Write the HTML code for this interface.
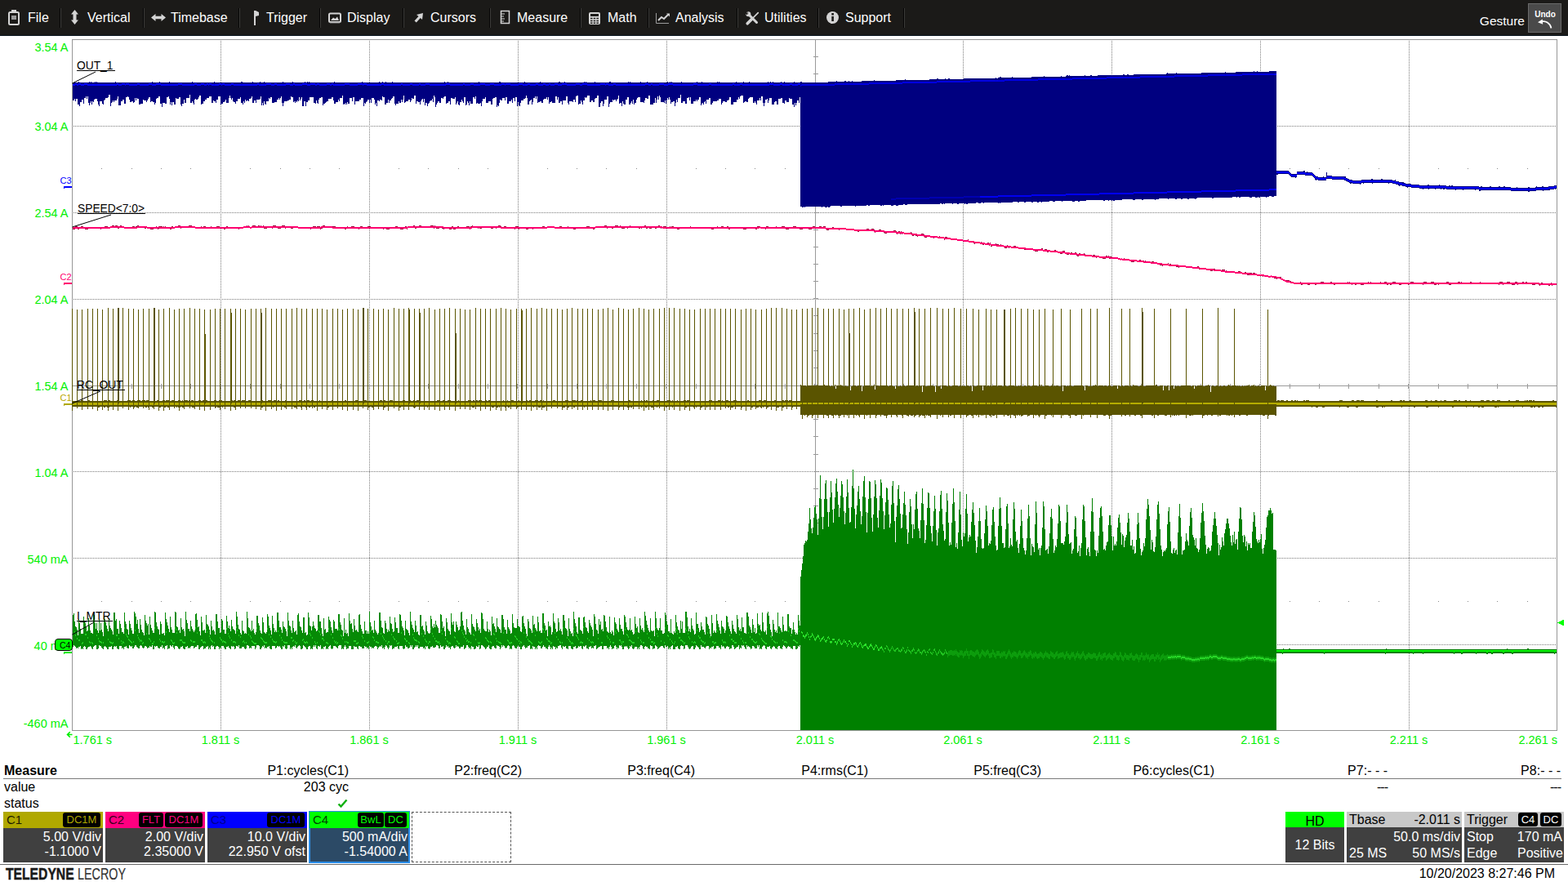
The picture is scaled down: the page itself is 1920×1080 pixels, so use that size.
<!DOCTYPE html>
<html lang="en"><head><meta charset="utf-8"><title>Oscilloscope</title>
<style>
html,body{margin:0;padding:0;background:#fff;}
body{width:1920px;height:1080px;position:relative;overflow:hidden;font-family:"Liberation Sans", Arial, sans-serif;}
.t{position:absolute;white-space:nowrap;}
.abs{position:absolute;}
#bar{position:absolute;left:0;top:0;width:1920px;height:43px;background:#1b1a18;border-bottom:1px solid #08141f;}
.sep{position:absolute;top:10px;width:1px;height:24px;background:#050505;border-right:1px solid #3c3b39;}
.ch{position:absolute;top:994px;width:122px;height:62px;background:#404040;}
.ch .hd{position:absolute;left:0;top:0;width:100%;height:20px;}
.bdg{position:absolute;top:1px;height:18px;background:#000;border-radius:3px;font-size:13px;line-height:18px;text-align:center;}
svg{position:absolute;left:0;top:0;}
</style></head><body>
<svg width="1920" height="1080" viewBox="0 0 1920 1080" shape-rendering="crispEdges"><path d="M90 154.5H1906" stroke="#7c7c7c" stroke-width="1" stroke-dasharray="1 1" fill="none"/><path d="M90 260.5H1906" stroke="#7c7c7c" stroke-width="1" stroke-dasharray="1 1" fill="none"/><path d="M90 366.5H1906" stroke="#7c7c7c" stroke-width="1" stroke-dasharray="1 1" fill="none"/><path d="M90 577.5H1906" stroke="#7c7c7c" stroke-width="1" stroke-dasharray="1 1" fill="none"/><path d="M90 683.5H1906" stroke="#7c7c7c" stroke-width="1" stroke-dasharray="1 1" fill="none"/><path d="M90 789.5H1906" stroke="#7c7c7c" stroke-width="1" stroke-dasharray="1 1" fill="none"/><path d="M270.5 50V894" stroke="#7c7c7c" stroke-width="1" stroke-dasharray="1 1" fill="none"/><path d="M452.5 50V894" stroke="#7c7c7c" stroke-width="1" stroke-dasharray="1 1" fill="none"/><path d="M634.5 50V894" stroke="#7c7c7c" stroke-width="1" stroke-dasharray="1 1" fill="none"/><path d="M816.5 50V894" stroke="#7c7c7c" stroke-width="1" stroke-dasharray="1 1" fill="none"/><path d="M1179.5 50V894" stroke="#7c7c7c" stroke-width="1" stroke-dasharray="1 1" fill="none"/><path d="M1361.5 50V894" stroke="#7c7c7c" stroke-width="1" stroke-dasharray="1 1" fill="none"/><path d="M1543.5 50V894" stroke="#7c7c7c" stroke-width="1" stroke-dasharray="1 1" fill="none"/><path d="M1725.5 50V894" stroke="#7c7c7c" stroke-width="1" stroke-dasharray="1 1" fill="none"/><path d="M124 206.5h1M161 206.5h1M197 206.5h1M233 206.5h1M306 206.5h1M343 206.5h1M379 206.5h1M415 206.5h1M488 206.5h1M524 206.5h1M561 206.5h1M597 206.5h1M670 206.5h1M706 206.5h1M742 206.5h1M779 206.5h1M852 206.5h1M888 206.5h1M924 206.5h1M961 206.5h1M1033 206.5h1M1070 206.5h1M1106 206.5h1M1142 206.5h1M1215 206.5h1M1252 206.5h1M1288 206.5h1M1324 206.5h1M1397 206.5h1M1433 206.5h1M1470 206.5h1M1506 206.5h1M1579 206.5h1M1615 206.5h1M1651 206.5h1M1688 206.5h1M1761 206.5h1M1797 206.5h1M1833 206.5h1M1870 206.5h1M124 736.5h1M161 736.5h1M197 736.5h1M233 736.5h1M306 736.5h1M343 736.5h1M379 736.5h1M415 736.5h1M488 736.5h1M524 736.5h1M561 736.5h1M597 736.5h1M670 736.5h1M706 736.5h1M742 736.5h1M779 736.5h1M852 736.5h1M888 736.5h1M924 736.5h1M961 736.5h1M1033 736.5h1M1070 736.5h1M1106 736.5h1M1142 736.5h1M1215 736.5h1M1252 736.5h1M1288 736.5h1M1324 736.5h1M1397 736.5h1M1433 736.5h1M1470 736.5h1M1506 736.5h1M1579 736.5h1M1615 736.5h1M1651 736.5h1M1688 736.5h1M1761 736.5h1M1797 736.5h1M1833 736.5h1M1870 736.5h1" stroke="#8a8a8a" stroke-width="1" fill="none"/><path d="M88 472.5H1906M124.5 470V476M161.5 470V476M197.5 470V476M233.5 470V476M270.5 470V476M306.5 470V476M343.5 470V476M379.5 470V476M415.5 470V476M452.5 470V476M488.5 470V476M524.5 470V476M561.5 470V476M597.5 470V476M633.5 470V476M670.5 470V476M706.5 470V476M742.5 470V476M779.5 470V476M815.5 470V476M852.5 470V476M888.5 470V476M924.5 470V476M961.5 470V476M997.5 470V476M1033.5 470V476M1070.5 470V476M1106.5 470V476M1142.5 470V476M1179.5 470V476M1215.5 470V476M1252.5 470V476M1288.5 470V476M1324.5 470V476M1361.5 470V476M1397.5 470V476M1433.5 470V476M1470.5 470V476M1506.5 470V476M1542.5 470V476M1579.5 470V476M1615.5 470V476M1651.5 470V476M1688.5 470V476M1724.5 470V476M1761.5 470V476M1797.5 470V476M1833.5 470V476M1870.5 470V476M998.5 48V894M996 69.5H1002M996 90.5H1002M996 111.5H1002M996 133.5H1002M996 154.5H1002M996 175.5H1002M996 196.5H1002M996 217.5H1002M996 238.5H1002M996 260.5H1002M996 281.5H1002M996 302.5H1002M996 323.5H1002M996 344.5H1002M996 365.5H1002M996 386.5H1002M996 408.5H1002M996 429.5H1002M996 450.5H1002M996 471.5H1002M996 492.5H1002M996 513.5H1002M996 534.5H1002M996 556.5H1002M996 577.5H1002M996 598.5H1002M996 619.5H1002M996 640.5H1002M996 661.5H1002M996 682.5H1002M996 704.5H1002M996 725.5H1002M996 746.5H1002M996 767.5H1002M996 788.5H1002M996 809.5H1002M996 831.5H1002M996 852.5H1002M996 873.5H1002" stroke="#9a9a9a" stroke-width="1" fill="none"/><path d="M89.5 101V123M90.5 101V123M91.5 101V121M92.5 101V124M93.5 101V121M94.5 101V121M95.5 101V128M96.5 100V128M97.5 101V130M98.5 101V125M99.5 101V125M100.5 101V122M101.5 101V122M102.5 101V127M103.5 101V120M104.5 101V120M105.5 101V118M106.5 101V121M107.5 101V118M108.5 101V126M109.5 100V129M110.5 101V126M111.5 100V124M112.5 101V128M113.5 101V124M114.5 101V125M115.5 101V122M116.5 100V121M117.5 101V121M118.5 100V121M119.5 101V124M120.5 101V128M121.5 101V130M122.5 101V124M123.5 101V124M124.5 101V124M125.5 101V127M126.5 101V128M127.5 101V123M128.5 101V122M129.5 101V120M130.5 101V120M131.5 101V120M132.5 101V119M133.5 101V116M134.5 101V116M135.5 101V130M136.5 101V126M137.5 101V125M138.5 101V123M139.5 101V125M140.5 101V123M141.5 100V123M142.5 101V123M143.5 101V121M144.5 101V118M145.5 101V129M146.5 101V129M147.5 101V129M148.5 101V124M149.5 101V124M150.5 101V122M151.5 101V122M152.5 101V127M153.5 101V127M154.5 101V119M155.5 101V119M156.5 101V118M157.5 101V119M158.5 101V122M159.5 101V125M160.5 101V125M161.5 101V124M162.5 101V124M163.5 101V126M164.5 101V125M165.5 101V120M166.5 101V123M167.5 101V120M168.5 101V121M169.5 101V121M170.5 101V128M171.5 101V128M172.5 101V127M173.5 101V127M174.5 101V127M175.5 101V122M176.5 101V123M177.5 101V123M178.5 101V123M179.5 101V125M180.5 101V123M181.5 101V121M182.5 101V119M183.5 101V119M184.5 101V125M185.5 101V124M186.5 100V124M187.5 101V125M188.5 101V125M189.5 101V128M190.5 101V126M191.5 101V121M192.5 101V120M193.5 101V120M194.5 101V118M195.5 100V118M196.5 101V127M197.5 101V127M198.5 101V131M199.5 101V126M200.5 101V126M201.5 101V126M202.5 101V127M203.5 101V127M204.5 101V119M205.5 101V119M206.5 101V118M207.5 100V121M208.5 101V128M209.5 101V125M210.5 101V129M211.5 101V125M212.5 101V125M213.5 101V128M214.5 101V128M215.5 101V120M216.5 101V121M217.5 101V121M218.5 101V121M219.5 101V119M220.5 101V119M221.5 101V128M222.5 101V130M223.5 101V127M224.5 101V127M225.5 101V122M226.5 101V126M227.5 101V126M228.5 101V120M229.5 101V120M230.5 101V120M231.5 101V120M232.5 101V116M233.5 101V126M234.5 101V126M235.5 100V124M236.5 101V126M237.5 101V128M238.5 101V122M239.5 101V121M240.5 101V122M241.5 101V122M242.5 101V121M243.5 101V119M244.5 101V117M245.5 101V117M246.5 101V128M247.5 101V127M248.5 101V127M249.5 101V124M250.5 101V124M251.5 101V122M252.5 101V122M253.5 101V120M254.5 101V120M255.5 101V120M256.5 101V118M257.5 101V118M258.5 101V118M259.5 101V126M260.5 101V126M261.5 101V123M262.5 100V124M263.5 101V124M264.5 101V126M265.5 101V122M266.5 101V122M267.5 101V118M268.5 101V118M269.5 101V118M270.5 101V128M271.5 101V127M272.5 101V127M273.5 101V125M274.5 101V125M275.5 101V124M276.5 101V122M277.5 101V126M278.5 101V126M279.5 101V126M280.5 101V120M281.5 101V117M282.5 101V120M283.5 101V122M284.5 101V120M285.5 101V124M286.5 101V125M287.5 101V125M288.5 101V127M289.5 101V124M290.5 101V124M291.5 101V121M292.5 101V121M293.5 101V121M294.5 101V119M295.5 100V126M296.5 100V126M297.5 101V128M298.5 101V124M299.5 101V126M300.5 101V122M301.5 101V124M302.5 101V123M303.5 101V123M304.5 101V124M305.5 101V121M306.5 101V121M307.5 101V120M308.5 101V118M309.5 100V126M310.5 101V126M311.5 101V123M312.5 101V123M313.5 101V126M314.5 101V122M315.5 101V122M316.5 101V122M317.5 101V122M318.5 100V121M319.5 101V118M320.5 101V129M321.5 101V126M322.5 101V129M323.5 100V124M324.5 101V127M325.5 101V128M326.5 101V124M327.5 101V124M328.5 101V124M329.5 101V120M330.5 101V121M331.5 101V119M332.5 101V119M333.5 101V126M334.5 101V126M335.5 101V126M336.5 101V125M337.5 101V125M338.5 101V125M339.5 101V122M340.5 101V122M341.5 101V120M342.5 101V122M343.5 101V120M344.5 101V118M345.5 101V126M346.5 100V130M347.5 101V126M348.5 101V124M349.5 101V124M350.5 101V124M351.5 101V124M352.5 101V123M353.5 101V123M354.5 101V122M355.5 101V122M356.5 101V118M357.5 101V119M358.5 100V119M359.5 101V125M360.5 101V124M361.5 101V126M362.5 101V124M363.5 101V125M364.5 101V123M365.5 101V124M366.5 101V119M367.5 101V123M368.5 101V121M369.5 101V119M370.5 101V130M371.5 101V130M372.5 101V124M373.5 100V124M374.5 101V130M375.5 101V125M376.5 100V125M377.5 101V123M378.5 100V123M379.5 101V119M380.5 101V119M381.5 101V119M382.5 101V119M383.5 101V119M384.5 101V126M385.5 101V126M386.5 101V127M387.5 101V123M388.5 101V126M389.5 101V127M390.5 101V122M391.5 101V120M392.5 101V120M393.5 101V119M394.5 101V119M395.5 101V129M396.5 101V127M397.5 101V127M398.5 101V126M399.5 101V125M400.5 101V124M401.5 101V124M402.5 101V121M403.5 101V121M404.5 101V121M405.5 101V121M406.5 101V119M407.5 101V119M408.5 101V123M409.5 100V127M410.5 101V127M411.5 101V125M412.5 101V125M413.5 101V125M414.5 101V122M415.5 101V124M416.5 101V120M417.5 101V120M418.5 101V120M419.5 101V117M420.5 101V128M421.5 101V127M422.5 101V128M423.5 101V126M424.5 101V128M425.5 101V125M426.5 101V127M427.5 101V127M428.5 101V120M429.5 101V120M430.5 101V120M431.5 101V124M432.5 101V119M433.5 101V119M434.5 101V128M435.5 101V124M436.5 101V124M437.5 101V124M438.5 101V124M439.5 101V124M440.5 101V122M441.5 101V122M442.5 101V120M443.5 100V120M444.5 101V120M445.5 101V130M446.5 101V126M447.5 101V127M448.5 101V125M449.5 101V124M450.5 101V122M451.5 101V122M452.5 101V126M453.5 101V122M454.5 101V126M455.5 101V120M456.5 101V120M457.5 101V120M458.5 101V122M459.5 101V128M460.5 101V126M461.5 101V130M462.5 101V123M463.5 101V123M464.5 100V124M465.5 101V122M466.5 101V122M467.5 101V123M468.5 100V118M469.5 101V119M470.5 101V119M471.5 101V128M472.5 100V128M473.5 101V126M474.5 101V126M475.5 101V122M476.5 101V126M477.5 101V123M478.5 101V123M479.5 101V121M480.5 100V120M481.5 101V118M482.5 101V118M483.5 101V127M484.5 101V129M485.5 101V127M486.5 101V127M487.5 101V127M488.5 101V124M489.5 101V126M490.5 101V126M491.5 101V122M492.5 101V125M493.5 101V122M494.5 101V117M495.5 101V126M496.5 101V125M497.5 101V124M498.5 101V124M499.5 101V124M500.5 101V122M501.5 101V122M502.5 101V125M503.5 101V123M504.5 101V120M505.5 101V121M506.5 101V121M507.5 101V117M508.5 101V117M509.5 101V127M510.5 101V124M511.5 101V124M512.5 101V125M513.5 101V125M514.5 101V128M515.5 101V124M516.5 101V122M517.5 101V121M518.5 101V125M519.5 101V121M520.5 101V129M521.5 101V126M522.5 101V126M523.5 101V130M524.5 101V127M525.5 101V126M526.5 101V124M527.5 101V123M528.5 101V123M529.5 101V121M530.5 101V125M531.5 101V117M532.5 101V119M533.5 101V131M534.5 101V128M535.5 101V126M536.5 101V124M537.5 101V124M538.5 101V126M539.5 101V126M540.5 101V120M541.5 101V120M542.5 101V121M543.5 101V119M544.5 100V118M545.5 101V118M546.5 101V127M547.5 101V126M548.5 100V126M549.5 101V124M550.5 101V124M551.5 101V128M552.5 101V120M553.5 101V120M554.5 101V121M555.5 101V121M556.5 101V121M557.5 101V119M558.5 101V128M559.5 101V126M560.5 101V124M561.5 101V128M562.5 101V129M563.5 101V125M564.5 101V125M565.5 101V122M566.5 101V124M567.5 101V126M568.5 101V119M569.5 101V119M570.5 101V129M571.5 101V128M572.5 101V124M573.5 101V126M574.5 101V129M575.5 101V124M576.5 101V127M577.5 101V127M578.5 101V127M579.5 101V119M580.5 101V119M581.5 101V121M582.5 101V118M583.5 101V127M584.5 101V126M585.5 101V127M586.5 100V127M587.5 101V127M588.5 101V126M589.5 101V130M590.5 101V124M591.5 101V121M592.5 101V121M593.5 101V121M594.5 101V119M595.5 101V126M596.5 101V126M597.5 101V126M598.5 101V124M599.5 101V124M600.5 101V124M601.5 101V128M602.5 101V128M603.5 101V121M604.5 101V120M605.5 101V120M606.5 101V119M607.5 101V119M608.5 101V131M609.5 101V129M610.5 101V130M611.5 100V126M612.5 100V122M613.5 101V123M614.5 101V123M615.5 101V120M616.5 101V120M617.5 101V120M618.5 101V123M619.5 101V119M620.5 101V119M621.5 101V127M622.5 101V127M623.5 101V124M624.5 101V124M625.5 101V124M626.5 101V122M627.5 101V126M628.5 101V120M629.5 101V120M630.5 101V124M631.5 101V119M632.5 101V119M633.5 101V130M634.5 101V125M635.5 101V129M636.5 101V130M637.5 101V126M638.5 101V123M639.5 101V123M640.5 101V123M641.5 101V121M642.5 100V121M643.5 101V120M644.5 101V117M645.5 101V120M646.5 101V128M647.5 101V128M648.5 101V124M649.5 101V123M650.5 101V122M651.5 101V128M652.5 101V125M653.5 101V120M654.5 101V120M655.5 101V118M656.5 101V121M657.5 101V118M658.5 101V126M659.5 101V125M660.5 101V125M661.5 100V124M662.5 101V124M663.5 101V126M664.5 101V126M665.5 101V122M666.5 101V121M667.5 101V121M668.5 101V121M669.5 101V119M670.5 101V122M671.5 101V119M672.5 101V127M673.5 101V125M674.5 101V125M675.5 101V124M676.5 101V126M677.5 101V126M678.5 101V126M679.5 101V126M680.5 101V118M681.5 101V118M682.5 101V122M683.5 101V119M684.5 100V126M685.5 100V126M686.5 101V124M687.5 101V124M688.5 101V128M689.5 101V123M690.5 101V123M691.5 100V123M692.5 101V123M693.5 101V118M694.5 101V118M695.5 101V126M696.5 101V128M697.5 101V124M698.5 101V124M699.5 101V124M700.5 101V124M701.5 101V125M702.5 101V122M703.5 101V122M704.5 101V125M705.5 101V118M706.5 101V117M707.5 101V117M708.5 101V128M709.5 101V127M710.5 101V127M711.5 101V123M712.5 101V125M713.5 101V128M714.5 101V123M715.5 100V123M716.5 101V119M717.5 100V120M718.5 101V119M719.5 101V117M720.5 101V117M721.5 101V117M722.5 101V125M723.5 101V125M724.5 101V123M725.5 101V123M726.5 101V125M727.5 101V125M728.5 100V121M729.5 101V120M730.5 101V120M731.5 101V117M732.5 101V117M733.5 101V131M734.5 101V131M735.5 101V126M736.5 101V124M737.5 101V124M738.5 101V130M739.5 101V127M740.5 101V122M741.5 101V122M742.5 101V122M743.5 101V118M744.5 101V118M745.5 101V131M746.5 100V127M747.5 100V125M748.5 101V125M749.5 101V125M750.5 101V122M751.5 101V123M752.5 101V122M753.5 101V122M754.5 101V124M755.5 101V122M756.5 101V121M757.5 101V117M758.5 101V127M759.5 101V126M760.5 101V126M761.5 101V130M762.5 101V124M763.5 101V127M764.5 101V128M765.5 101V128M766.5 101V122M767.5 101V122M768.5 101V119M769.5 100V119M770.5 101V128M771.5 100V128M772.5 101V126M773.5 101V124M774.5 101V127M775.5 101V122M776.5 101V128M777.5 101V126M778.5 101V126M779.5 101V122M780.5 101V120M781.5 101V119M782.5 101V119M783.5 101V119M784.5 100V125M785.5 101V125M786.5 101V125M787.5 101V125M788.5 101V126M789.5 101V123M790.5 101V120M791.5 101V120M792.5 100V121M793.5 101V121M794.5 101V117M795.5 101V117M796.5 101V128M797.5 101V128M798.5 101V128M799.5 101V128M800.5 101V126M801.5 101V126M802.5 101V120M803.5 101V126M804.5 101V122M805.5 101V118M806.5 101V122M807.5 101V117M808.5 101V119M809.5 101V125M810.5 101V125M811.5 101V125M812.5 101V125M813.5 101V126M814.5 101V123M815.5 101V127M816.5 101V123M817.5 100V120M818.5 101V122M819.5 101V119M820.5 100V122M821.5 101V127M822.5 100V125M823.5 101V125M824.5 101V124M825.5 101V124M826.5 101V130M827.5 101V126M828.5 101V122M829.5 101V125M830.5 101V120M831.5 101V120M832.5 101V120M833.5 101V116M834.5 100V126M835.5 101V126M836.5 101V124M837.5 101V124M838.5 101V124M839.5 101V127M840.5 101V127M841.5 101V120M842.5 101V120M843.5 101V119M844.5 101V123M845.5 101V119M846.5 101V127M847.5 101V127M848.5 101V127M849.5 101V124M850.5 101V124M851.5 101V124M852.5 101V122M853.5 100V124M854.5 101V122M855.5 101V122M856.5 101V119M857.5 101V119M858.5 101V129M859.5 100V127M860.5 101V126M861.5 101V128M862.5 101V125M863.5 101V124M864.5 101V127M865.5 101V122M866.5 101V122M867.5 101V122M868.5 101V120M869.5 101V120M870.5 101V128M871.5 101V128M872.5 101V126M873.5 101V124M874.5 101V124M875.5 101V124M876.5 101V124M877.5 101V124M878.5 100V123M879.5 101V123M880.5 100V121M881.5 101V121M882.5 101V121M883.5 101V128M884.5 101V126M885.5 101V124M886.5 101V124M887.5 101V124M888.5 101V125M889.5 101V125M890.5 101V123M891.5 101V123M892.5 101V122M893.5 101V119M894.5 101V119M895.5 101V128M896.5 101V128M897.5 101V128M898.5 101V125M899.5 101V125M900.5 101V125M901.5 100V125M902.5 101V122M903.5 101V122M904.5 101V119M905.5 101V121M906.5 101V118M907.5 101V117M908.5 101V117M909.5 101V117M910.5 100V126M911.5 101V125M912.5 101V124M913.5 101V124M914.5 101V125M915.5 101V125M916.5 101V121M917.5 100V120M918.5 101V119M919.5 101V119M920.5 101V119M921.5 101V119M922.5 101V126M923.5 101V126M924.5 101V124M925.5 101V126M926.5 101V128M927.5 101V123M928.5 101V123M929.5 101V123M930.5 101V120M931.5 101V123M932.5 101V118M933.5 101V118M934.5 101V126M935.5 101V130M936.5 101V126M937.5 101V122M938.5 101V122M939.5 101V121M940.5 100V126M941.5 101V123M942.5 101V120M943.5 100V120M944.5 101V120M945.5 101V128M946.5 100V128M947.5 101V128M948.5 101V125M949.5 101V124M950.5 101V124M951.5 101V128M952.5 101V128M953.5 101V121M954.5 101V121M955.5 101V121M956.5 100V120M957.5 101V120M958.5 101V126M959.5 101V126M960.5 100V127M961.5 101V123M962.5 101V123M963.5 101V125M964.5 101V125M965.5 101V125M966.5 101V120M967.5 101V121M968.5 101V121M969.5 101V121M970.5 101V128M971.5 101V128M972.5 100V131M973.5 101V126M974.5 101V129M975.5 101V126M976.5 101V123M977.5 101V123M978.5 101V126M979.5 101V119" stroke="#000080" stroke-width="1" fill="none" /><path d="M89.5 103V105M90.5 103V105M91.5 103V105M92.5 102V104M93.5 102V104M94.5 103V105M95.5 103V105M96.5 102V104M97.5 102V104M98.5 102V104M99.5 103V105M100.5 103V105M101.5 103V105M102.5 103V105M103.5 102V104M104.5 102V104M105.5 102V104M106.5 102V104M107.5 103V105M108.5 103V105M109.5 103V105M110.5 103V105M111.5 103V105M112.5 103V105M113.5 103V105M114.5 103V105M115.5 103V105M116.5 103V105M117.5 103V105M118.5 103V105M119.5 103V105M120.5 103V105M121.5 103V105M122.5 103V105M123.5 103V105M124.5 103V105M125.5 103V105M126.5 103V105M127.5 103V105M128.5 103V105M129.5 103V105M130.5 103V105M131.5 103V105M132.5 103V105M133.5 103V105M134.5 103V105M135.5 103V105M136.5 103V105M137.5 103V105M138.5 103V105M139.5 103V105M140.5 103V105M141.5 103V105M142.5 103V105M143.5 102V104M144.5 102V104M145.5 103V105M146.5 103V105M147.5 103V105M148.5 103V105M149.5 102V104M150.5 102V104M151.5 102V104M152.5 102V104M153.5 103V105M154.5 102V104M155.5 102V104M156.5 102V104M157.5 102V104M158.5 103V105M159.5 103V105M160.5 103V105M161.5 103V105M162.5 103V105M163.5 103V105M164.5 103V105M165.5 103V105M166.5 103V105M167.5 103V105M168.5 102V104M169.5 102V104M170.5 102V104M171.5 103V105M172.5 103V105M173.5 103V105M174.5 103V105M175.5 103V105M176.5 103V105M177.5 103V105M178.5 103V105M179.5 103V105M180.5 103V105M181.5 103V105M182.5 102V104M183.5 102V104M184.5 102V104M185.5 102V104M186.5 103V105M187.5 103V105M188.5 103V105M189.5 103V105M190.5 103V105M191.5 102V104M192.5 102V104M193.5 102V104M194.5 102V104M195.5 102V104M196.5 102V104M197.5 103V105M198.5 103V105M199.5 103V105M200.5 103V105M201.5 103V105M202.5 103V105M203.5 103V105M204.5 103V105M205.5 103V105M206.5 103V105M207.5 103V105M208.5 103V105M209.5 103V105M210.5 103V105M211.5 103V105M212.5 103V105M213.5 103V105M214.5 103V105M215.5 103V105M216.5 103V105M217.5 103V105M218.5 102V104M219.5 102V104M220.5 102V104M221.5 102V104M222.5 102V104M223.5 103V105M224.5 103V105M225.5 103V105M226.5 103V105M227.5 103V105M228.5 103V105M229.5 103V105M230.5 103V105M231.5 103V105M232.5 103V105M233.5 103V105M234.5 103V105M235.5 103V105M236.5 103V105M237.5 103V105M238.5 102V104M239.5 102V104M240.5 102V104M241.5 103V105M242.5 103V105M243.5 103V105M244.5 103V105M245.5 103V105M246.5 102V104M247.5 102V104M248.5 102V104M249.5 102V104M250.5 103V105M251.5 103V105M252.5 103V105M253.5 102V104M254.5 102V104M255.5 103V105M256.5 102V104M257.5 102V104M258.5 102V104M259.5 103V105M260.5 103V105M261.5 103V105M262.5 103V105M263.5 103V105M264.5 103V105M265.5 103V105M266.5 103V105M267.5 103V105M268.5 102V104M269.5 102V104M270.5 102V104M271.5 103V105M272.5 102V104M273.5 102V104M274.5 102V104M275.5 103V105M276.5 103V105M277.5 103V105M278.5 103V105M279.5 103V105M280.5 103V105M281.5 103V105M282.5 103V105M283.5 102V104M284.5 102V104M285.5 102V104M286.5 103V105M287.5 103V105M288.5 103V105M289.5 103V105M290.5 103V105M291.5 103V105M292.5 103V105M293.5 103V105M294.5 103V105M295.5 103V105M296.5 103V105M297.5 103V105M298.5 103V105M299.5 103V105M300.5 103V105M301.5 103V105M302.5 103V105M303.5 103V105M304.5 103V105M305.5 103V105M306.5 103V105M307.5 103V105M308.5 103V105M309.5 103V105M310.5 103V105M311.5 103V105M312.5 103V105M313.5 103V105M314.5 103V105M315.5 102V104M316.5 102V104M317.5 103V105M318.5 103V105M319.5 103V105M320.5 103V105M321.5 103V105M322.5 103V105M323.5 103V105M324.5 103V105M325.5 103V105M326.5 102V104M327.5 102V104M328.5 102V104M329.5 102V104M330.5 102V104M331.5 102V104M332.5 103V105M333.5 103V105M334.5 103V105M335.5 103V105M336.5 102V104M337.5 102V104M338.5 102V104M339.5 103V105M340.5 103V105M341.5 103V105M342.5 103V105M343.5 103V105M344.5 103V105M345.5 103V105M346.5 103V105M347.5 103V105M348.5 103V105M349.5 103V105M350.5 102V104M351.5 102V104M352.5 102V104M353.5 102V104M354.5 102V104M355.5 103V105M356.5 103V105M357.5 103V105M358.5 103V105M359.5 102V104M360.5 102V104M361.5 103V105M362.5 103V105M363.5 103V105M364.5 103V105M365.5 103V105M366.5 103V105M367.5 103V105M368.5 103V105M369.5 103V105M370.5 102V104M371.5 102V104M372.5 102V104M373.5 102V104M374.5 102V104M375.5 102V104M376.5 103V105M377.5 103V105M378.5 103V105M379.5 103V105M380.5 102V104M381.5 102V104M382.5 102V104M383.5 102V104M384.5 102V104M385.5 102V104M386.5 103V105M387.5 103V105M388.5 102V104M389.5 102V104M390.5 102V104M391.5 103V105M392.5 103V105M393.5 103V105M394.5 103V105M395.5 103V105M396.5 103V105M397.5 103V105M398.5 103V105M399.5 103V105M400.5 102V104M401.5 102V104M402.5 102V104M403.5 102V104M404.5 103V105M405.5 103V105M406.5 102V104M407.5 102V104M408.5 103V105M409.5 103V105M410.5 103V105M411.5 103V105M412.5 103V105M413.5 103V105M414.5 103V105M415.5 103V105M416.5 103V105M417.5 103V105M418.5 103V105M419.5 103V105M420.5 103V105M421.5 103V105M422.5 102V104M423.5 102V104M424.5 102V104M425.5 102V104M426.5 102V104M427.5 102V104M428.5 103V105M429.5 103V105M430.5 103V105M431.5 103V105M432.5 103V105M433.5 103V105M434.5 103V105M435.5 103V105M436.5 103V105M437.5 103V105M438.5 102V104M439.5 102V104M440.5 102V104M441.5 102V104M442.5 102V104M443.5 102V104M444.5 103V105M445.5 102V104M446.5 102V104M447.5 102V104M448.5 102V104M449.5 103V105M450.5 103V105M451.5 103V105M452.5 103V105M453.5 103V105M454.5 103V105M455.5 103V105M456.5 103V105M457.5 103V105M458.5 103V105M459.5 103V105M460.5 103V105M461.5 103V105M462.5 103V105M463.5 103V105M464.5 103V105M465.5 103V105M466.5 103V105M467.5 102V104M468.5 102V104M469.5 102V104M470.5 103V105M471.5 103V105M472.5 103V105M473.5 103V105M474.5 103V105M475.5 103V105M476.5 103V105M477.5 103V105M478.5 103V105M479.5 103V105M480.5 103V105M481.5 103V105M482.5 103V105M483.5 103V105M484.5 103V105M485.5 103V105M486.5 103V105M487.5 103V105M488.5 103V105M489.5 103V105M490.5 103V105M491.5 102V104M492.5 102V104M493.5 103V105M494.5 103V105M495.5 103V105M496.5 103V105M497.5 103V105M498.5 103V105M499.5 103V105M500.5 103V105M501.5 103V105M502.5 102V104M503.5 102V104M504.5 102V104M505.5 103V105M506.5 103V105M507.5 103V105M508.5 103V105M509.5 103V105M510.5 103V105M511.5 103V105M512.5 103V105M513.5 102V104M514.5 102V104M515.5 103V105M516.5 103V105M517.5 103V105M518.5 103V105M519.5 103V105M520.5 103V105M521.5 102V104M522.5 102V104M523.5 102V104M524.5 102V104M525.5 102V104M526.5 103V105M527.5 103V105M528.5 103V105M529.5 103V105M530.5 103V105M531.5 103V105M532.5 103V105M533.5 103V105M534.5 103V105M535.5 103V105M536.5 103V105M537.5 103V105M538.5 103V105M539.5 103V105M540.5 103V105M541.5 103V105M542.5 103V105M543.5 103V105M544.5 103V105M545.5 103V105M546.5 102V104M547.5 102V104M548.5 102V104M549.5 102V104M550.5 102V104M551.5 103V105M552.5 103V105M553.5 103V105M554.5 103V105M555.5 103V105M556.5 103V105M557.5 103V105M558.5 103V105M559.5 103V105M560.5 103V105M561.5 103V105M562.5 103V105M563.5 103V105M564.5 103V105M565.5 103V105M566.5 103V105M567.5 102V104M568.5 102V104M569.5 103V105M570.5 103V105M571.5 103V105M572.5 103V105M573.5 103V105M574.5 103V105M575.5 103V105M576.5 102V104M577.5 102V104M578.5 102V104M579.5 102V104M580.5 103V105M581.5 103V105M582.5 103V105M583.5 103V105M584.5 103V105M585.5 103V105M586.5 103V105M587.5 103V105M588.5 102V104M589.5 102V104M590.5 102V104M591.5 102V104M592.5 102V104M593.5 102V104M594.5 103V105M595.5 103V105M596.5 103V105M597.5 103V105M598.5 103V105M599.5 103V105M600.5 102V104M601.5 102V104M602.5 102V104M603.5 102V104M604.5 102V104M605.5 103V105M606.5 103V105M607.5 103V105M608.5 103V105M609.5 103V105M610.5 103V105M611.5 103V105M612.5 103V105M613.5 103V105M614.5 102V104M615.5 102V104M616.5 102V104M617.5 102V104M618.5 103V105M619.5 102V104M620.5 102V104M621.5 102V104M622.5 102V104M623.5 102V104M624.5 102V104M625.5 103V105M626.5 103V105M627.5 103V105M628.5 103V105M629.5 103V105M630.5 103V105M631.5 103V105M632.5 103V105M633.5 103V105M634.5 103V105M635.5 102V104M636.5 102V104M637.5 102V104M638.5 102V104M639.5 102V104M640.5 103V105M641.5 103V105M642.5 103V105M643.5 103V105M644.5 103V105M645.5 103V105M646.5 102V104M647.5 102V104M648.5 102V104M649.5 103V105M650.5 103V105M651.5 103V105M652.5 103V105M653.5 103V105M654.5 103V105M655.5 103V105M656.5 102V104M657.5 102V104M658.5 102V104M659.5 103V105M660.5 103V105M661.5 103V105M662.5 103V105M663.5 103V105M664.5 103V105M665.5 102V104M666.5 102V104M667.5 102V104M668.5 103V105M669.5 103V105M670.5 103V105M671.5 103V105M672.5 102V104M673.5 102V104M674.5 103V105M675.5 103V105M676.5 103V105M677.5 103V105M678.5 103V105M679.5 102V104M680.5 102V104M681.5 102V104M682.5 102V104M683.5 103V105M684.5 103V105M685.5 103V105M686.5 103V105M687.5 103V105M688.5 102V104M689.5 102V104M690.5 102V104M691.5 102V104M692.5 102V104M693.5 102V104M694.5 103V105M695.5 103V105M696.5 103V105M697.5 103V105M698.5 103V105M699.5 103V105M700.5 103V105M701.5 103V105M702.5 103V105M703.5 103V105M704.5 103V105M705.5 102V104M706.5 102V104M707.5 102V104M708.5 102V104M709.5 102V104M710.5 103V105M711.5 103V105M712.5 103V105M713.5 102V104M714.5 102V104M715.5 102V104M716.5 102V104M717.5 102V104M718.5 102V104M719.5 103V105M720.5 103V105M721.5 103V105M722.5 103V105M723.5 103V105M724.5 103V105M725.5 103V105M726.5 103V105M727.5 103V105M728.5 103V105M729.5 103V105M730.5 103V105M731.5 103V105M732.5 103V105M733.5 103V105M734.5 103V105M735.5 102V104M736.5 102V104M737.5 102V104M738.5 102V104M739.5 102V104M740.5 102V104M741.5 103V105M742.5 102V104M743.5 102V104M744.5 102V104M745.5 103V105M746.5 103V105M747.5 103V105M748.5 103V105M749.5 103V105M750.5 103V105M751.5 102V104M752.5 102V104M753.5 102V104M754.5 103V105M755.5 103V105M756.5 103V105M757.5 103V105M758.5 103V105M759.5 103V105M760.5 103V105M761.5 103V105M762.5 103V105M763.5 103V105M764.5 103V105M765.5 103V105M766.5 103V105M767.5 103V105M768.5 103V105M769.5 103V105M770.5 103V105M771.5 103V105M772.5 103V105M773.5 103V105M774.5 103V105M775.5 103V105M776.5 103V105M777.5 103V105M778.5 103V105M779.5 103V105M780.5 103V105M781.5 103V105M782.5 103V105M783.5 103V105M784.5 103V105M785.5 103V105M786.5 103V105M787.5 103V105M788.5 103V105M789.5 103V105M790.5 102V104M791.5 102V104M792.5 102V104M793.5 102V104M794.5 103V105M795.5 103V105M796.5 103V105M797.5 102V104M798.5 102V104M799.5 103V105M800.5 103V105M801.5 103V105M802.5 103V105M803.5 103V105M804.5 103V105M805.5 103V105M806.5 103V105M807.5 102V104M808.5 102V104M809.5 102V104M810.5 102V104M811.5 102V104M812.5 102V104M813.5 103V105M814.5 103V105M815.5 103V105M816.5 103V105M817.5 103V105M818.5 102V104M819.5 102V104M820.5 102V104M821.5 102V104M822.5 102V104M823.5 102V104M824.5 103V105M825.5 103V105M826.5 103V105M827.5 103V105M828.5 103V105M829.5 103V105M830.5 103V105M831.5 103V105M832.5 103V105M833.5 103V105M834.5 103V105M835.5 103V105M836.5 103V105M837.5 103V105M838.5 103V105M839.5 103V105M840.5 103V105M841.5 103V105M842.5 103V105M843.5 103V105M844.5 103V105M845.5 103V105M846.5 103V105M847.5 103V105M848.5 103V105M849.5 102V104M850.5 102V104M851.5 102V104M852.5 102V104M853.5 102V104M854.5 103V105M855.5 103V105M856.5 103V105M857.5 103V105M858.5 103V105M859.5 103V105M860.5 103V105M861.5 103V105M862.5 103V105M863.5 103V105M864.5 103V105M865.5 103V105M866.5 103V105M867.5 103V105M868.5 102V104M869.5 102V104M870.5 102V104M871.5 103V105M872.5 103V105M873.5 103V105M874.5 103V105M875.5 103V105M876.5 103V105M877.5 103V105M878.5 103V105M879.5 103V105M880.5 103V105M881.5 103V105M882.5 103V105M883.5 103V105M884.5 103V105M885.5 103V105M886.5 103V105M887.5 103V105M888.5 103V105M889.5 103V105M890.5 103V105M891.5 103V105M892.5 103V105M893.5 103V105M894.5 103V105M895.5 103V105M896.5 103V105M897.5 102V104M898.5 102V104M899.5 103V105M900.5 103V105M901.5 103V105M902.5 103V105M903.5 103V105M904.5 103V105M905.5 103V105M906.5 102V104M907.5 102V104M908.5 102V104M909.5 103V105M910.5 103V105M911.5 103V105M912.5 103V105M913.5 103V105M914.5 103V105M915.5 103V105M916.5 103V105M917.5 103V105M918.5 103V105M919.5 103V105M920.5 103V105M921.5 103V105M922.5 103V105M923.5 103V105M924.5 103V105M925.5 103V105M926.5 103V105M927.5 103V105M928.5 103V105M929.5 103V105M930.5 103V105M931.5 103V105M932.5 103V105M933.5 103V105M934.5 103V105M935.5 103V105M936.5 103V105M937.5 103V105M938.5 103V105M939.5 103V105M940.5 103V105M941.5 103V105M942.5 102V104M943.5 102V104M944.5 102V104M945.5 102V104M946.5 102V104M947.5 103V105M948.5 103V105M949.5 103V105M950.5 103V105M951.5 103V105M952.5 103V105M953.5 103V105M954.5 103V105M955.5 102V104M956.5 102V104M957.5 102V104M958.5 103V105M959.5 103V105M960.5 103V105M961.5 103V105M962.5 103V105M963.5 103V105M964.5 103V105M965.5 103V105M966.5 103V105M967.5 102V104M968.5 102V104M969.5 102V104M970.5 103V105M971.5 103V105M972.5 103V105M973.5 103V105M974.5 103V105M975.5 103V105M976.5 103V105M977.5 102V104M978.5 102V104M979.5 102V104" stroke="#0000f8" stroke-width="1" fill="none" /><path d="M980.5 100V253M981.5 100V253M982.5 101V254M983.5 101V254M984.5 101V253M985.5 101V254M986.5 101V253M987.5 101V253M988.5 101V253M989.5 101V253M990.5 101V253M991.5 101V253M992.5 101V253M993.5 101V253M994.5 101V253M995.5 101V253M996.5 101V253M997.5 101V253M998.5 101V253M999.5 101V253M1000.5 101V253M1001.5 101V253M1002.5 101V253M1003.5 101V253M1004.5 101V253M1005.5 101V253M1006.5 101V254M1007.5 101V253M1008.5 101V253M1009.5 101V253M1010.5 101V254M1011.5 101V254M1012.5 101V254M1013.5 101V253M1014.5 100V254M1015.5 100V254M1016.5 100V253M1017.5 100V252M1018.5 100V252M1019.5 100V252M1020.5 100V252M1021.5 100V252M1022.5 100V252M1023.5 100V252M1024.5 99V252M1025.5 100V252M1026.5 100V252M1027.5 100V252M1028.5 100V252M1029.5 100V253M1030.5 100V253M1031.5 100V252M1032.5 100V252M1033.5 100V252M1034.5 99V252M1035.5 99V252M1036.5 100V252M1037.5 100V252M1038.5 100V252M1039.5 99V252M1040.5 100V252M1041.5 100V252M1042.5 100V252M1043.5 99V252M1044.5 100V252M1045.5 100V252M1046.5 100V252M1047.5 100V253M1048.5 100V252M1049.5 100V252M1050.5 100V252M1051.5 100V252M1052.5 100V252M1053.5 100V252M1054.5 100V252M1055.5 99V252M1056.5 99V252M1057.5 99V252M1058.5 99V252M1059.5 99V252M1060.5 99V252M1061.5 99V251M1062.5 99V251M1063.5 99V252M1064.5 99V252M1065.5 99V251M1066.5 99V251M1067.5 99V251M1068.5 99V251M1069.5 99V251M1070.5 98V251M1071.5 99V251M1072.5 99V251M1073.5 99V251M1074.5 99V251M1075.5 99V251M1076.5 99V251M1077.5 99V251M1078.5 99V252M1079.5 99V252M1080.5 99V251M1081.5 99V252M1082.5 99V251M1083.5 99V251M1084.5 99V251M1085.5 99V251M1086.5 99V251M1087.5 99V251M1088.5 99V251M1089.5 99V251M1090.5 99V251M1091.5 99V252M1092.5 99V252M1093.5 99V252M1094.5 99V251M1095.5 99V251M1096.5 99V251M1097.5 98V252M1098.5 98V252M1099.5 98V252M1100.5 98V251M1101.5 98V251M1102.5 98V251M1103.5 98V251M1104.5 98V251M1105.5 98V251M1106.5 98V250M1107.5 98V250M1108.5 97V251M1109.5 98V251M1110.5 98V251M1111.5 98V250M1112.5 98V250M1113.5 98V250M1114.5 98V250M1115.5 98V250M1116.5 98V250M1117.5 98V250M1118.5 98V250M1119.5 98V250M1120.5 98V250M1121.5 98V250M1122.5 98V250M1123.5 98V250M1124.5 98V250M1125.5 98V250M1126.5 98V250M1127.5 98V250M1128.5 98V250M1129.5 98V250M1130.5 98V250M1131.5 98V250M1132.5 98V250M1133.5 98V250M1134.5 98V250M1135.5 98V250M1136.5 98V250M1137.5 98V250M1138.5 97V250M1139.5 97V250M1140.5 97V250M1141.5 97V250M1142.5 97V250M1143.5 97V250M1144.5 97V250M1145.5 97V250M1146.5 97V250M1147.5 96V250M1148.5 96V250M1149.5 97V250M1150.5 97V250M1151.5 97V249M1152.5 97V249M1153.5 97V250M1154.5 97V250M1155.5 97V249M1156.5 97V250M1157.5 96V249M1158.5 97V249M1159.5 97V249M1160.5 97V249M1161.5 96V249M1162.5 96V249M1163.5 97V249M1164.5 97V249M1165.5 97V249M1166.5 97V250M1167.5 97V249M1168.5 97V249M1169.5 97V249M1170.5 97V249M1171.5 97V249M1172.5 97V250M1173.5 97V250M1174.5 97V249M1175.5 97V249M1176.5 97V249M1177.5 97V249M1178.5 97V249M1179.5 97V249M1180.5 96V249M1181.5 96V250M1182.5 96V249M1183.5 96V250M1184.5 96V250M1185.5 96V249M1186.5 96V249M1187.5 96V249M1188.5 96V249M1189.5 96V249M1190.5 96V249M1191.5 96V249M1192.5 96V249M1193.5 96V249M1194.5 96V249M1195.5 96V248M1196.5 96V248M1197.5 96V248M1198.5 96V249M1199.5 96V249M1200.5 96V249M1201.5 96V248M1202.5 96V248M1203.5 96V248M1204.5 96V249M1205.5 96V248M1206.5 96V248M1207.5 96V248M1208.5 96V248M1209.5 96V248M1210.5 96V248M1211.5 96V248M1212.5 96V248M1213.5 96V248M1214.5 96V248M1215.5 96V248M1216.5 96V248M1217.5 96V248M1218.5 96V248M1219.5 95V248M1220.5 96V248M1221.5 96V248M1222.5 95V249M1223.5 95V248M1224.5 94V249M1225.5 94V248M1226.5 95V248M1227.5 95V248M1228.5 95V248M1229.5 95V248M1230.5 95V248M1231.5 95V248M1232.5 95V248M1233.5 95V248M1234.5 95V248M1235.5 95V248M1236.5 95V248M1237.5 95V248M1238.5 95V248M1239.5 94V248M1240.5 95V247M1241.5 95V247M1242.5 95V247M1243.5 95V247M1244.5 95V247M1245.5 95V247M1246.5 95V248M1247.5 95V248M1248.5 95V247M1249.5 95V247M1250.5 95V247M1251.5 95V247M1252.5 95V247M1253.5 95V247M1254.5 95V248M1255.5 95V248M1256.5 95V247M1257.5 95V247M1258.5 95V247M1259.5 95V247M1260.5 95V247M1261.5 95V247M1262.5 95V247M1263.5 94V248M1264.5 94V248M1265.5 94V247M1266.5 94V247M1267.5 94V247M1268.5 94V247M1269.5 94V247M1270.5 94V248M1271.5 94V248M1272.5 94V247M1273.5 94V247M1274.5 94V247M1275.5 94V248M1276.5 94V247M1277.5 94V247M1278.5 93V247M1279.5 94V247M1280.5 94V247M1281.5 94V247M1282.5 94V247M1283.5 94V247M1284.5 94V247M1285.5 94V246M1286.5 94V246M1287.5 94V246M1288.5 94V246M1289.5 94V247M1290.5 94V247M1291.5 94V247M1292.5 94V246M1293.5 94V246M1294.5 94V246M1295.5 94V246M1296.5 94V246M1297.5 94V246M1298.5 94V246M1299.5 93V246M1300.5 94V247M1301.5 94V246M1302.5 94V246M1303.5 94V246M1304.5 94V246M1305.5 93V246M1306.5 92V246M1307.5 92V246M1308.5 93V246M1309.5 92V246M1310.5 93V246M1311.5 93V246M1312.5 93V246M1313.5 93V247M1314.5 93V247M1315.5 93V247M1316.5 93V246M1317.5 93V246M1318.5 93V246M1319.5 93V246M1320.5 93V247M1321.5 93V247M1322.5 93V246M1323.5 93V246M1324.5 93V246M1325.5 93V246M1326.5 93V246M1327.5 93V246M1328.5 92V246M1329.5 93V246M1330.5 93V245M1331.5 93V245M1332.5 93V245M1333.5 93V245M1334.5 93V245M1335.5 92V245M1336.5 92V245M1337.5 93V245M1338.5 93V245M1339.5 93V245M1340.5 93V245M1341.5 93V245M1342.5 93V245M1343.5 93V245M1344.5 92V245M1345.5 92V245M1346.5 92V245M1347.5 92V245M1348.5 92V245M1349.5 92V245M1350.5 92V245M1351.5 92V246M1352.5 92V246M1353.5 92V245M1354.5 92V245M1355.5 92V245M1356.5 92V245M1357.5 92V246M1358.5 92V245M1359.5 92V245M1360.5 92V245M1361.5 92V246M1362.5 92V245M1363.5 92V246M1364.5 92V246M1365.5 92V245M1366.5 92V245M1367.5 92V245M1368.5 92V245M1369.5 92V245M1370.5 92V245M1371.5 92V245M1372.5 92V245M1373.5 92V245M1374.5 92V244M1375.5 91V244M1376.5 91V244M1377.5 92V244M1378.5 92V244M1379.5 92V244M1380.5 91V244M1381.5 91V244M1382.5 92V244M1383.5 92V244M1384.5 92V244M1385.5 92V244M1386.5 92V244M1387.5 92V245M1388.5 91V245M1389.5 91V245M1390.5 91V244M1391.5 91V244M1392.5 91V244M1393.5 91V244M1394.5 91V244M1395.5 91V244M1396.5 91V244M1397.5 91V244M1398.5 91V245M1399.5 91V245M1400.5 91V244M1401.5 91V244M1402.5 91V244M1403.5 91V244M1404.5 91V244M1405.5 91V244M1406.5 91V244M1407.5 91V244M1408.5 91V244M1409.5 91V244M1410.5 91V244M1411.5 91V244M1412.5 91V244M1413.5 91V244M1414.5 91V245M1415.5 91V244M1416.5 91V244M1417.5 91V244M1418.5 91V244M1419.5 91V243M1420.5 91V243M1421.5 91V243M1422.5 91V243M1423.5 91V243M1424.5 91V243M1425.5 91V243M1426.5 91V243M1427.5 91V243M1428.5 90V243M1429.5 89V243M1430.5 90V244M1431.5 90V243M1432.5 90V243M1433.5 90V243M1434.5 90V243M1435.5 90V243M1436.5 90V243M1437.5 90V243M1438.5 90V243M1439.5 90V244M1440.5 89V244M1441.5 90V243M1442.5 90V243M1443.5 90V243M1444.5 90V243M1445.5 90V243M1446.5 90V244M1447.5 90V244M1448.5 90V243M1449.5 90V243M1450.5 90V243M1451.5 90V243M1452.5 90V243M1453.5 90V243M1454.5 90V244M1455.5 90V244M1456.5 90V243M1457.5 90V243M1458.5 90V243M1459.5 90V243M1460.5 90V243M1461.5 90V243M1462.5 90V243M1463.5 90V244M1464.5 90V243M1465.5 90V243M1466.5 90V242M1467.5 90V242M1468.5 90V242M1469.5 90V242M1470.5 90V242M1471.5 89V242M1472.5 89V242M1473.5 89V242M1474.5 89V242M1475.5 89V242M1476.5 89V242M1477.5 89V242M1478.5 89V242M1479.5 89V242M1480.5 89V242M1481.5 89V242M1482.5 89V242M1483.5 89V242M1484.5 89V243M1485.5 89V243M1486.5 89V242M1487.5 89V242M1488.5 89V242M1489.5 89V242M1490.5 89V242M1491.5 89V242M1492.5 89V242M1493.5 89V242M1494.5 89V242M1495.5 89V242M1496.5 89V242M1497.5 89V242M1498.5 89V242M1499.5 89V242M1500.5 88V242M1501.5 89V242M1502.5 89V242M1503.5 89V242M1504.5 89V242M1505.5 89V242M1506.5 89V242M1507.5 89V242M1508.5 89V242M1509.5 89V241M1510.5 89V241M1511.5 89V241M1512.5 89V241M1513.5 88V241M1514.5 88V242M1515.5 88V241M1516.5 88V241M1517.5 88V242M1518.5 88V242M1519.5 88V241M1520.5 88V241M1521.5 88V241M1522.5 88V241M1523.5 88V241M1524.5 88V241M1525.5 88V241M1526.5 88V241M1527.5 88V241M1528.5 88V241M1529.5 88V241M1530.5 88V242M1531.5 88V242M1532.5 88V242M1533.5 88V241M1534.5 88V241M1535.5 87V241M1536.5 88V241M1537.5 88V242M1538.5 88V242M1539.5 87V242M1540.5 88V241M1541.5 88V242M1542.5 88V242M1543.5 88V241M1544.5 88V241M1545.5 88V241M1546.5 88V241M1547.5 88V241M1548.5 88V241M1549.5 88V241M1550.5 88V242M1551.5 88V241M1552.5 88V241M1553.5 88V241M1554.5 87V240M1555.5 87V240M1556.5 87V240M1557.5 87V241M1558.5 87V241M1559.5 87V241M1560.5 87V240M1561.5 87V240M1562.5 87V240" stroke="#000080" stroke-width="1" fill="none" /><path d="M980.5 104V106M981.5 103V105M982.5 103V105M983.5 103V105M984.5 103V105M985.5 103V105M986.5 103V105M987.5 103V105M988.5 103V105M989.5 103V105M990.5 103V105M991.5 103V105M992.5 103V105M993.5 103V105M994.5 103V105M995.5 103V105M996.5 103V105M997.5 103V105M998.5 103V105M999.5 103V105M1000.5 103V105M1001.5 103V105M1002.5 103V105M1003.5 103V105M1004.5 103V105M1005.5 103V105M1006.5 103V105M1007.5 103V105M1008.5 103V105M1009.5 103V105M1010.5 103V105M1011.5 103V105M1012.5 103V105M1013.5 103V105M1014.5 103V105M1015.5 103V105M1016.5 103V105M1017.5 103V105M1018.5 103V105M1019.5 103V105M1020.5 103V105M1021.5 103V105M1022.5 102V104M1023.5 102V104M1024.5 102V104M1025.5 102V104M1026.5 102V104M1027.5 102V104M1028.5 102V104M1029.5 102V104M1030.5 102V104M1031.5 102V104M1032.5 102V104M1033.5 102V104M1034.5 102V104M1035.5 102V104M1036.5 102V104M1037.5 102V104M1038.5 102V104M1039.5 102V104M1040.5 102V104M1041.5 102V104M1042.5 102V104M1043.5 102V104M1044.5 102V104M1045.5 102V104M1046.5 102V104M1047.5 102V104M1048.5 102V104M1049.5 102V104M1050.5 102V104M1051.5 102V104M1052.5 102V104M1053.5 102V104M1054.5 102V104M1055.5 102V104M1056.5 102V104M1057.5 102V104M1058.5 102V104M1059.5 102V104M1060.5 102V104M1061.5 102V104M1062.5 102V104M1063.5 102V104M1064.5 101V103M1065.5 101V103M1066.5 101V103M1067.5 101V103M1068.5 101V103M1069.5 101V103M1070.5 101V103M1071.5 101V103M1072.5 101V103M1073.5 101V103M1074.5 101V103M1075.5 101V103M1076.5 101V103M1077.5 101V103M1078.5 101V103M1079.5 101V103M1080.5 101V103M1081.5 101V103M1082.5 101V103M1083.5 101V103M1084.5 101V103M1085.5 101V103M1086.5 101V103M1087.5 101V103M1088.5 101V103M1089.5 101V103M1090.5 101V103M1091.5 101V103M1092.5 101V103M1093.5 101V103M1094.5 101V103M1095.5 101V103M1096.5 101V103M1097.5 101V103M1098.5 101V103M1099.5 101V103M1100.5 101V103M1101.5 101V103M1102.5 101V103M1103.5 101V103M1104.5 101V103M1105.5 100V102M1106.5 100V102M1107.5 100V102M1108.5 100V102M1109.5 100V102M1110.5 100V102M1111.5 100V102M1112.5 100V102M1113.5 100V102M1114.5 100V102M1115.5 100V102M1116.5 100V102M1117.5 100V102M1118.5 100V102M1119.5 100V102M1120.5 100V102M1121.5 100V102M1122.5 100V102M1123.5 100V102M1124.5 100V102M1125.5 100V102M1126.5 100V102M1127.5 100V102M1128.5 100V102M1129.5 100V102M1130.5 100V102M1131.5 100V102M1132.5 100V102M1133.5 100V102M1134.5 100V102M1135.5 100V102M1136.5 100V102M1137.5 100V102M1138.5 100V102M1139.5 100V102M1140.5 100V102M1141.5 100V102M1142.5 100V102M1143.5 100V102M1144.5 100V102M1145.5 100V102M1146.5 100V102M1147.5 99V101M1148.5 99V101M1149.5 99V101M1150.5 99V101M1151.5 99V101M1152.5 99V101M1153.5 99V101M1154.5 99V101M1155.5 99V101M1156.5 99V101M1157.5 99V101M1158.5 99V101M1159.5 99V101M1160.5 99V101M1161.5 99V101M1162.5 99V101M1163.5 99V101M1164.5 99V101M1165.5 99V101M1166.5 99V101M1167.5 99V101M1168.5 99V101M1169.5 99V101M1170.5 99V101M1171.5 99V101M1172.5 99V101M1173.5 99V101M1174.5 99V101M1175.5 99V101M1176.5 99V101M1177.5 99V101M1178.5 99V101M1179.5 99V101M1180.5 99V101M1181.5 99V101M1182.5 99V101M1183.5 99V101M1184.5 99V101M1185.5 99V101M1186.5 99V101M1187.5 99V101M1188.5 98V100M1189.5 98V100M1190.5 98V100M1191.5 98V100M1192.5 98V100M1193.5 98V100M1194.5 98V100M1195.5 98V100M1196.5 98V100M1197.5 98V100M1198.5 98V100M1199.5 98V100M1200.5 98V100M1201.5 98V100M1202.5 98V100M1203.5 98V100M1204.5 98V100M1205.5 98V100M1206.5 98V100M1207.5 98V100M1208.5 98V100M1209.5 98V100M1210.5 98V100M1211.5 98V100M1212.5 98V100M1213.5 98V100M1214.5 98V100M1215.5 98V100M1216.5 98V100M1217.5 98V100M1218.5 98V100M1219.5 98V100M1220.5 98V100M1221.5 98V100M1222.5 98V100M1223.5 98V100M1224.5 98V100M1225.5 98V100M1226.5 98V100M1227.5 98V100M1228.5 98V100M1229.5 98V100M1230.5 97V99M1231.5 97V99M1232.5 97V99M1233.5 97V99M1234.5 97V99M1235.5 97V99M1236.5 97V99M1237.5 97V99M1238.5 97V99M1239.5 97V99M1240.5 97V99M1241.5 97V99M1242.5 97V99M1243.5 97V99M1244.5 97V99M1245.5 97V99M1246.5 97V99M1247.5 97V99M1248.5 97V99M1249.5 97V99M1250.5 97V99M1251.5 97V99M1252.5 97V99M1253.5 97V99M1254.5 97V99M1255.5 97V99M1256.5 97V99M1257.5 97V99M1258.5 97V99M1259.5 97V99M1260.5 97V99M1261.5 97V99M1262.5 97V99M1263.5 97V99M1264.5 97V99M1265.5 97V99M1266.5 97V99M1267.5 97V99M1268.5 97V99M1269.5 97V99M1270.5 97V99M1271.5 96V98M1272.5 96V98M1273.5 96V98M1274.5 96V98M1275.5 96V98M1276.5 96V98M1277.5 96V98M1278.5 96V98M1279.5 96V98M1280.5 96V98M1281.5 96V98M1282.5 96V98M1283.5 96V98M1284.5 96V98M1285.5 96V98M1286.5 96V98M1287.5 96V98M1288.5 96V98M1289.5 96V98M1290.5 96V98M1291.5 96V98M1292.5 96V98M1293.5 96V98M1294.5 96V98M1295.5 96V98M1296.5 96V98M1297.5 96V98M1298.5 96V98M1299.5 96V98M1300.5 96V98M1301.5 96V98M1302.5 96V98M1303.5 96V98M1304.5 96V98M1305.5 96V98M1306.5 96V98M1307.5 96V98M1308.5 96V98M1309.5 96V98M1310.5 96V98M1311.5 96V98M1312.5 96V98M1313.5 95V97M1314.5 95V97M1315.5 95V97M1316.5 95V97M1317.5 95V97M1318.5 95V97M1319.5 95V97M1320.5 95V97M1321.5 95V97M1322.5 95V97M1323.5 95V97M1324.5 95V97M1325.5 95V97M1326.5 95V97M1327.5 95V97M1328.5 95V97M1329.5 95V97M1330.5 95V97M1331.5 95V97M1332.5 95V97M1333.5 95V97M1334.5 95V97M1335.5 95V97M1336.5 95V97M1337.5 95V97M1338.5 95V97M1339.5 95V97M1340.5 95V97M1341.5 95V97M1342.5 95V97M1343.5 95V97M1344.5 95V97M1345.5 95V97M1346.5 95V97M1347.5 95V97M1348.5 95V97M1349.5 95V97M1350.5 95V97M1351.5 95V97M1352.5 95V97M1353.5 95V97M1354.5 95V97M1355.5 94V96M1356.5 94V96M1357.5 94V96M1358.5 94V96M1359.5 94V96M1360.5 94V96M1361.5 94V96M1362.5 94V96M1363.5 94V96M1364.5 94V96M1365.5 94V96M1366.5 94V96M1367.5 94V96M1368.5 94V96M1369.5 94V96M1370.5 94V96M1371.5 94V96M1372.5 94V96M1373.5 94V96M1374.5 94V96M1375.5 94V96M1376.5 94V96M1377.5 94V96M1378.5 94V96M1379.5 94V96M1380.5 94V96M1381.5 94V96M1382.5 94V96M1383.5 94V96M1384.5 94V96M1385.5 94V96M1386.5 94V96M1387.5 94V96M1388.5 94V96M1389.5 94V96M1390.5 94V96M1391.5 94V96M1392.5 94V96M1393.5 94V96M1394.5 94V96M1395.5 94V96M1396.5 93V95M1397.5 93V95M1398.5 93V95M1399.5 93V95M1400.5 93V95M1401.5 93V95M1402.5 93V95M1403.5 93V95M1404.5 93V95M1405.5 93V95M1406.5 93V95M1407.5 93V95M1408.5 93V95M1409.5 93V95M1410.5 93V95M1411.5 93V95M1412.5 93V95M1413.5 93V95M1414.5 93V95M1415.5 93V95M1416.5 93V95M1417.5 93V95M1418.5 93V95M1419.5 93V95M1420.5 93V95M1421.5 93V95M1422.5 93V95M1423.5 93V95M1424.5 93V95M1425.5 93V95M1426.5 93V95M1427.5 93V95M1428.5 93V95M1429.5 93V95M1430.5 93V95M1431.5 93V95M1432.5 93V95M1433.5 93V95M1434.5 93V95M1435.5 93V95M1436.5 93V95M1437.5 93V95M1438.5 92V94M1439.5 92V94M1440.5 92V94M1441.5 92V94M1442.5 92V94M1443.5 92V94M1444.5 92V94M1445.5 92V94M1446.5 92V94M1447.5 92V94M1448.5 92V94M1449.5 92V94M1450.5 92V94M1451.5 92V94M1452.5 92V94M1453.5 92V94M1454.5 92V94M1455.5 92V94M1456.5 92V94M1457.5 92V94M1458.5 92V94M1459.5 92V94M1460.5 92V94M1461.5 92V94M1462.5 92V94M1463.5 92V94M1464.5 92V94M1465.5 92V94M1466.5 92V94M1467.5 92V94M1468.5 92V94M1469.5 92V94M1470.5 92V94M1471.5 92V94M1472.5 92V94M1473.5 92V94M1474.5 92V94M1475.5 92V94M1476.5 92V94M1477.5 92V94M1478.5 92V94M1479.5 91V93M1480.5 91V93M1481.5 91V93M1482.5 91V93M1483.5 91V93M1484.5 91V93M1485.5 91V93M1486.5 91V93M1487.5 91V93M1488.5 91V93M1489.5 91V93M1490.5 91V93M1491.5 91V93M1492.5 91V93M1493.5 91V93M1494.5 91V93M1495.5 91V93M1496.5 91V93M1497.5 91V93M1498.5 91V93M1499.5 91V93M1500.5 91V93M1501.5 91V93M1502.5 91V93M1503.5 91V93M1504.5 91V93M1505.5 91V93M1506.5 91V93M1507.5 91V93M1508.5 91V93M1509.5 91V93M1510.5 91V93M1511.5 91V93M1512.5 91V93M1513.5 91V93M1514.5 91V93M1515.5 91V93M1516.5 91V93M1517.5 91V93M1518.5 91V93M1519.5 91V93M1520.5 91V93M1521.5 90V92M1522.5 90V92M1523.5 90V92M1524.5 90V92M1525.5 90V92M1526.5 90V92M1527.5 90V92M1528.5 90V92M1529.5 90V92M1530.5 90V92M1531.5 90V92M1532.5 90V92M1533.5 90V92M1534.5 90V92M1535.5 90V92M1536.5 90V92M1537.5 90V92M1538.5 90V92M1539.5 90V92M1540.5 90V92M1541.5 90V92M1542.5 90V92M1543.5 90V92M1544.5 90V92M1545.5 90V92M1546.5 90V92M1547.5 90V92M1548.5 90V92M1549.5 90V92M1550.5 90V92M1551.5 90V92M1552.5 90V92M1553.5 90V92M1554.5 90V92M1555.5 90V92M1556.5 90V92M1557.5 90V92M1558.5 90V92M1559.5 90V92M1560.5 90V92M1561.5 90V92M1562.5 90V92" stroke="#0000e0" stroke-width="1" fill="none" /><path d="M1091.5 243V245M1092.5 243V245M1093.5 243V245M1094.5 243V245M1095.5 243V245M1096.5 243V245M1097.5 242V244M1098.5 242V244M1099.5 242V244M1100.5 242V244M1101.5 242V244M1102.5 242V244M1103.5 242V244M1104.5 242V244M1105.5 242V244M1106.5 242V244M1107.5 242V244M1108.5 242V244M1109.5 242V244M1110.5 242V244M1111.5 242V244M1112.5 242V244M1113.5 242V244M1114.5 242V244M1115.5 242V244M1116.5 242V244M1117.5 242V244M1118.5 242V244M1119.5 242V244M1120.5 242V244M1121.5 242V244M1122.5 242V244M1123.5 242V244M1124.5 242V244M1125.5 242V244M1126.5 242V244M1127.5 242V244M1128.5 242V244M1129.5 242V244M1130.5 242V244M1131.5 242V244M1132.5 242V244M1133.5 242V244M1134.5 242V244M1135.5 242V244M1136.5 242V244M1137.5 242V244M1138.5 241V243M1139.5 241V243M1140.5 241V243M1141.5 241V243M1142.5 241V243M1143.5 241V243M1144.5 241V243M1145.5 241V243M1146.5 241V243M1147.5 241V243M1148.5 241V243M1149.5 241V243M1150.5 241V243M1151.5 241V243M1152.5 241V243M1153.5 241V243M1154.5 241V243M1155.5 241V243M1156.5 241V243M1157.5 241V243M1158.5 241V243M1159.5 241V243M1160.5 241V243M1161.5 241V243M1162.5 241V243M1163.5 241V243M1164.5 241V243M1165.5 241V243M1166.5 241V243M1167.5 241V243M1168.5 241V243M1169.5 241V243M1170.5 241V243M1171.5 241V243M1172.5 241V243M1173.5 241V243M1174.5 241V243M1175.5 241V243M1176.5 241V243M1177.5 241V243M1178.5 241V243M1179.5 241V243M1180.5 240V242M1181.5 240V242M1182.5 240V242M1183.5 240V242M1184.5 240V242M1185.5 240V242M1186.5 240V242M1187.5 240V242M1188.5 240V242M1189.5 240V242M1190.5 240V242M1191.5 240V242M1192.5 240V242M1193.5 240V242M1194.5 240V242M1195.5 240V242M1196.5 240V242M1197.5 240V242M1198.5 240V242M1199.5 240V242" stroke="#0000b0" stroke-width="1" fill="none" /><path d="M1200.5 240V242M1201.5 240V242M1202.5 240V242M1203.5 240V242M1204.5 240V242M1205.5 240V242M1206.5 240V242M1207.5 240V242M1208.5 240V242M1209.5 240V242M1210.5 240V242M1211.5 240V242M1212.5 240V242M1213.5 240V242M1214.5 240V242M1215.5 240V242M1216.5 240V242M1217.5 240V242M1218.5 240V242M1219.5 240V242M1220.5 240V242M1221.5 240V242M1222.5 239V241M1223.5 239V241M1224.5 239V241M1225.5 239V241M1226.5 239V241M1227.5 239V241M1228.5 239V241M1229.5 239V241M1230.5 239V241M1231.5 239V241M1232.5 239V241M1233.5 239V241M1234.5 239V241M1235.5 239V241M1236.5 239V241M1237.5 239V241M1238.5 239V241M1239.5 239V241M1240.5 239V241M1241.5 239V241M1242.5 239V241M1243.5 239V241M1244.5 239V241M1245.5 239V241M1246.5 239V241M1247.5 239V241M1248.5 239V241M1249.5 239V241M1250.5 239V241M1251.5 239V241M1252.5 239V241M1253.5 239V241M1254.5 239V241M1255.5 239V241M1256.5 239V241M1257.5 239V241M1258.5 239V241M1259.5 239V241M1260.5 239V241M1261.5 239V241M1262.5 239V241M1263.5 238V240M1264.5 238V240M1265.5 238V240M1266.5 238V240M1267.5 238V240M1268.5 238V240M1269.5 238V240M1270.5 238V240M1271.5 238V240M1272.5 238V240M1273.5 238V240M1274.5 238V240M1275.5 238V240M1276.5 238V240M1277.5 238V240M1278.5 238V240M1279.5 238V240M1280.5 238V240M1281.5 238V240M1282.5 238V240M1283.5 238V240M1284.5 238V240M1285.5 238V240M1286.5 238V240M1287.5 238V240M1288.5 238V240M1289.5 238V240M1290.5 238V240M1291.5 238V240M1292.5 238V240M1293.5 238V240M1294.5 238V240M1295.5 238V240M1296.5 238V240M1297.5 238V240M1298.5 238V240M1299.5 238V240M1300.5 238V240M1301.5 238V240M1302.5 238V240M1303.5 238V240M1304.5 238V240M1305.5 237V239M1306.5 237V239M1307.5 237V239M1308.5 237V239M1309.5 237V239M1310.5 237V239M1311.5 237V239M1312.5 237V239M1313.5 237V239M1314.5 237V239M1315.5 237V239M1316.5 237V239M1317.5 237V239M1318.5 237V239M1319.5 237V239M1320.5 237V239M1321.5 237V239M1322.5 237V239M1323.5 237V239M1324.5 237V239M1325.5 237V239M1326.5 237V239M1327.5 237V239M1328.5 237V239M1329.5 237V239M1330.5 237V239M1331.5 237V239M1332.5 237V239M1333.5 237V239M1334.5 237V239M1335.5 237V239M1336.5 237V239M1337.5 237V239M1338.5 237V239M1339.5 237V239M1340.5 237V239M1341.5 237V239M1342.5 237V239M1343.5 237V239M1344.5 237V239M1345.5 237V239M1346.5 236V238M1347.5 236V238M1348.5 236V238M1349.5 236V238M1350.5 236V238M1351.5 236V238M1352.5 236V238M1353.5 236V238M1354.5 236V238M1355.5 236V238M1356.5 236V238M1357.5 236V238M1358.5 236V238M1359.5 236V238M1360.5 236V238M1361.5 236V238M1362.5 236V238M1363.5 236V238M1364.5 236V238M1365.5 236V238M1366.5 236V238M1367.5 236V238M1368.5 236V238M1369.5 236V238M1370.5 236V238M1371.5 236V238M1372.5 236V238M1373.5 236V238M1374.5 236V238M1375.5 236V238M1376.5 236V238M1377.5 236V238M1378.5 236V238M1379.5 236V238M1380.5 236V238M1381.5 236V238M1382.5 236V238M1383.5 236V238M1384.5 236V238M1385.5 236V238M1386.5 236V238M1387.5 236V238M1388.5 235V237M1389.5 235V237M1390.5 235V237M1391.5 235V237M1392.5 235V237M1393.5 235V237M1394.5 235V237M1395.5 235V237M1396.5 235V237M1397.5 235V237M1398.5 235V237M1399.5 235V237M1400.5 235V237M1401.5 235V237M1402.5 235V237M1403.5 235V237M1404.5 235V237M1405.5 235V237M1406.5 235V237M1407.5 235V237M1408.5 235V237M1409.5 235V237M1410.5 235V237M1411.5 235V237M1412.5 235V237M1413.5 235V237M1414.5 235V237M1415.5 235V237M1416.5 235V237M1417.5 235V237M1418.5 235V237M1419.5 235V237M1420.5 235V237M1421.5 235V237M1422.5 235V237M1423.5 235V237M1424.5 235V237M1425.5 235V237M1426.5 235V237M1427.5 235V237M1428.5 235V237M1429.5 234V236M1430.5 234V236M1431.5 234V236M1432.5 234V236M1433.5 234V236M1434.5 234V236M1435.5 234V236M1436.5 234V236M1437.5 234V236M1438.5 234V236M1439.5 234V236M1440.5 234V236M1441.5 234V236M1442.5 234V236M1443.5 234V236M1444.5 234V236M1445.5 234V236M1446.5 234V236M1447.5 234V236M1448.5 234V236M1449.5 234V236M1450.5 234V236M1451.5 234V236M1452.5 234V236M1453.5 234V236M1454.5 234V236M1455.5 234V236M1456.5 234V236M1457.5 234V236M1458.5 234V236M1459.5 234V236M1460.5 234V236M1461.5 234V236M1462.5 234V236M1463.5 234V236M1464.5 234V236M1465.5 234V236M1466.5 234V236M1467.5 234V236M1468.5 234V236M1469.5 234V236M1470.5 234V236M1471.5 233V235M1472.5 233V235M1473.5 233V235M1474.5 233V235M1475.5 233V235M1476.5 233V235M1477.5 233V235M1478.5 233V235M1479.5 233V235M1480.5 233V235M1481.5 233V235M1482.5 233V235M1483.5 233V235M1484.5 233V235M1485.5 233V235M1486.5 233V235M1487.5 233V235M1488.5 233V235M1489.5 233V235M1490.5 233V235M1491.5 233V235M1492.5 233V235M1493.5 233V235M1494.5 233V235M1495.5 233V235M1496.5 233V235M1497.5 233V235M1498.5 233V235M1499.5 233V235M1500.5 233V235M1501.5 233V235M1502.5 233V235M1503.5 233V235M1504.5 233V235M1505.5 233V235M1506.5 233V235M1507.5 233V235M1508.5 233V235M1509.5 233V235M1510.5 233V235M1511.5 233V235M1512.5 233V235M1513.5 232V234M1514.5 232V234M1515.5 232V234M1516.5 232V234M1517.5 232V234M1518.5 232V234M1519.5 232V234M1520.5 232V234M1521.5 232V234M1522.5 232V234M1523.5 232V234M1524.5 232V234M1525.5 232V234M1526.5 232V234M1527.5 232V234M1528.5 232V234M1529.5 232V234M1530.5 232V234M1531.5 232V234M1532.5 232V234M1533.5 232V234M1534.5 232V234M1535.5 232V234M1536.5 232V234M1537.5 232V234M1538.5 232V234M1539.5 232V234M1540.5 232V234M1541.5 232V234M1542.5 232V234M1543.5 232V234M1544.5 232V234M1545.5 232V234M1546.5 232V234M1547.5 232V234M1548.5 232V234M1549.5 232V234M1550.5 232V234M1551.5 232V234M1552.5 232V234M1553.5 232V234M1554.5 231V233M1555.5 231V233M1556.5 231V233M1557.5 231V233M1558.5 231V233M1559.5 231V233M1560.5 231V233M1561.5 231V233M1562.5 231V233" stroke="#0000f0" stroke-width="1" fill="none" /><path d="M1563.5 209V214M1564.5 209V214M1565.5 209V213M1566.5 209V213M1567.5 209V213M1568.5 209V213M1569.5 209V213M1570.5 209V213M1571.5 209V213M1572.5 209V213M1573.5 209V213M1574.5 209V213M1575.5 209V213M1576.5 209V213M1577.5 209V213M1578.5 210V214M1579.5 211V215M1580.5 212V216M1581.5 213V217M1582.5 213V217M1583.5 213V217M1584.5 213V217M1585.5 213V217M1586.5 213V218M1587.5 213V217M1588.5 210V214M1589.5 210V214M1590.5 210V214M1591.5 210V214M1592.5 210V214M1593.5 210V214M1594.5 210V214M1595.5 210V214M1596.5 209V214M1597.5 209V214M1598.5 211V215M1599.5 211V215M1600.5 210V215M1601.5 211V215M1602.5 211V215M1603.5 211V215M1604.5 211V215M1605.5 211V215M1606.5 211V215M1607.5 212V216M1608.5 213V217M1609.5 214V218M1610.5 215V220M1611.5 216V221M1612.5 216V220M1613.5 216V220M1614.5 217V221M1615.5 217V221M1616.5 217V221M1617.5 217V221M1618.5 217V221M1619.5 217V221M1620.5 216V221M1621.5 217V221M1622.5 217V221M1623.5 217V221M1624.5 215V219M1625.5 215V219M1626.5 215V219M1627.5 215V219M1628.5 215V219M1629.5 215V219M1630.5 215V219M1631.5 216V220M1632.5 216V220M1633.5 216V220M1634.5 216V220M1635.5 216V220M1636.5 216V220M1637.5 216V220M1638.5 216V220M1639.5 216V220M1640.5 216V220M1641.5 216V220M1642.5 216V220M1643.5 216V220M1644.5 216V220M1645.5 216V220M1646.5 216V221M1647.5 216V221M1648.5 218V222M1649.5 218V222M1650.5 219V223M1651.5 219V223M1652.5 220V224M1653.5 220V225M1654.5 220V225M1655.5 220V224M1656.5 221V225M1657.5 221V225M1658.5 221V225M1659.5 221V225M1660.5 221V225M1661.5 221V225M1662.5 221V225M1663.5 221V225M1664.5 221V225M1665.5 221V226M1666.5 221V225M1667.5 220V224M1668.5 220V224M1669.5 220V225M1670.5 220V224M1671.5 220V224M1672.5 220V224M1673.5 220V224M1674.5 220V224M1675.5 220V224M1676.5 220V224M1677.5 220V224M1678.5 220V224M1679.5 219V224M1680.5 219V225M1681.5 220V224M1682.5 220V224M1683.5 220V224M1684.5 220V224M1685.5 220V224M1686.5 220V224M1687.5 220V224M1688.5 220V224M1689.5 220V224M1690.5 220V224M1691.5 219V224M1692.5 219V224M1693.5 220V224M1694.5 220V224M1695.5 220V224M1696.5 220V224M1697.5 220V224M1698.5 220V224M1699.5 220V224M1700.5 220V225M1701.5 220V224M1702.5 220V224M1703.5 220V224M1704.5 220V224M1705.5 221V225M1706.5 221V225M1707.5 221V225M1708.5 220V225M1709.5 222V226M1710.5 222V226M1711.5 222V226M1712.5 222V227M1713.5 223V228M1714.5 223V227M1715.5 223V227M1716.5 223V227M1717.5 223V228M1718.5 223V228M1719.5 224V228M1720.5 224V228M1721.5 225V229M1722.5 225V229M1723.5 225V230M1724.5 225V229M1725.5 225V229M1726.5 225V229M1727.5 225V229M1728.5 226V230M1729.5 226V230M1730.5 226V230M1731.5 226V230M1732.5 226V230M1733.5 226V230M1734.5 226V230M1735.5 226V230M1736.5 226V230M1737.5 226V230M1738.5 227V231M1739.5 227V231M1740.5 227V231M1741.5 227V231M1742.5 227V232M1743.5 227V231M1744.5 227V231M1745.5 227V231M1746.5 227V231M1747.5 227V231M1748.5 226V231M1749.5 226V232M1750.5 227V231M1751.5 227V231M1752.5 227V231M1753.5 227V231M1754.5 227V231M1755.5 227V231M1756.5 227V231M1757.5 227V232M1758.5 227V231M1759.5 227V231M1760.5 227V231M1761.5 227V231M1762.5 226V231M1763.5 227V231M1764.5 227V232M1765.5 227V231M1766.5 227V231M1767.5 227V232M1768.5 227V232M1769.5 227V231M1770.5 227V231M1771.5 228V232M1772.5 228V232M1773.5 228V232M1774.5 227V232M1775.5 227V232M1776.5 228V232M1777.5 227V232M1778.5 227V232M1779.5 228V232M1780.5 228V232M1781.5 228V232M1782.5 228V233M1783.5 228V232M1784.5 228V232M1785.5 228V232M1786.5 228V232M1787.5 228V232M1788.5 228V232M1789.5 228V232M1790.5 228V232M1791.5 228V233M1792.5 228V232M1793.5 228V232M1794.5 228V232M1795.5 228V232M1796.5 228V232M1797.5 228V232M1798.5 228V232M1799.5 228V232M1800.5 228V232M1801.5 228V232M1802.5 228V232M1803.5 228V232M1804.5 228V232M1805.5 228V232M1806.5 228V233M1807.5 228V232M1808.5 228V232M1809.5 228V232M1810.5 228V232M1811.5 229V234M1812.5 229V234M1813.5 228V233M1814.5 228V233M1815.5 229V233M1816.5 229V233M1817.5 229V233M1818.5 229V233M1819.5 229V233M1820.5 229V233M1821.5 229V233M1822.5 229V233M1823.5 229V233M1824.5 228V233M1825.5 228V233M1826.5 229V233M1827.5 229V233M1828.5 229V233M1829.5 229V233M1830.5 229V233M1831.5 229V233M1832.5 229V233M1833.5 229V233M1834.5 229V233M1835.5 228V233M1836.5 228V233M1837.5 229V233M1838.5 229V233M1839.5 229V233M1840.5 229V233M1841.5 228V233M1842.5 228V233M1843.5 229V233M1844.5 229V233M1845.5 229V233M1846.5 229V233M1847.5 229V233M1848.5 229V233M1849.5 229V233M1850.5 230V234M1851.5 230V234M1852.5 230V234M1853.5 230V234M1854.5 230V234M1855.5 230V234M1856.5 230V234M1857.5 229V234M1858.5 230V234M1859.5 230V234M1860.5 230V234M1861.5 230V234M1862.5 230V234M1863.5 230V234M1864.5 230V234M1865.5 230V234M1866.5 230V234M1867.5 230V234M1868.5 230V234M1869.5 230V234M1870.5 230V234M1871.5 229V235M1872.5 229V235M1873.5 230V234M1874.5 230V234M1875.5 230V234M1876.5 230V234M1877.5 230V234M1878.5 230V234M1879.5 230V234M1880.5 229V234M1881.5 228V233M1882.5 229V233M1883.5 229V233M1884.5 229V233M1885.5 229V233M1886.5 229V233M1887.5 229V233M1888.5 228V233M1889.5 228V234M1890.5 229V233M1891.5 229V233M1892.5 229V233M1893.5 229V233M1894.5 229V233M1895.5 229V233M1896.5 228V233M1897.5 228V233M1898.5 228V232M1899.5 228V232M1900.5 228V232M1901.5 228V232M1902.5 228V232M1903.5 227V231M1904.5 227V232M1905.5 227V231" stroke="#000080" stroke-width="1" fill="none" /><path d="M1563.5 210V212M1564.5 210V212M1565.5 210V212M1566.5 210V212M1567.5 210V212M1568.5 210V212M1569.5 210V212M1570.5 210V212M1571.5 210V212M1572.5 210V212M1573.5 210V212M1574.5 210V212M1575.5 210V212M1576.5 210V212M1577.5 210V212M1578.5 211V213M1579.5 212V214M1580.5 213V215M1581.5 214V216M1582.5 214V216M1583.5 214V216M1584.5 214V216M1585.5 214V216M1586.5 214V216M1587.5 214V216M1588.5 211V213M1589.5 211V213M1590.5 211V213M1591.5 211V213M1592.5 211V213M1593.5 211V213M1594.5 211V213M1595.5 211V213M1596.5 211V213M1597.5 211V213M1598.5 212V214M1599.5 212V214M1600.5 212V214M1601.5 212V214M1602.5 212V214M1603.5 212V214M1604.5 212V214M1605.5 212V214M1606.5 212V214M1607.5 213V215M1608.5 214V216M1609.5 215V217M1610.5 216V218M1611.5 217V219M1612.5 217V219M1613.5 217V219M1614.5 218V220M1615.5 218V220M1616.5 218V220M1617.5 218V220M1618.5 218V220M1619.5 218V220M1620.5 218V220M1621.5 218V220M1622.5 218V220M1623.5 218V220M1624.5 216V218M1625.5 216V218M1626.5 216V218M1627.5 216V218M1628.5 216V218M1629.5 216V218M1630.5 216V218M1631.5 217V219M1632.5 217V219M1633.5 217V219M1634.5 217V219M1635.5 217V219M1636.5 217V219M1637.5 217V219M1638.5 217V219M1639.5 217V219M1640.5 217V219M1641.5 217V219M1642.5 217V219M1643.5 217V219M1644.5 217V219M1645.5 217V219M1646.5 218V220M1647.5 218V220M1648.5 219V221M1649.5 219V221M1650.5 220V222M1651.5 220V222M1652.5 221V223M1653.5 221V223M1654.5 221V223M1655.5 221V223M1656.5 222V224M1657.5 222V224M1658.5 222V224M1659.5 222V224M1660.5 222V224M1661.5 222V224M1662.5 222V224M1663.5 222V224M1664.5 222V224M1665.5 222V224M1666.5 222V224M1667.5 221V223M1668.5 221V223M1669.5 221V223M1670.5 221V223M1671.5 221V223M1672.5 221V223M1673.5 221V223M1674.5 221V223M1675.5 221V223M1676.5 221V223M1677.5 221V223M1678.5 221V223M1679.5 221V223M1680.5 221V223M1681.5 221V223M1682.5 221V223M1683.5 221V223M1684.5 221V223M1685.5 221V223M1686.5 221V223M1687.5 221V223M1688.5 221V223M1689.5 221V223M1690.5 221V223M1691.5 221V223M1692.5 221V223M1693.5 221V223M1694.5 221V223M1695.5 221V223M1696.5 221V223M1697.5 221V223M1698.5 221V223M1699.5 221V223M1700.5 221V223M1701.5 221V223M1702.5 221V223M1703.5 221V223M1704.5 221V223M1705.5 222V224M1706.5 222V224M1707.5 222V224M1708.5 222V224M1709.5 223V225M1710.5 223V225M1711.5 223V225M1712.5 223V225M1713.5 224V226M1714.5 224V226M1715.5 224V226M1716.5 224V226M1717.5 225V227M1718.5 225V227M1719.5 225V227M1720.5 225V227M1721.5 226V228M1722.5 226V228M1723.5 226V228M1724.5 226V228M1725.5 226V228M1726.5 226V228M1727.5 226V228M1728.5 227V229M1729.5 227V229M1730.5 227V229M1731.5 227V229M1732.5 227V229M1733.5 227V229M1734.5 227V229M1735.5 227V229M1736.5 227V229M1737.5 227V229M1738.5 228V230M1739.5 228V230M1740.5 228V230M1741.5 228V230M1742.5 228V230M1743.5 228V230M1744.5 228V230M1745.5 228V230M1746.5 228V230M1747.5 228V230M1748.5 228V230M1749.5 228V230M1750.5 228V230M1751.5 228V230M1752.5 228V230M1753.5 228V230M1754.5 228V230M1755.5 228V230M1756.5 228V230M1757.5 228V230M1758.5 228V230M1759.5 228V230M1760.5 228V230M1761.5 228V230M1762.5 228V230M1763.5 228V230M1764.5 228V230M1765.5 228V230M1766.5 228V230M1767.5 228V230M1768.5 228V230M1769.5 228V230M1770.5 228V230M1771.5 229V231M1772.5 229V231M1773.5 229V231M1774.5 229V231M1775.5 229V231M1776.5 229V231M1777.5 229V231M1778.5 229V231M1779.5 229V231M1780.5 229V231M1781.5 229V231M1782.5 229V231M1783.5 229V231M1784.5 229V231M1785.5 229V231M1786.5 229V231M1787.5 229V231M1788.5 229V231M1789.5 229V231M1790.5 229V231M1791.5 229V231M1792.5 229V231M1793.5 229V231M1794.5 229V231M1795.5 229V231M1796.5 229V231M1797.5 229V231M1798.5 229V231M1799.5 229V231M1800.5 229V231M1801.5 229V231M1802.5 229V231M1803.5 229V231M1804.5 229V231M1805.5 229V231M1806.5 229V231M1807.5 229V231M1808.5 229V231M1809.5 229V231M1810.5 229V231M1811.5 230V232M1812.5 230V232M1813.5 230V232M1814.5 230V232M1815.5 230V232M1816.5 230V232M1817.5 230V232M1818.5 230V232M1819.5 230V232M1820.5 230V232M1821.5 230V232M1822.5 230V232M1823.5 230V232M1824.5 230V232M1825.5 230V232M1826.5 230V232M1827.5 230V232M1828.5 230V232M1829.5 230V232M1830.5 230V232M1831.5 230V232M1832.5 230V232M1833.5 230V232M1834.5 230V232M1835.5 230V232M1836.5 230V232M1837.5 230V232M1838.5 230V232M1839.5 230V232M1840.5 230V232M1841.5 230V232M1842.5 230V232M1843.5 230V232M1844.5 230V232M1845.5 230V232M1846.5 230V232M1847.5 230V232M1848.5 230V232M1849.5 230V232M1850.5 231V233M1851.5 231V233M1852.5 231V233M1853.5 231V233M1854.5 231V233M1855.5 231V233M1856.5 231V233M1857.5 231V233M1858.5 231V233M1859.5 231V233M1860.5 231V233M1861.5 231V233M1862.5 231V233M1863.5 231V233M1864.5 231V233M1865.5 231V233M1866.5 231V233M1867.5 231V233M1868.5 231V233M1869.5 231V233M1870.5 231V233M1871.5 231V233M1872.5 231V233M1873.5 231V233M1874.5 231V233M1875.5 231V233M1876.5 231V233M1877.5 231V233M1878.5 231V233M1879.5 231V233M1880.5 231V233M1881.5 230V232M1882.5 230V232M1883.5 230V232M1884.5 230V232M1885.5 230V232M1886.5 230V232M1887.5 230V232M1888.5 230V232M1889.5 230V232M1890.5 230V232M1891.5 230V232M1892.5 230V232M1893.5 230V232M1894.5 230V232M1895.5 230V232M1896.5 229V231M1897.5 229V231M1898.5 229V231M1899.5 229V231M1900.5 229V231M1901.5 229V231M1902.5 229V231M1903.5 228V230M1904.5 228V230M1905.5 228V230" stroke="#0000f8" stroke-width="1" fill="none" /><path d="M1624.5 211V217" stroke="#000080" stroke-width="1" fill="none" /><path d="M89.5 278V280M90.5 278V280M91.5 278V280M92.5 278V280M93.5 278V280M94.5 278V280M95.5 278V280M96.5 278V280M97.5 278V280M98.5 278V280M99.5 278V280M100.5 278V280M101.5 278V280M102.5 278V280M103.5 278V280M104.5 278V280M105.5 278V280M106.5 278V280M107.5 278V280M108.5 278V280M109.5 278V280M110.5 278V280M111.5 278V280M112.5 278V280M113.5 278V280M114.5 278V280M115.5 278V280M116.5 278V280M117.5 278V280M118.5 278V280M119.5 278V280M120.5 278V280M121.5 278V280M122.5 278V280M123.5 278V280M124.5 278V280M125.5 278V280M126.5 278V280M127.5 278V280M128.5 278V280M129.5 278V280M130.5 278V280M131.5 278V280M132.5 278V280M133.5 278V280M134.5 278V280M135.5 277V279M136.5 277V279M137.5 277V279M138.5 277V279M139.5 277V279M140.5 277V279M141.5 277V279M142.5 277V279M143.5 277V279M144.5 277V279M145.5 277V279M146.5 277V279M147.5 277V279M148.5 277V279M149.5 277V279M150.5 277V279M151.5 277V279M152.5 278V280M153.5 278V280M154.5 278V280M155.5 278V280M156.5 278V280M157.5 278V280M158.5 278V280M159.5 278V280M160.5 278V280M161.5 278V280M162.5 278V280M163.5 278V280M164.5 278V280M165.5 278V280M166.5 278V280M167.5 278V280M168.5 277V279M169.5 277V279M170.5 277V279M171.5 277V279M172.5 277V279M173.5 277V279M174.5 277V279M175.5 277V279M176.5 277V279M177.5 277V279M178.5 277V279M179.5 277V279M180.5 278V280M181.5 278V280M182.5 278V280M183.5 278V280M184.5 278V280M185.5 278V280M186.5 278V280M187.5 278V280M188.5 278V280M189.5 278V280M190.5 278V280M191.5 278V280M192.5 278V280M193.5 278V280M194.5 277V279M195.5 278V280M196.5 278V280M197.5 278V280M198.5 278V280M199.5 278V280M200.5 278V280M201.5 278V280M202.5 278V280M203.5 278V280M204.5 278V280M205.5 278V280M206.5 278V280M207.5 278V280M208.5 278V280M209.5 278V280M210.5 278V280M211.5 278V280M212.5 278V280M213.5 278V280M214.5 277V279M215.5 277V279M216.5 277V279M217.5 277V279M218.5 277V279M219.5 277V279M220.5 277V279M221.5 277V279M222.5 277V279M223.5 277V279M224.5 277V279M225.5 277V279M226.5 277V279M227.5 277V279M228.5 277V279M229.5 277V279M230.5 277V279M231.5 277V279M232.5 277V279M233.5 277V279M234.5 277V279M235.5 277V279M236.5 277V279M237.5 277V279M238.5 277V279M239.5 278V280M240.5 278V280M241.5 278V280M242.5 278V280M243.5 278V280M244.5 278V280M245.5 278V280M246.5 278V280M247.5 278V280M248.5 278V280M249.5 278V280M250.5 278V280M251.5 278V280M252.5 278V280M253.5 278V280M254.5 278V280M255.5 278V280M256.5 278V280M257.5 278V280M258.5 278V280M259.5 278V280M260.5 278V280M261.5 278V280M262.5 278V280M263.5 278V280M264.5 278V280M265.5 278V280M266.5 278V280M267.5 278V280M268.5 278V280M269.5 278V280M270.5 278V280M271.5 278V280M272.5 278V280M273.5 278V280M274.5 278V280M275.5 278V280M276.5 278V280M277.5 278V280M278.5 278V280M279.5 278V280M280.5 278V280M281.5 278V280M282.5 278V280M283.5 278V280M284.5 278V280M285.5 278V280M286.5 278V280M287.5 278V280M288.5 278V280M289.5 278V280M290.5 278V280M291.5 278V280M292.5 278V280M293.5 278V280M294.5 278V280M295.5 278V280M296.5 278V280M297.5 278V280M298.5 277V279M299.5 277V279M300.5 277V279M301.5 277V279M302.5 277V279M303.5 277V279M304.5 277V279M305.5 277V279M306.5 278V280M307.5 278V280M308.5 277V279M309.5 277V279M310.5 277V279M311.5 277V279M312.5 277V279M313.5 277V279M314.5 277V279M315.5 277V279M316.5 277V279M317.5 277V279M318.5 277V279M319.5 277V279M320.5 277V279M321.5 277V279M322.5 277V279M323.5 277V279M324.5 277V279M325.5 277V279M326.5 277V279M327.5 277V279M328.5 277V279M329.5 277V279M330.5 277V279M331.5 277V279M332.5 277V279M333.5 277V279M334.5 277V279M335.5 277V279M336.5 277V279M337.5 277V279M338.5 277V279M339.5 277V279M340.5 277V279M341.5 277V279M342.5 277V279M343.5 277V279M344.5 277V279M345.5 277V279M346.5 277V279M347.5 277V279M348.5 277V279M349.5 277V279M350.5 277V279M351.5 277V279M352.5 277V279M353.5 277V279M354.5 277V279M355.5 277V279M356.5 277V279M357.5 277V279M358.5 277V279M359.5 277V279M360.5 277V279M361.5 277V279M362.5 277V279M363.5 277V279M364.5 277V279M365.5 278V280M366.5 278V280M367.5 278V280M368.5 278V280M369.5 278V280M370.5 278V280M371.5 278V280M372.5 278V280M373.5 278V280M374.5 278V280M375.5 278V280M376.5 278V280M377.5 278V280M378.5 278V280M379.5 278V280M380.5 278V280M381.5 278V280M382.5 278V280M383.5 278V280M384.5 278V280M385.5 278V280M386.5 278V280M387.5 278V280M388.5 278V280M389.5 278V280M390.5 278V280M391.5 278V280M392.5 278V280M393.5 277V279M394.5 277V279M395.5 277V279M396.5 277V279M397.5 277V279M398.5 277V279M399.5 277V279M400.5 277V279M401.5 277V279M402.5 277V279M403.5 277V279M404.5 277V279M405.5 277V279M406.5 277V279M407.5 278V280M408.5 278V280M409.5 278V280M410.5 278V280M411.5 278V280M412.5 278V280M413.5 278V280M414.5 278V280M415.5 278V280M416.5 278V280M417.5 278V280M418.5 278V280M419.5 278V280M420.5 278V280M421.5 278V280M422.5 278V280M423.5 278V280M424.5 278V280M425.5 278V280M426.5 278V280M427.5 278V280M428.5 278V280M429.5 278V280M430.5 278V280M431.5 278V280M432.5 278V280M433.5 278V280M434.5 278V280M435.5 278V280M436.5 278V280M437.5 278V280M438.5 278V280M439.5 278V280M440.5 278V280M441.5 278V280M442.5 278V280M443.5 278V280M444.5 278V280M445.5 278V280M446.5 278V280M447.5 278V280M448.5 278V280M449.5 278V280M450.5 278V280M451.5 278V280M452.5 278V280M453.5 278V280M454.5 278V280M455.5 278V280M456.5 278V280M457.5 278V280M458.5 278V280M459.5 278V280M460.5 278V280M461.5 278V280M462.5 278V280M463.5 278V280M464.5 278V280M465.5 278V280M466.5 278V280M467.5 278V280M468.5 278V280M469.5 278V280M470.5 278V280M471.5 278V280M472.5 278V280M473.5 278V280M474.5 278V280M475.5 278V280M476.5 278V280M477.5 278V280M478.5 278V280M479.5 278V280M480.5 278V280M481.5 278V280M482.5 278V280M483.5 278V280M484.5 278V280M485.5 278V280M486.5 278V280M487.5 278V280M488.5 278V280M489.5 278V280M490.5 278V280M491.5 278V280M492.5 278V280M493.5 278V280M494.5 278V280M495.5 278V280M496.5 278V280M497.5 278V280M498.5 278V280M499.5 277V279M500.5 277V279M501.5 277V279M502.5 277V279M503.5 277V279M504.5 277V279M505.5 277V279M506.5 277V279M507.5 277V279M508.5 277V279M509.5 277V279M510.5 277V279M511.5 277V279M512.5 277V279M513.5 277V279M514.5 277V279M515.5 277V279M516.5 277V279M517.5 277V279M518.5 277V279M519.5 277V279M520.5 277V279M521.5 277V279M522.5 277V279M523.5 277V279M524.5 277V279M525.5 277V279M526.5 277V279M527.5 277V279M528.5 277V279M529.5 277V279M530.5 277V279M531.5 277V279M532.5 277V279M533.5 277V279M534.5 277V279M535.5 277V279M536.5 277V279M537.5 277V279M538.5 277V279M539.5 277V279M540.5 277V279M541.5 277V279M542.5 277V279M543.5 278V280M544.5 278V280M545.5 278V280M546.5 278V280M547.5 278V280M548.5 278V280M549.5 278V280M550.5 278V280M551.5 278V280M552.5 278V280M553.5 278V280M554.5 278V280M555.5 278V280M556.5 278V280M557.5 278V280M558.5 278V280M559.5 278V280M560.5 278V280M561.5 278V280M562.5 278V280M563.5 278V280M564.5 278V280M565.5 278V280M566.5 278V280M567.5 278V280M568.5 278V280M569.5 278V280M570.5 278V280M571.5 278V280M572.5 278V280M573.5 278V280M574.5 278V280M575.5 278V280M576.5 278V280M577.5 278V280M578.5 277V279M579.5 277V279M580.5 277V279M581.5 277V279M582.5 277V279M583.5 277V279M584.5 277V279M585.5 277V279M586.5 277V279M587.5 277V279M588.5 277V279M589.5 277V279M590.5 277V279M591.5 277V279M592.5 277V279M593.5 277V279M594.5 277V279M595.5 277V279M596.5 277V279M597.5 277V279M598.5 277V279M599.5 277V279M600.5 277V279M601.5 277V279M602.5 277V279M603.5 277V279M604.5 277V279M605.5 277V279M606.5 277V279M607.5 277V279M608.5 277V279M609.5 277V279M610.5 277V279M611.5 277V279M612.5 277V279M613.5 278V280M614.5 278V280M615.5 278V280M616.5 278V280M617.5 278V280M618.5 278V280M619.5 278V280M620.5 278V280M621.5 278V280M622.5 278V280M623.5 278V280M624.5 278V280M625.5 278V280M626.5 278V280M627.5 278V280M628.5 278V280M629.5 278V280M630.5 278V280M631.5 278V280M632.5 278V280M633.5 278V280M634.5 278V280M635.5 278V280M636.5 278V280M637.5 278V280M638.5 278V280M639.5 278V280M640.5 278V280M641.5 278V280M642.5 278V280M643.5 278V280M644.5 278V280M645.5 278V280M646.5 278V280M647.5 278V280M648.5 278V280M649.5 278V280M650.5 278V280M651.5 278V280M652.5 278V280M653.5 278V280M654.5 278V280M655.5 278V280M656.5 278V280M657.5 278V280M658.5 278V280M659.5 278V280M660.5 278V280M661.5 278V280M662.5 278V280M663.5 278V280M664.5 278V280M665.5 278V280M666.5 278V280M667.5 278V280M668.5 278V280M669.5 278V280M670.5 277V279M671.5 277V279M672.5 277V279M673.5 277V279M674.5 277V279M675.5 277V279M676.5 277V279M677.5 277V279M678.5 277V279M679.5 278V280M680.5 278V280M681.5 278V280M682.5 278V280M683.5 278V280M684.5 278V280M685.5 278V280M686.5 278V280M687.5 278V280M688.5 278V280M689.5 278V280M690.5 278V280M691.5 278V280M692.5 278V280M693.5 278V280M694.5 278V280M695.5 278V280M696.5 278V280M697.5 278V280M698.5 278V280M699.5 278V280M700.5 278V280M701.5 278V280M702.5 278V280M703.5 278V280M704.5 278V280M705.5 278V280M706.5 278V280M707.5 278V280M708.5 278V280M709.5 278V280M710.5 278V280M711.5 278V280M712.5 278V280M713.5 278V280M714.5 278V280M715.5 278V280M716.5 278V280M717.5 278V280M718.5 278V280M719.5 278V280M720.5 278V280M721.5 278V280M722.5 278V280M723.5 278V280M724.5 278V280M725.5 278V280M726.5 278V280M727.5 278V280M728.5 278V280M729.5 277V279M730.5 277V279M731.5 277V279M732.5 277V279M733.5 277V279M734.5 277V279M735.5 277V279M736.5 277V279M737.5 277V279M738.5 277V279M739.5 277V279M740.5 277V279M741.5 277V279M742.5 277V279M743.5 277V279M744.5 277V279M745.5 277V279M746.5 277V279M747.5 277V279M748.5 277V279M749.5 277V279M750.5 277V279M751.5 277V279M752.5 277V279M753.5 277V279M754.5 277V279M755.5 277V279M756.5 277V279M757.5 277V279M758.5 277V279M759.5 277V279M760.5 277V279M761.5 277V279M762.5 277V279M763.5 277V279M764.5 277V279M765.5 277V279M766.5 277V279M767.5 277V279M768.5 277V279M769.5 277V279M770.5 277V279M771.5 277V279M772.5 277V279M773.5 277V279M774.5 277V279M775.5 277V279M776.5 277V279M777.5 277V279M778.5 277V279M779.5 277V279M780.5 277V279M781.5 277V279M782.5 277V279M783.5 277V279M784.5 277V279M785.5 277V279M786.5 277V279M787.5 277V279M788.5 277V279M789.5 277V279M790.5 277V279M791.5 277V279M792.5 277V279M793.5 277V279M794.5 277V279M795.5 277V279M796.5 277V279M797.5 277V279M798.5 277V279M799.5 277V279M800.5 277V279M801.5 277V279M802.5 277V279M803.5 277V279M804.5 277V279M805.5 277V279M806.5 277V279M807.5 277V279M808.5 277V279M809.5 277V279M810.5 277V279M811.5 278V280M812.5 278V280M813.5 278V280M814.5 278V280M815.5 278V280M816.5 278V280M817.5 278V280M818.5 278V280M819.5 278V280M820.5 278V280M821.5 278V280M822.5 278V280M823.5 278V280M824.5 278V280M825.5 278V280M826.5 278V280M827.5 278V280M828.5 278V280M829.5 278V280M830.5 278V280M831.5 278V280M832.5 278V280M833.5 278V280M834.5 278V280M835.5 278V280M836.5 278V280M837.5 278V280M838.5 278V280M839.5 278V280M840.5 278V280M841.5 278V280M842.5 278V280M843.5 278V280M844.5 278V280M845.5 278V280M846.5 278V280M847.5 278V280M848.5 278V280M849.5 278V280M850.5 278V280M851.5 278V280M852.5 278V280M853.5 278V280M854.5 278V280M855.5 278V280M856.5 278V280M857.5 278V280M858.5 278V280M859.5 278V280M860.5 278V280M861.5 278V280M862.5 278V280M863.5 278V280M864.5 278V280M865.5 278V280M866.5 278V280M867.5 278V280M868.5 278V280M869.5 278V280M870.5 278V280M871.5 278V280M872.5 278V280M873.5 278V280M874.5 278V280M875.5 278V280M876.5 278V280M877.5 278V280M878.5 278V280M879.5 278V280M880.5 278V280M881.5 278V280M882.5 278V280M883.5 278V280M884.5 278V280M885.5 278V280M886.5 278V280M887.5 278V280M888.5 278V280M889.5 278V280M890.5 278V280M891.5 278V280M892.5 278V280M893.5 278V280M894.5 278V280M895.5 278V280M896.5 278V280M897.5 278V280M898.5 278V280M899.5 278V280M900.5 278V280M901.5 278V280M902.5 278V280M903.5 278V280M904.5 278V280M905.5 278V280M906.5 278V280M907.5 278V280M908.5 278V280M909.5 278V280M910.5 278V280M911.5 278V280M912.5 278V280M913.5 278V280M914.5 278V280M915.5 278V280M916.5 278V280M917.5 278V280M918.5 278V280M919.5 278V280M920.5 278V280M921.5 278V280M922.5 278V280M923.5 278V280M924.5 278V280M925.5 278V280M926.5 278V280M927.5 278V280M928.5 278V280M929.5 278V280M930.5 277V279M931.5 278V280M932.5 278V280M933.5 278V280M934.5 278V280M935.5 278V280M936.5 278V280M937.5 278V280M938.5 278V280M939.5 278V280M940.5 278V280M941.5 278V280M942.5 278V280M943.5 278V280M944.5 278V280M945.5 278V280M946.5 278V280M947.5 278V280M948.5 278V280M949.5 278V280M950.5 278V280M951.5 278V280M952.5 278V280M953.5 278V280M954.5 278V280M955.5 278V280M956.5 278V280M957.5 278V280M958.5 278V280M959.5 278V280M960.5 278V280M961.5 278V280M962.5 278V280M963.5 278V280M964.5 278V280M965.5 278V280M966.5 278V280M967.5 278V280M968.5 278V280M969.5 278V280M970.5 278V280M971.5 278V280M972.5 278V280M973.5 278V280M974.5 278V280M975.5 278V280M976.5 278V280M977.5 278V280M978.5 278V280M979.5 278V280M980.5 278V280M981.5 278V280M982.5 278V280M983.5 278V280M984.5 278V280M985.5 278V280M986.5 278V280M987.5 278V280M988.5 278V280M989.5 278V280M990.5 278V280M991.5 278V280M992.5 278V280M993.5 278V280M994.5 278V280M995.5 278V280M996.5 278V280M997.5 278V280M998.5 278V280M999.5 278V280M1000.5 278V280M1001.5 278V280M1002.5 278V280M1003.5 278V280M1004.5 278V280M1005.5 278V280M1006.5 278V280M1007.5 278V280M1008.5 278V280M1009.5 278V280M1010.5 278V280M1011.5 279V281M1012.5 279V281M1013.5 279V281M1014.5 279V281M1015.5 279V281M1016.5 279V281M1017.5 279V281M1018.5 279V281M1019.5 279V281M1020.5 279V281M1021.5 279V281M1022.5 279V281M1023.5 279V281M1024.5 279V281M1025.5 279V281M1026.5 279V281M1027.5 279V281M1028.5 279V281M1029.5 279V281M1030.5 279V281M1031.5 279V281M1032.5 279V281M1033.5 279V281M1034.5 279V281M1035.5 279V281M1036.5 280V282M1037.5 280V282M1038.5 280V282M1039.5 280V282M1040.5 280V282M1041.5 280V282M1042.5 280V282M1043.5 280V282M1044.5 280V282M1045.5 280V282M1046.5 281V283M1047.5 281V283M1048.5 281V283M1049.5 281V283M1050.5 281V283M1051.5 281V283M1052.5 281V283M1053.5 281V283M1054.5 281V283M1055.5 281V283M1056.5 281V283M1057.5 281V283M1058.5 281V283M1059.5 281V283M1060.5 281V283M1061.5 281V283M1062.5 281V283M1063.5 281V283M1064.5 281V283M1065.5 281V283M1066.5 281V283M1067.5 281V283M1068.5 281V283M1069.5 281V283M1070.5 282V284M1071.5 282V284M1072.5 282V284M1073.5 282V284M1074.5 282V284M1075.5 282V284M1076.5 282V284M1077.5 282V284M1078.5 282V284M1079.5 282V284M1080.5 282V284M1081.5 282V284M1082.5 282V284M1083.5 283V285M1084.5 283V285M1085.5 283V285M1086.5 283V285M1087.5 283V285M1088.5 283V285M1089.5 283V285M1090.5 283V285M1091.5 283V285M1092.5 283V285M1093.5 283V285M1094.5 283V285M1095.5 283V285M1096.5 283V285M1097.5 284V286M1098.5 284V286M1099.5 284V286M1100.5 284V286M1101.5 284V286M1102.5 284V286M1103.5 284V286M1104.5 284V286M1105.5 284V286M1106.5 284V286M1107.5 285V287M1108.5 285V287M1109.5 285V287M1110.5 285V287M1111.5 285V287M1112.5 285V287M1113.5 285V287M1114.5 285V287M1115.5 285V287M1116.5 286V288M1117.5 286V288M1118.5 286V288M1119.5 286V288M1120.5 286V288M1121.5 286V288M1122.5 286V288M1123.5 287V289M1124.5 287V289M1125.5 287V289M1126.5 287V289M1127.5 287V289M1128.5 287V289M1129.5 287V289M1130.5 287V289M1131.5 288V290M1132.5 288V290M1133.5 288V290M1134.5 288V290M1135.5 288V290M1136.5 288V290M1137.5 288V290M1138.5 288V290M1139.5 289V291M1140.5 289V291M1141.5 289V291M1142.5 289V291M1143.5 289V291M1144.5 289V291M1145.5 289V291M1146.5 289V291M1147.5 289V291M1148.5 290V292M1149.5 290V292M1150.5 290V292M1151.5 290V292M1152.5 290V292M1153.5 290V292M1154.5 290V292M1155.5 290V292M1156.5 291V293M1157.5 291V293M1158.5 291V293M1159.5 291V293M1160.5 291V293M1161.5 291V293M1162.5 291V293M1163.5 291V293M1164.5 292V294M1165.5 292V294M1166.5 292V294M1167.5 292V294M1168.5 292V294M1169.5 292V294M1170.5 292V294M1171.5 292V294M1172.5 293V295M1173.5 293V295M1174.5 293V295M1175.5 293V295M1176.5 293V295M1177.5 293V295M1178.5 293V295M1179.5 294V296M1180.5 294V296M1181.5 294V296M1182.5 294V296M1183.5 294V296M1184.5 294V296M1185.5 294V296M1186.5 295V297M1187.5 295V297M1188.5 295V297M1189.5 295V297M1190.5 295V297M1191.5 295V297M1192.5 295V297M1193.5 296V298M1194.5 296V298M1195.5 296V298M1196.5 296V298M1197.5 296V298M1198.5 296V298M1199.5 296V298M1200.5 297V299M1201.5 297V299M1202.5 297V299M1203.5 297V299M1204.5 297V299M1205.5 297V299M1206.5 298V300M1207.5 298V300M1208.5 298V300M1209.5 298V300M1210.5 298V300M1211.5 298V300M1212.5 298V300M1213.5 299V301M1214.5 299V301M1215.5 299V301M1216.5 299V301M1217.5 299V301M1218.5 299V301M1219.5 299V301M1220.5 300V302M1221.5 300V302M1222.5 300V302M1223.5 300V302M1224.5 300V302M1225.5 300V302M1226.5 300V302M1227.5 300V302M1228.5 300V302M1229.5 301V303M1230.5 301V303M1231.5 301V303M1232.5 301V303M1233.5 301V303M1234.5 301V303M1235.5 301V303M1236.5 301V303M1237.5 301V303M1238.5 302V304M1239.5 302V304M1240.5 302V304M1241.5 302V304M1242.5 302V304M1243.5 302V304M1244.5 302V304M1245.5 302V304M1246.5 302V304M1247.5 303V305M1248.5 303V305M1249.5 303V305M1250.5 303V305M1251.5 303V305M1252.5 303V305M1253.5 303V305M1254.5 303V305M1255.5 303V305M1256.5 304V306M1257.5 304V306M1258.5 304V306M1259.5 304V306M1260.5 304V306M1261.5 304V306M1262.5 304V306M1263.5 304V306M1264.5 304V306M1265.5 305V307M1266.5 305V307M1267.5 305V307M1268.5 305V307M1269.5 305V307M1270.5 305V307M1271.5 305V307M1272.5 305V307M1273.5 305V307M1274.5 305V307M1275.5 305V307M1276.5 305V307M1277.5 306V308M1278.5 306V308M1279.5 306V308M1280.5 306V308M1281.5 306V308M1282.5 306V308M1283.5 306V308M1284.5 306V308M1285.5 306V308M1286.5 307V309M1287.5 307V309M1288.5 307V309M1289.5 307V309M1290.5 307V309M1291.5 307V309M1292.5 307V309M1293.5 307V309M1294.5 307V309M1295.5 308V310M1296.5 308V310M1297.5 308V310M1298.5 308V310M1299.5 308V310M1300.5 308V310M1301.5 308V310M1302.5 308V310M1303.5 308V310M1304.5 309V311M1305.5 309V311M1306.5 309V311M1307.5 309V311M1308.5 309V311M1309.5 309V311M1310.5 310V312M1311.5 310V312M1312.5 310V312M1313.5 310V312M1314.5 310V312M1315.5 310V312M1316.5 310V312M1317.5 310V312M1318.5 310V312M1319.5 311V313M1320.5 311V313M1321.5 311V313M1322.5 311V313M1323.5 311V313M1324.5 311V313M1325.5 311V313M1326.5 311V313M1327.5 311V313M1328.5 312V314M1329.5 312V314M1330.5 312V314M1331.5 312V314M1332.5 312V314M1333.5 312V314M1334.5 312V314M1335.5 312V314M1336.5 312V314M1337.5 313V315M1338.5 313V315M1339.5 313V315M1340.5 313V315M1341.5 313V315M1342.5 313V315M1343.5 313V315M1344.5 313V315M1345.5 313V315M1346.5 314V316M1347.5 314V316M1348.5 314V316M1349.5 314V316M1350.5 314V316M1351.5 314V316M1352.5 314V316M1353.5 314V316M1354.5 314V316M1355.5 314V316M1356.5 314V316M1357.5 314V316M1358.5 314V316M1359.5 315V317M1360.5 315V317M1361.5 315V317M1362.5 315V317M1363.5 315V317M1364.5 315V317M1365.5 315V317M1366.5 315V317M1367.5 315V317M1368.5 315V317M1369.5 316V318M1370.5 316V318M1371.5 316V318M1372.5 317V319M1373.5 316V318M1374.5 317V319M1375.5 317V319M1376.5 317V319M1377.5 317V319M1378.5 317V319M1379.5 317V319M1380.5 317V319M1381.5 317V319M1382.5 317V319M1383.5 318V320M1384.5 318V320M1385.5 318V320M1386.5 318V320M1387.5 318V320M1388.5 318V320M1389.5 318V320M1390.5 318V320M1391.5 318V320M1392.5 319V321M1393.5 319V321M1394.5 319V321M1395.5 319V321M1396.5 319V321M1397.5 319V321M1398.5 319V321M1399.5 319V321M1400.5 320V322M1401.5 320V322M1402.5 320V322M1403.5 320V322M1404.5 320V322M1405.5 320V322M1406.5 320V322M1407.5 320V322M1408.5 320V322M1409.5 321V323M1410.5 321V323M1411.5 321V323M1412.5 321V323M1413.5 321V323M1414.5 321V323M1415.5 321V323M1416.5 321V323M1417.5 322V324M1418.5 322V324M1419.5 322V324M1420.5 322V324M1421.5 322V324M1422.5 322V324M1423.5 323V325M1424.5 323V325M1425.5 323V325M1426.5 323V325M1427.5 323V325M1428.5 323V325M1429.5 323V325M1430.5 323V325M1431.5 324V326M1432.5 324V326M1433.5 324V326M1434.5 324V326M1435.5 324V326M1436.5 324V326M1437.5 324V326M1438.5 324V326M1439.5 324V326M1440.5 324V326M1441.5 324V326M1442.5 324V326M1443.5 325V327M1444.5 325V327M1445.5 325V327M1446.5 325V327M1447.5 325V327M1448.5 325V327M1449.5 325V327M1450.5 325V327M1451.5 325V327M1452.5 326V328M1453.5 326V328M1454.5 326V328M1455.5 326V328M1456.5 326V328M1457.5 326V328M1458.5 326V328M1459.5 326V328M1460.5 327V329M1461.5 327V329M1462.5 327V329M1463.5 327V329M1464.5 327V329M1465.5 327V329M1466.5 327V329M1467.5 327V329M1468.5 327V329M1469.5 328V330M1470.5 328V330M1471.5 328V330M1472.5 328V330M1473.5 328V330M1474.5 328V330M1475.5 328V330M1476.5 328V330M1477.5 329V331M1478.5 329V331M1479.5 329V331M1480.5 329V331M1481.5 329V331M1482.5 329V331M1483.5 329V331M1484.5 329V331M1485.5 329V331M1486.5 330V332M1487.5 330V332M1488.5 330V332M1489.5 330V332M1490.5 330V332M1491.5 330V332M1492.5 330V332M1493.5 330V332M1494.5 330V332M1495.5 331V333M1496.5 331V333M1497.5 331V333M1498.5 331V333M1499.5 331V333M1500.5 332V334M1501.5 332V334M1502.5 332V334M1503.5 332V334M1504.5 332V334M1505.5 332V334M1506.5 332V334M1507.5 332V334M1508.5 332V334M1509.5 332V334M1510.5 332V334M1511.5 332V334M1512.5 333V335M1513.5 333V335M1514.5 333V335M1515.5 333V335M1516.5 333V335M1517.5 333V335M1518.5 333V335M1519.5 333V335M1520.5 333V335M1521.5 334V336M1522.5 334V336M1523.5 334V336M1524.5 334V336M1525.5 334V336M1526.5 334V336M1527.5 334V336M1528.5 334V336M1529.5 334V336M1530.5 335V337M1531.5 335V337M1532.5 335V337M1533.5 335V337M1534.5 335V337M1535.5 335V337M1536.5 335V337M1537.5 335V337M1538.5 335V337M1539.5 336V338M1540.5 336V338M1541.5 336V338M1542.5 336V338M1543.5 336V338M1544.5 336V338M1545.5 336V338M1546.5 336V338M1547.5 336V338M1548.5 337V339M1549.5 337V339M1550.5 337V339M1551.5 337V339M1552.5 337V339M1553.5 338V340M1554.5 338V340M1555.5 338V340M1556.5 337V339M1557.5 338V340M1558.5 338V340M1559.5 338V340M1560.5 338V340M1561.5 338V340M1562.5 338V340M1563.5 339V341M1564.5 339V341M1565.5 339V341M1566.5 339V341M1567.5 340V342M1568.5 340V342M1569.5 341V343M1570.5 341V343M1571.5 342V344M1572.5 342V344M1573.5 343V345M1574.5 343V345M1575.5 344V346M1576.5 344V346M1577.5 344V346M1578.5 344V346M1579.5 344V346M1580.5 345V347M1581.5 345V347M1582.5 345V347M1583.5 345V347M1584.5 346V348M1585.5 346V348M1586.5 346V348M1587.5 346V348M1588.5 346V348M1589.5 346V348M1590.5 346V348M1591.5 346V348M1592.5 346V348M1593.5 346V348M1594.5 346V348M1595.5 346V348M1596.5 346V348M1597.5 346V348M1598.5 346V348M1599.5 346V348M1600.5 346V348M1601.5 346V348M1602.5 346V348M1603.5 346V348M1604.5 346V348M1605.5 346V348M1606.5 346V348M1607.5 346V348M1608.5 346V348M1609.5 346V348M1610.5 346V348M1611.5 346V348M1612.5 346V348M1613.5 346V348M1614.5 346V348M1615.5 346V348M1616.5 346V348M1617.5 346V348M1618.5 346V348M1619.5 346V348M1620.5 346V348M1621.5 346V348M1622.5 346V348M1623.5 346V348M1624.5 346V348M1625.5 346V348M1626.5 346V348M1627.5 346V348M1628.5 346V348M1629.5 346V348M1630.5 346V348M1631.5 346V348M1632.5 346V348M1633.5 346V348M1634.5 346V348M1635.5 346V348M1636.5 346V348M1637.5 346V348M1638.5 346V348M1639.5 346V348M1640.5 346V348M1641.5 346V348M1642.5 346V348M1643.5 346V348M1644.5 346V348M1645.5 346V348M1646.5 346V348M1647.5 346V348M1648.5 346V348M1649.5 346V348M1650.5 346V348M1651.5 346V348M1652.5 346V348M1653.5 346V348M1654.5 346V348M1655.5 346V348M1656.5 346V348M1657.5 346V348M1658.5 346V348M1659.5 346V348M1660.5 346V348M1661.5 346V348M1662.5 346V348M1663.5 346V348M1664.5 346V348M1665.5 346V348M1666.5 346V348M1667.5 346V348M1668.5 346V348M1669.5 346V348M1670.5 346V348M1671.5 346V348M1672.5 346V348M1673.5 346V348M1674.5 346V348M1675.5 346V348M1676.5 346V348M1677.5 346V348M1678.5 346V348M1679.5 346V348M1680.5 346V348M1681.5 346V348M1682.5 346V348M1683.5 346V348M1684.5 346V348M1685.5 346V348M1686.5 346V348M1687.5 346V348M1688.5 346V348M1689.5 346V348M1690.5 346V348M1691.5 346V348M1692.5 346V348M1693.5 346V348M1694.5 346V348M1695.5 346V348M1696.5 346V348M1697.5 346V348M1698.5 346V348M1699.5 346V348M1700.5 346V348M1701.5 346V348M1702.5 346V348M1703.5 346V348M1704.5 346V348M1705.5 346V348M1706.5 346V348M1707.5 346V348M1708.5 346V348M1709.5 346V348M1710.5 346V348M1711.5 346V348M1712.5 346V348M1713.5 346V348M1714.5 346V348M1715.5 346V348M1716.5 346V348M1717.5 346V348M1718.5 346V348M1719.5 346V348M1720.5 346V348M1721.5 346V348M1722.5 346V348M1723.5 346V348M1724.5 346V348M1725.5 346V348M1726.5 346V348M1727.5 346V348M1728.5 346V348M1729.5 346V348M1730.5 346V348M1731.5 346V348M1732.5 346V348M1733.5 346V348M1734.5 346V348M1735.5 346V348M1736.5 346V348M1737.5 346V348M1738.5 346V348M1739.5 346V348M1740.5 346V348M1741.5 346V348M1742.5 346V348M1743.5 346V348M1744.5 346V348M1745.5 346V348M1746.5 346V348M1747.5 346V348M1748.5 346V348M1749.5 346V348M1750.5 346V348M1751.5 346V348M1752.5 346V348M1753.5 346V348M1754.5 346V348M1755.5 346V348M1756.5 346V348M1757.5 346V348M1758.5 346V348M1759.5 346V348M1760.5 346V348M1761.5 346V348M1762.5 346V348M1763.5 346V348M1764.5 346V348M1765.5 346V348M1766.5 346V348M1767.5 346V348M1768.5 346V348M1769.5 346V348M1770.5 346V348M1771.5 346V348M1772.5 346V348M1773.5 346V348M1774.5 346V348M1775.5 346V348M1776.5 346V348M1777.5 346V348M1778.5 346V348M1779.5 346V348M1780.5 346V348M1781.5 346V348M1782.5 346V348M1783.5 346V348M1784.5 346V348M1785.5 346V348M1786.5 346V348M1787.5 346V348M1788.5 346V348M1789.5 346V348M1790.5 346V348M1791.5 346V348M1792.5 346V348M1793.5 346V348M1794.5 346V348M1795.5 346V348M1796.5 346V348M1797.5 346V348M1798.5 346V348M1799.5 346V348M1800.5 346V348M1801.5 346V348M1802.5 346V348M1803.5 346V348M1804.5 346V348M1805.5 346V348M1806.5 346V348M1807.5 346V348M1808.5 346V348M1809.5 346V348M1810.5 346V348M1811.5 346V348M1812.5 346V348M1813.5 346V348M1814.5 346V348M1815.5 346V348M1816.5 346V348M1817.5 346V348M1818.5 346V348M1819.5 346V348M1820.5 346V348M1821.5 346V348M1822.5 346V348M1823.5 346V348M1824.5 346V348M1825.5 346V348M1826.5 346V348M1827.5 346V348M1828.5 346V348M1829.5 346V348M1830.5 346V348M1831.5 346V348M1832.5 346V348M1833.5 346V348M1834.5 346V348M1835.5 346V348M1836.5 346V348M1837.5 346V348M1838.5 346V348M1839.5 346V348M1840.5 346V348M1841.5 346V348M1842.5 346V348M1843.5 346V348M1844.5 346V348M1845.5 346V348M1846.5 346V348M1847.5 346V348M1848.5 346V348M1849.5 346V348M1850.5 346V348M1851.5 346V348M1852.5 346V348M1853.5 346V348M1854.5 346V348M1855.5 346V348M1856.5 346V348M1857.5 346V348M1858.5 346V348M1859.5 346V348M1860.5 346V348M1861.5 346V348M1862.5 346V348M1863.5 346V348M1864.5 346V348M1865.5 346V348M1866.5 346V348M1867.5 346V348M1868.5 346V348M1869.5 346V348M1870.5 346V348M1871.5 346V348M1872.5 346V348M1873.5 346V348M1874.5 346V348M1875.5 346V348M1876.5 346V348M1877.5 346V348M1878.5 346V348M1879.5 346V348M1880.5 346V348M1881.5 346V348M1882.5 346V348M1883.5 346V348M1884.5 346V348M1885.5 347V349M1886.5 347V349M1887.5 347V349M1888.5 347V349M1889.5 347V349M1890.5 347V349M1891.5 347V349M1892.5 347V349M1893.5 347V349M1894.5 347V349M1895.5 347V349M1896.5 347V349M1897.5 347V349M1898.5 347V349M1899.5 347V349M1900.5 347V349M1901.5 347V349M1902.5 347V349M1903.5 347V349M1904.5 347V349M1905.5 347V349" stroke="#ff0070" stroke-width="1" fill="none" /><path d="M89.5 280V281M90.5 280V281M91.5 280V281M92.5 277V278M93.5 277V278M94.5 277V278M95.5 280V281M96.5 280V281M99.5 277V278M100.5 277V278M101.5 277V278M104.5 280V281M105.5 280V281M106.5 280V281M107.5 280V281M123.5 280V281M128.5 277V278M129.5 277V278M130.5 277V278M131.5 277V278M137.5 276V277M138.5 276V277M139.5 276V277M141.5 276V277M142.5 276V277M143.5 276V277M144.5 279V280M145.5 279V280M147.5 276V277M148.5 276V277M162.5 277V278M163.5 277V278M164.5 277V278M166.5 277V278M167.5 277V278M168.5 276V277M169.5 276V277M177.5 279V280M178.5 279V280M184.5 280V281M185.5 280V281M186.5 280V281M187.5 280V281M191.5 277V278M193.5 280V281M194.5 279V280M195.5 277V278M196.5 277V278M197.5 277V278M198.5 277V278M200.5 277V278M202.5 277V278M208.5 280V281M209.5 280V281M210.5 277V278M211.5 277V278M218.5 276V277M219.5 276V277M220.5 276V277M221.5 279V280M231.5 276V277M232.5 276V277M233.5 276V277M234.5 276V277M246.5 277V278M249.5 277V278M250.5 277V278M251.5 277V278M258.5 277V278M265.5 277V278M266.5 277V278M267.5 277V278M268.5 277V278M274.5 280V281M275.5 280V281M277.5 277V278M278.5 277V278M292.5 280V281M302.5 276V277M304.5 276V277M309.5 276V277M310.5 276V277M311.5 276V277M312.5 276V277M316.5 276V277M317.5 276V277M319.5 276V277M322.5 276V277M323.5 279V280M324.5 279V280M325.5 279V280M326.5 279V280M333.5 279V280M334.5 276V277M335.5 276V277M336.5 276V277M337.5 276V277M340.5 279V280M341.5 279V280M342.5 279V280M343.5 279V280M345.5 276V277M346.5 276V277M347.5 276V277M348.5 276V277M349.5 279V280M356.5 279V280M357.5 279V280M358.5 279V280M380.5 280V281M383.5 277V278M384.5 277V278M385.5 277V278M386.5 277V278M388.5 277V278M389.5 277V278M390.5 277V278M391.5 277V278M392.5 280V281M393.5 279V280M394.5 279V280M395.5 276V277M396.5 276V277M397.5 276V277M407.5 277V278M408.5 277V278M409.5 277V278M410.5 277V278M422.5 280V281M423.5 280V281M425.5 277V278M430.5 277V278M431.5 277V278M432.5 277V278M433.5 277V278M439.5 280V281M441.5 277V278M442.5 277V278M443.5 277V278M450.5 277V278M451.5 277V278M452.5 277V278M453.5 277V278M469.5 280V281M473.5 280V281M474.5 280V281M475.5 280V281M476.5 280V281M484.5 277V278M485.5 277V278M486.5 277V278M490.5 280V281M491.5 280V281M492.5 280V281M493.5 280V281M496.5 277V278M497.5 277V278M498.5 280V281M506.5 276V277M507.5 276V277M508.5 279V280M509.5 279V280M513.5 276V277M514.5 276V277M515.5 276V277M527.5 276V277M528.5 276V277M529.5 276V277M530.5 276V277M531.5 279V280M532.5 276V277M534.5 279V280M535.5 279V280M536.5 279V280M537.5 279V280M541.5 279V280M542.5 279V280M543.5 280V281M550.5 280V281M551.5 280V281M552.5 280V281M553.5 277V278M554.5 277V278M555.5 280V281M556.5 280V281M557.5 280V281M560.5 277V278M561.5 277V278M571.5 277V278M572.5 277V278M573.5 277V278M574.5 277V278M575.5 280V281M576.5 277V278M577.5 277V278M578.5 276V277M585.5 279V280M587.5 279V280M588.5 279V280M589.5 279V280M601.5 279V280M602.5 279V280M603.5 279V280M607.5 279V280M610.5 276V277M611.5 276V277M612.5 276V277M613.5 277V278M617.5 277V278M618.5 277V278M619.5 277V278M630.5 280V281M631.5 277V278M632.5 277V278M633.5 277V278M634.5 277V278M635.5 280V281M644.5 280V281M645.5 280V281M646.5 280V281M652.5 280V281M664.5 277V278M665.5 277V278M666.5 277V278M685.5 277V278M686.5 277V278M687.5 277V278M695.5 277V278M702.5 280V281M703.5 280V281M704.5 280V281M718.5 277V278M719.5 277V278M720.5 277V278M721.5 277V278M726.5 280V281M727.5 280V281M740.5 276V277M741.5 276V277M742.5 276V277M743.5 279V280M749.5 279V280M750.5 279V280M753.5 276V277M754.5 276V277M755.5 276V277M756.5 276V277M759.5 276V277M761.5 279V280M762.5 279V280M763.5 279V280M764.5 279V280M768.5 279V280M771.5 276V277M782.5 279V280M783.5 279V280M785.5 279V280M789.5 276V277M790.5 276V277M791.5 279V280M792.5 279V280M795.5 279V280M796.5 279V280M797.5 279V280M802.5 279V280M803.5 279V280M806.5 276V277M807.5 276V277M809.5 279V280M812.5 277V278M813.5 277V278M814.5 277V278M815.5 277V278M820.5 277V278M822.5 277V278M823.5 277V278M824.5 277V278M829.5 280V281M830.5 280V281M831.5 280V281M845.5 277V278M871.5 280V281M872.5 280V281M873.5 280V281M878.5 277V278M883.5 277V278M884.5 277V278M885.5 277V278M890.5 277V278M891.5 277V278M892.5 280V281M893.5 280V281M910.5 280V281M911.5 280V281M912.5 280V281M913.5 280V281M925.5 280V281M926.5 280V281M927.5 277V278M928.5 277V278M929.5 277V278M937.5 280V281M938.5 277V278M939.5 277V278M940.5 277V278M950.5 277V278M957.5 277V278M958.5 277V278M959.5 277V278M960.5 277V278M962.5 280V281M963.5 280V281M964.5 280V281M965.5 280V281M971.5 277V278M972.5 277V278M973.5 277V278M974.5 277V278M979.5 280V281M980.5 280V281M981.5 280V281M982.5 280V281M990.5 280V281M991.5 280V281M992.5 280V281M993.5 280V281M995.5 277V278M996.5 277V278M997.5 277V278M1003.5 277V278M1004.5 277V278M1005.5 277V278M1008.5 277V278M1009.5 277V278M1010.5 277V278M1012.5 281V282M1013.5 281V282M1014.5 281V282M1019.5 278V279M1020.5 278V279M1027.5 281V282M1050.5 283V284M1051.5 283V284M1061.5 280V281M1062.5 280V281M1063.5 280V281M1067.5 280V281M1068.5 280V281M1069.5 280V281M1070.5 281V282M1071.5 284V285M1076.5 281V282M1077.5 281V282M1078.5 281V282M1082.5 284V285M1083.5 285V286M1084.5 285V286M1085.5 285V286M1094.5 282V283M1095.5 282V283M1096.5 282V283M1097.5 283V284M1098.5 286V287M1100.5 283V284M1101.5 283V284M1102.5 286V287M1103.5 283V284M1104.5 286V287M1115.5 284V285M1116.5 285V286M1117.5 288V289M1118.5 288V289M1121.5 288V289M1122.5 288V289M1123.5 289V290M1128.5 286V287M1129.5 286V287M1130.5 286V287M1131.5 287V288M1132.5 290V291M1133.5 290V291M1134.5 290V291M1143.5 291V292M1150.5 289V290M1156.5 293V294M1157.5 290V291M1158.5 290V291M1159.5 290V291M1185.5 293V294M1192.5 297V298M1193.5 298V299M1201.5 296V297M1203.5 299V300M1204.5 299V300M1209.5 297V298M1210.5 297V298M1211.5 300V301M1212.5 297V298M1213.5 301V302M1214.5 301V302M1219.5 298V299M1220.5 299V300M1221.5 299V300M1222.5 299V300M1225.5 299V300M1230.5 303V304M1231.5 303V304M1232.5 303V304M1233.5 300V301M1235.5 303V304M1241.5 301V302M1242.5 301V302M1243.5 301V302M1254.5 305V306M1255.5 305V306M1267.5 307V308M1268.5 307V308M1269.5 307V308M1270.5 307V308M1275.5 304V305M1276.5 304V305M1279.5 305V306M1280.5 305V306M1281.5 305V306M1282.5 308V309M1283.5 308V309M1291.5 306V307M1292.5 306V307M1298.5 310V311M1299.5 310V311M1300.5 310V311M1301.5 307V308M1302.5 307V308M1303.5 307V308M1306.5 311V312M1307.5 311V312M1308.5 311V312M1311.5 309V310M1312.5 309V310M1316.5 309V310M1317.5 309V310M1318.5 312V313M1319.5 313V314M1320.5 313V314M1321.5 310V311M1322.5 310V311M1327.5 310V311M1328.5 311V312M1338.5 312V313M1339.5 312V313M1340.5 312V313M1342.5 315V316M1350.5 316V317M1351.5 316V317M1352.5 316V317M1353.5 316V317M1354.5 313V314M1355.5 313V314M1357.5 313V314M1358.5 316V317M1359.5 314V315M1360.5 314V315M1361.5 314V315M1376.5 316V317M1385.5 320V321M1386.5 320V321M1387.5 320V321M1388.5 320V321M1395.5 318V319M1396.5 318V319M1400.5 319V320M1402.5 319V320M1410.5 320V321M1411.5 320V321M1412.5 320V321M1420.5 324V325M1421.5 324V325M1422.5 324V325M1423.5 325V326M1430.5 322V323M1432.5 323V324M1433.5 323V324M1440.5 326V327M1441.5 326V327M1442.5 326V327M1443.5 327V328M1466.5 326V327M1467.5 326V327M1468.5 329V330M1482.5 331V332M1483.5 331V332M1484.5 331V332M1486.5 329V330M1487.5 329V330M1496.5 330V331M1497.5 330V331M1498.5 330V331M1499.5 330V331M1501.5 331V332M1516.5 332V333M1517.5 332V333M1518.5 332V333M1524.5 333V334M1525.5 333V334M1527.5 336V337M1528.5 336V337M1529.5 336V337M1530.5 334V335M1531.5 334V335M1532.5 334V335M1534.5 334V335M1535.5 334V335M1536.5 334V335M1546.5 338V339M1560.5 340V341M1561.5 340V341M1562.5 340V341M1563.5 341V342M1567.5 339V340M1568.5 339V340M1575.5 343V344M1576.5 343V344M1577.5 343V344M1578.5 343V344M1580.5 344V345M1592.5 345V346M1593.5 348V349M1594.5 348V349M1601.5 348V349M1602.5 348V349M1603.5 348V349M1610.5 348V349M1611.5 348V349M1617.5 345V346M1618.5 345V346M1619.5 345V346M1620.5 345V346M1629.5 345V346M1630.5 345V346M1633.5 348V349M1634.5 348V349M1650.5 345V346M1652.5 345V346M1655.5 348V349M1659.5 348V349M1660.5 348V349M1666.5 348V349M1667.5 348V349M1668.5 348V349M1669.5 348V349M1675.5 345V346M1678.5 345V346M1690.5 345V346M1695.5 345V346M1696.5 345V346M1697.5 345V346M1698.5 348V349M1699.5 348V349M1702.5 348V349M1703.5 348V349M1705.5 345V346M1706.5 345V346M1707.5 345V346M1708.5 345V346M1713.5 348V349M1714.5 348V349M1715.5 348V349M1724.5 348V349M1727.5 345V346M1728.5 345V346M1729.5 345V346M1730.5 345V346M1742.5 348V349M1743.5 345V346M1744.5 345V346M1745.5 345V346M1746.5 345V346M1752.5 345V346M1753.5 345V346M1754.5 345V346M1755.5 345V346M1756.5 348V349M1757.5 348V349M1758.5 348V349M1761.5 348V349M1771.5 345V346M1772.5 345V346M1773.5 345V346M1774.5 348V349M1775.5 348V349M1776.5 348V349M1785.5 345V346M1786.5 345V346M1787.5 345V346M1789.5 345V346M1800.5 345V346M1801.5 345V346M1812.5 345V346M1835.5 348V349M1836.5 345V346M1837.5 345V346M1838.5 345V346M1839.5 345V346M1840.5 348V349M1845.5 345V346M1846.5 345V346M1847.5 345V346M1848.5 345V346M1851.5 348V349M1852.5 348V349M1853.5 348V349M1854.5 348V349M1855.5 345V346M1856.5 345V346M1857.5 345V346M1858.5 348V349M1864.5 345V346M1865.5 345V346M1868.5 345V346M1869.5 345V346M1876.5 348V349M1877.5 348V349M1878.5 348V349M1879.5 348V349M1884.5 348V349M1885.5 349V350M1887.5 346V347M1888.5 346V347M1896.5 349V350M1897.5 349V350M1899.5 346V347M1900.5 349V350" stroke="#98003e" stroke-width="1" fill="none" /><path d="M89.5 491V498M90.5 491V498M91.5 491V498M92.5 491V498M93.5 491V498M94.5 491V498M95.5 491V498M96.5 491V498M97.5 491V498M98.5 491V498M99.5 490V498M100.5 490V498M101.5 490V498M102.5 491V498M103.5 491V498M104.5 491V498M105.5 491V498M106.5 491V498M107.5 491V498M108.5 490V498M109.5 490V498M110.5 491V498M111.5 491V498M112.5 491V498M113.5 491V498M114.5 491V498M115.5 491V498M116.5 491V498M117.5 491V498M118.5 491V498M119.5 491V499M120.5 491V499M121.5 491V499M122.5 491V498M123.5 491V498M124.5 491V498M125.5 491V498M126.5 491V498M127.5 490V499M128.5 490V499M129.5 490V498M130.5 490V498M131.5 491V499M132.5 490V499M133.5 490V499M134.5 490V498M135.5 491V498M136.5 491V498M137.5 491V498M138.5 491V498M139.5 491V498M140.5 491V498M141.5 491V498M142.5 491V498M143.5 490V498M144.5 490V498M145.5 490V498M146.5 491V498M147.5 491V498M148.5 491V498M149.5 491V498M150.5 491V498M151.5 491V498M152.5 491V498M153.5 491V498M154.5 491V498M155.5 491V498M156.5 490V498M157.5 490V498M158.5 490V498M159.5 490V499M160.5 491V498M161.5 491V498M162.5 490V498M163.5 490V498M164.5 490V499M165.5 491V498M166.5 491V498M167.5 491V499M168.5 490V499M169.5 490V499M170.5 490V498M171.5 490V498M172.5 491V498M173.5 491V498M174.5 490V498M175.5 490V498M176.5 490V498M177.5 490V498M178.5 491V499M179.5 490V499M180.5 490V498M181.5 490V499M182.5 490V498M183.5 491V498M184.5 491V498M185.5 491V498M186.5 491V499M187.5 491V499M188.5 491V498M189.5 491V498M190.5 491V498M191.5 491V498M192.5 490V498M193.5 490V498M194.5 491V499M195.5 491V499M196.5 491V499M197.5 491V498M198.5 491V498M199.5 490V498M200.5 490V498M201.5 490V499M202.5 491V499M203.5 490V498M204.5 490V498M205.5 490V499M206.5 490V499M207.5 491V498M208.5 491V498M209.5 491V498M210.5 490V498M211.5 490V498M212.5 490V498M213.5 490V498M214.5 491V498M215.5 491V498M216.5 491V499M217.5 491V498M218.5 490V499M219.5 490V499M220.5 490V499M221.5 491V498M222.5 491V498M223.5 490V499M224.5 491V499M225.5 491V498M226.5 490V498M227.5 490V498M228.5 490V498M229.5 490V498M230.5 491V498M231.5 490V498M232.5 491V498M233.5 491V498M234.5 490V498M235.5 490V499M236.5 490V499M237.5 491V499M238.5 491V498M239.5 491V498M240.5 491V498M241.5 491V498M242.5 491V498M243.5 490V498M244.5 490V498M245.5 490V498M246.5 491V498M247.5 491V498M248.5 490V498M249.5 490V498M250.5 491V498M251.5 491V498M252.5 490V498M253.5 490V498M254.5 491V498M255.5 491V498M256.5 491V498M257.5 491V498M258.5 491V498M259.5 491V498M260.5 491V498M261.5 491V498M262.5 490V498M263.5 490V498M264.5 490V499M265.5 491V498M266.5 491V499M267.5 491V499M268.5 490V499M269.5 490V498M270.5 490V498M271.5 490V498M272.5 491V499M273.5 491V498M274.5 491V498M275.5 491V498M276.5 491V498M277.5 491V498M278.5 491V498M279.5 491V498M280.5 491V498M281.5 491V498M282.5 490V498M283.5 490V498M284.5 490V498M285.5 491V498M286.5 490V499M287.5 490V499M288.5 491V499M289.5 491V498M290.5 491V498M291.5 490V498M292.5 490V498M293.5 490V498M294.5 491V498M295.5 491V498M296.5 490V498M297.5 490V498M298.5 490V498M299.5 490V498M300.5 491V498M301.5 491V498M302.5 491V498M303.5 491V498M304.5 490V498M305.5 490V498M306.5 490V498M307.5 490V498M308.5 491V498M309.5 491V498M310.5 491V498M311.5 491V498M312.5 491V498M313.5 491V499M314.5 491V498M315.5 491V498M316.5 491V498M317.5 491V498M318.5 491V498M319.5 490V499M320.5 490V499M321.5 490V499M322.5 491V498M323.5 491V498M324.5 491V498M325.5 491V498M326.5 491V498M327.5 491V498M328.5 490V498M329.5 490V498M330.5 490V498M331.5 490V498M332.5 491V498M333.5 491V498M334.5 491V499M335.5 490V498M336.5 490V498M337.5 490V498M338.5 490V498M339.5 491V498M340.5 490V498M341.5 490V498M342.5 491V498M343.5 491V498M344.5 491V499M345.5 491V498M346.5 491V498M347.5 491V498M348.5 491V499M349.5 490V499M350.5 491V499M351.5 491V498M352.5 491V498M353.5 491V498M354.5 491V498M355.5 491V498M356.5 491V498M357.5 491V498M358.5 491V498M359.5 491V498M360.5 491V499M361.5 491V499M362.5 491V499M363.5 491V498M364.5 491V498M365.5 491V498M366.5 490V498M367.5 490V498M368.5 490V499M369.5 490V499M370.5 491V498M371.5 491V498M372.5 490V498M373.5 490V498M374.5 491V499M375.5 490V498M376.5 490V498M377.5 490V498M378.5 490V499M379.5 491V499M380.5 491V498M381.5 490V498M382.5 490V498M383.5 490V498M384.5 491V499M385.5 491V499M386.5 491V498M387.5 491V498M388.5 491V498M389.5 491V498M390.5 491V498M391.5 490V498M392.5 491V498M393.5 491V498M394.5 491V498M395.5 491V498M396.5 491V498M397.5 491V498M398.5 491V498M399.5 491V498M400.5 491V499M401.5 491V499M402.5 491V499M403.5 491V498M404.5 491V498M405.5 491V498M406.5 490V498M407.5 491V498M408.5 491V498M409.5 491V498M410.5 491V498M411.5 491V498M412.5 491V498M413.5 490V498M414.5 491V498M415.5 491V498M416.5 491V498M417.5 491V498M418.5 491V498M419.5 491V498M420.5 491V498M421.5 491V498M422.5 490V498M423.5 490V498M424.5 491V498M425.5 491V498M426.5 491V498M427.5 491V498M428.5 491V498M429.5 491V498M430.5 491V498M431.5 491V498M432.5 491V498M433.5 491V498M434.5 491V498M435.5 490V498M436.5 490V498M437.5 490V498M438.5 490V498M439.5 491V498M440.5 491V498M441.5 491V498M442.5 491V498M443.5 491V498M444.5 491V498M445.5 491V498M446.5 490V498M447.5 490V498M448.5 490V498M449.5 491V498M450.5 491V499M451.5 491V499M452.5 491V499M453.5 491V498M454.5 491V498M455.5 491V499M456.5 491V499M457.5 491V498M458.5 491V498M459.5 491V498M460.5 491V498M461.5 491V498M462.5 491V498M463.5 491V498M464.5 491V498M465.5 490V498M466.5 490V498M467.5 490V498M468.5 491V498M469.5 491V499M470.5 490V499M471.5 490V499M472.5 491V498M473.5 491V498M474.5 491V498M475.5 491V498M476.5 491V498M477.5 490V498M478.5 490V498M479.5 490V498M480.5 490V498M481.5 491V498M482.5 491V498M483.5 491V498M484.5 491V498M485.5 491V498M486.5 491V498M487.5 491V498M488.5 491V498M489.5 491V499M490.5 491V499M491.5 491V498M492.5 491V498M493.5 490V498M494.5 490V498M495.5 490V498M496.5 491V498M497.5 491V498M498.5 491V498M499.5 491V498M500.5 491V498M501.5 491V498M502.5 490V498M503.5 491V498M504.5 491V498M505.5 491V498M506.5 490V499M507.5 490V499M508.5 491V499M509.5 491V498M510.5 490V498M511.5 490V498M512.5 490V498M513.5 490V498M514.5 491V498M515.5 491V498M516.5 491V498M517.5 491V498M518.5 491V498M519.5 491V498M520.5 491V498M521.5 491V498M522.5 491V498M523.5 491V499M524.5 491V498M525.5 491V498M526.5 491V498M527.5 491V498M528.5 491V498M529.5 491V498M530.5 491V498M531.5 491V498M532.5 491V498M533.5 491V498M534.5 491V498M535.5 490V498M536.5 490V498M537.5 490V498M538.5 490V499M539.5 491V498M540.5 491V498M541.5 491V498M542.5 490V498M543.5 490V498M544.5 490V498M545.5 491V498M546.5 491V498M547.5 491V498M548.5 490V498M549.5 490V498M550.5 490V498M551.5 490V498M552.5 491V498M553.5 491V498M554.5 491V498M555.5 491V498M556.5 491V498M557.5 491V498M558.5 491V498M559.5 491V498M560.5 491V498M561.5 490V498M562.5 491V498M563.5 491V498M564.5 491V498M565.5 491V498M566.5 491V498M567.5 491V498M568.5 491V498M569.5 491V498M570.5 491V498M571.5 491V498M572.5 491V498M573.5 490V498M574.5 490V498M575.5 490V498M576.5 490V498M577.5 491V498M578.5 491V499M579.5 490V499M580.5 490V499M581.5 491V498M582.5 490V498M583.5 490V498M584.5 490V498M585.5 491V498M586.5 490V498M587.5 490V498M588.5 490V498M589.5 490V498M590.5 491V498M591.5 491V498M592.5 491V498M593.5 491V498M594.5 491V498M595.5 490V498M596.5 491V498M597.5 491V498M598.5 490V498M599.5 490V498M600.5 491V498M601.5 491V498M602.5 491V499M603.5 491V499M604.5 491V499M605.5 491V498M606.5 491V498M607.5 491V498M608.5 491V499M609.5 491V499M610.5 491V498M611.5 491V499M612.5 491V498M613.5 491V498M614.5 491V498M615.5 491V498M616.5 490V498M617.5 491V498M618.5 491V499M619.5 491V498M620.5 491V498M621.5 490V498M622.5 491V499M623.5 491V499M624.5 491V498M625.5 491V498M626.5 490V498M627.5 490V498M628.5 490V498M629.5 491V498M630.5 491V498M631.5 491V498M632.5 491V499M633.5 491V499M634.5 491V499M635.5 490V498M636.5 491V498M637.5 491V498M638.5 491V498M639.5 491V498M640.5 491V498M641.5 491V498M642.5 491V498M643.5 491V498M644.5 491V498M645.5 490V498M646.5 491V498M647.5 491V498M648.5 490V498M649.5 490V498M650.5 491V498M651.5 491V498M652.5 491V498M653.5 491V499M654.5 491V498M655.5 490V498M656.5 490V498M657.5 490V498M658.5 490V498M659.5 491V499M660.5 491V499M661.5 490V499M662.5 490V498M663.5 490V498M664.5 491V499M665.5 490V499M666.5 491V499M667.5 491V498M668.5 491V498M669.5 491V498M670.5 491V498M671.5 491V498M672.5 491V498M673.5 491V498M674.5 491V498M675.5 491V498M676.5 491V498M677.5 490V498M678.5 490V498M679.5 490V498M680.5 491V498M681.5 491V498M682.5 491V498M683.5 491V498M684.5 491V498M685.5 491V498M686.5 491V498M687.5 491V498M688.5 491V498M689.5 491V499M690.5 491V499M691.5 491V499M692.5 490V498M693.5 490V498M694.5 490V498M695.5 490V499M696.5 491V499M697.5 491V498M698.5 491V498M699.5 491V498M700.5 491V498M701.5 490V498M702.5 490V499M703.5 490V499M704.5 490V498M705.5 491V498M706.5 490V498M707.5 490V498M708.5 491V498M709.5 491V498M710.5 491V498M711.5 490V498M712.5 490V498M713.5 490V498M714.5 491V498M715.5 491V499M716.5 491V498M717.5 491V498M718.5 491V498M719.5 491V498M720.5 491V498M721.5 491V498M722.5 491V498M723.5 490V498M724.5 491V498M725.5 491V498M726.5 490V498M727.5 490V498M728.5 490V498M729.5 491V498M730.5 491V498M731.5 491V498M732.5 491V498M733.5 490V498M734.5 490V498M735.5 490V498M736.5 490V498M737.5 491V498M738.5 491V498M739.5 491V498M740.5 491V498M741.5 491V498M742.5 491V498M743.5 491V498M744.5 491V498M745.5 491V498M746.5 491V498M747.5 491V498M748.5 490V498M749.5 490V498M750.5 490V498M751.5 490V498M752.5 491V498M753.5 491V498M754.5 491V498M755.5 491V498M756.5 491V498M757.5 491V499M758.5 491V499M759.5 491V498M760.5 491V498M761.5 491V498M762.5 491V498M763.5 491V498M764.5 491V498M765.5 491V498M766.5 491V498M767.5 491V498M768.5 491V499M769.5 490V499M770.5 490V499M771.5 490V498M772.5 491V499M773.5 491V499M774.5 491V498M775.5 491V498M776.5 491V498M777.5 491V498M778.5 491V498M779.5 491V498M780.5 491V498M781.5 491V498M782.5 491V498M783.5 491V498M784.5 491V498M785.5 490V499M786.5 491V498M787.5 491V498M788.5 490V498M789.5 490V498M790.5 491V499M791.5 490V499M792.5 490V498M793.5 491V498M794.5 491V498M795.5 491V498M796.5 491V498M797.5 491V499M798.5 491V499M799.5 490V499M800.5 491V498M801.5 491V498M802.5 491V498M803.5 491V498M804.5 490V499M805.5 490V498M806.5 490V498M807.5 490V498M808.5 491V498M809.5 491V498M810.5 491V498M811.5 491V498M812.5 491V498M813.5 491V498M814.5 491V498M815.5 491V499M816.5 491V499M817.5 490V498M818.5 490V498M819.5 490V498M820.5 490V498M821.5 491V498M822.5 491V498M823.5 490V499M824.5 491V498M825.5 491V498M826.5 491V498M827.5 491V498M828.5 491V498M829.5 490V498M830.5 491V498M831.5 491V498M832.5 491V498M833.5 491V498M834.5 491V498M835.5 491V498M836.5 491V498M837.5 490V498M838.5 491V499M839.5 490V499M840.5 491V499M841.5 490V498M842.5 490V498M843.5 490V498M844.5 490V498M845.5 491V498M846.5 491V498M847.5 491V498M848.5 491V498M849.5 491V499M850.5 491V498M851.5 491V498M852.5 491V499M853.5 491V498M854.5 491V498M855.5 491V498M856.5 491V498M857.5 491V499M858.5 491V499M859.5 491V499M860.5 491V498M861.5 491V498M862.5 491V498M863.5 491V498M864.5 491V498M865.5 491V499M866.5 491V498M867.5 491V498M868.5 490V498M869.5 490V498M870.5 490V498M871.5 490V498M872.5 491V498M873.5 491V498M874.5 491V498M875.5 491V498M876.5 491V498M877.5 491V498M878.5 491V498M879.5 490V498M880.5 490V498M881.5 490V498M882.5 490V498M883.5 491V498M884.5 490V498M885.5 491V498M886.5 491V498M887.5 491V498M888.5 490V498M889.5 490V498M890.5 490V498M891.5 490V499M892.5 491V499M893.5 491V498M894.5 491V498M895.5 491V499M896.5 491V499M897.5 491V499M898.5 490V498M899.5 490V498M900.5 490V498M901.5 490V498M902.5 491V498M903.5 491V498M904.5 491V498M905.5 491V498M906.5 491V498M907.5 491V499M908.5 491V499M909.5 491V498M910.5 491V498M911.5 491V498M912.5 491V498M913.5 491V498M914.5 491V498M915.5 490V498M916.5 490V498M917.5 491V498M918.5 491V498M919.5 491V499M920.5 491V499M921.5 491V499M922.5 491V498M923.5 491V498M924.5 491V498M925.5 491V498M926.5 491V499M927.5 491V499M928.5 491V499M929.5 490V498M930.5 490V498M931.5 490V499M932.5 491V499M933.5 491V498M934.5 491V499M935.5 490V498M936.5 490V498M937.5 490V498M938.5 490V498M939.5 491V499M940.5 491V499M941.5 491V498M942.5 491V498M943.5 491V498M944.5 491V498M945.5 491V498M946.5 491V498M947.5 491V498M948.5 490V498M949.5 490V498M950.5 491V498M951.5 491V499M952.5 491V499M953.5 491V499M954.5 491V498M955.5 491V498M956.5 491V498M957.5 491V498M958.5 490V499M959.5 490V499M960.5 491V498M961.5 490V498M962.5 490V498M963.5 490V498M964.5 490V498M965.5 491V498M966.5 490V498M967.5 490V498M968.5 490V498M969.5 490V499M970.5 491V499M971.5 491V498M972.5 491V498M973.5 491V498M974.5 491V498M975.5 491V498M976.5 491V498M977.5 491V498M978.5 491V498M979.5 491V498M1563.5 491V498M1564.5 490V498M1565.5 490V498M1566.5 490V498M1567.5 491V498M1568.5 490V498M1569.5 490V498M1570.5 490V498M1571.5 490V498M1572.5 491V498M1573.5 491V498M1574.5 491V498M1575.5 490V498M1576.5 490V498M1577.5 491V498M1578.5 491V498M1579.5 491V498M1580.5 491V498M1581.5 490V498M1582.5 490V498M1583.5 491V498M1584.5 491V498M1585.5 490V498M1586.5 490V498M1587.5 491V498M1588.5 490V498M1589.5 491V498M1590.5 491V498M1591.5 491V498M1592.5 491V498M1593.5 491V498M1594.5 491V498M1595.5 491V498M1596.5 490V498M1597.5 490V498M1598.5 491V498M1599.5 490V498M1600.5 490V498M1601.5 490V498M1602.5 490V498M1603.5 491V498M1604.5 491V498M1605.5 491V498M1606.5 491V499M1607.5 491V498M1608.5 491V498M1609.5 491V498M1610.5 491V498M1611.5 491V499M1612.5 491V499M1613.5 491V499M1614.5 491V498M1615.5 491V498M1616.5 491V498M1617.5 491V498M1618.5 491V498M1619.5 491V499M1620.5 491V499M1621.5 491V499M1622.5 491V498M1623.5 491V498M1624.5 491V498M1625.5 491V498M1626.5 491V498M1627.5 491V498M1628.5 491V498M1629.5 491V498M1630.5 491V498M1631.5 491V498M1632.5 491V498M1633.5 491V498M1634.5 491V498M1635.5 491V498M1636.5 491V498M1637.5 491V498M1638.5 491V498M1639.5 491V498M1640.5 490V499M1641.5 490V498M1642.5 490V498M1643.5 490V498M1644.5 491V498M1645.5 491V498M1646.5 491V498M1647.5 491V498M1648.5 491V498M1649.5 491V499M1650.5 491V499M1651.5 491V499M1652.5 491V498M1653.5 491V498M1654.5 491V498M1655.5 490V498M1656.5 490V498M1657.5 490V498M1658.5 491V498M1659.5 491V498M1660.5 491V499M1661.5 490V499M1662.5 490V499M1663.5 490V498M1664.5 490V498M1665.5 491V498M1666.5 490V498M1667.5 490V498M1668.5 490V498M1669.5 490V498M1670.5 491V498M1671.5 491V498M1672.5 491V498M1673.5 491V498M1674.5 491V498M1675.5 491V498M1676.5 491V498M1677.5 491V498M1678.5 491V498M1679.5 491V498M1680.5 491V498M1681.5 491V498M1682.5 491V498M1683.5 491V498M1684.5 491V498M1685.5 490V499M1686.5 490V499M1687.5 491V499M1688.5 491V498M1689.5 491V498M1690.5 491V498M1691.5 491V498M1692.5 491V499M1693.5 491V499M1694.5 491V498M1695.5 491V499M1696.5 491V498M1697.5 491V498M1698.5 491V498M1699.5 491V498M1700.5 491V498M1701.5 491V498M1702.5 491V498M1703.5 490V498M1704.5 490V498M1705.5 491V498M1706.5 491V498M1707.5 491V498M1708.5 491V498M1709.5 491V498M1710.5 491V498M1711.5 491V498M1712.5 491V498M1713.5 491V498M1714.5 490V498M1715.5 490V498M1716.5 490V499M1717.5 491V498M1718.5 490V498M1719.5 490V498M1720.5 491V498M1721.5 491V498M1722.5 491V498M1723.5 491V498M1724.5 491V498M1725.5 491V498M1726.5 490V498M1727.5 490V498M1728.5 491V498M1729.5 491V498M1730.5 491V498M1731.5 491V499M1732.5 491V499M1733.5 491V498M1734.5 491V498M1735.5 491V498M1736.5 491V498M1737.5 491V498M1738.5 491V498M1739.5 491V498M1740.5 491V498M1741.5 491V498M1742.5 491V498M1743.5 491V498M1744.5 491V498M1745.5 490V498M1746.5 490V499M1747.5 490V499M1748.5 491V499M1749.5 491V498M1750.5 491V498M1751.5 491V498M1752.5 490V498M1753.5 491V498M1754.5 491V498M1755.5 491V498M1756.5 491V498M1757.5 490V498M1758.5 490V498M1759.5 490V498M1760.5 491V498M1761.5 491V499M1762.5 491V498M1763.5 491V498M1764.5 490V498M1765.5 491V498M1766.5 491V498M1767.5 491V498M1768.5 490V498M1769.5 490V498M1770.5 490V498M1771.5 491V498M1772.5 491V498M1773.5 491V498M1774.5 491V498M1775.5 491V498M1776.5 491V498M1777.5 491V498M1778.5 491V499M1779.5 491V499M1780.5 490V498M1781.5 490V498M1782.5 490V498M1783.5 490V498M1784.5 491V498M1785.5 491V498M1786.5 490V498M1787.5 490V498M1788.5 491V498M1789.5 491V498M1790.5 491V498M1791.5 491V498M1792.5 491V498M1793.5 491V498M1794.5 490V498M1795.5 490V499M1796.5 491V498M1797.5 491V498M1798.5 491V498M1799.5 491V498M1800.5 490V498M1801.5 491V498M1802.5 491V498M1803.5 491V498M1804.5 491V499M1805.5 491V498M1806.5 491V498M1807.5 491V498M1808.5 491V498M1809.5 491V498M1810.5 491V499M1811.5 491V499M1812.5 491V498M1813.5 490V498M1814.5 490V499M1815.5 490V499M1816.5 490V499M1817.5 491V498M1818.5 491V498M1819.5 491V498M1820.5 490V498M1821.5 490V498M1822.5 490V498M1823.5 490V498M1824.5 491V498M1825.5 491V498M1826.5 491V498M1827.5 490V498M1828.5 490V498M1829.5 490V498M1830.5 491V499M1831.5 491V499M1832.5 491V499M1833.5 490V498M1834.5 490V499M1835.5 490V498M1836.5 490V498M1837.5 491V498M1838.5 491V498M1839.5 491V498M1840.5 491V498M1841.5 491V498M1842.5 491V498M1843.5 491V498M1844.5 491V498M1845.5 491V498M1846.5 491V498M1847.5 490V498M1848.5 490V498M1849.5 491V498M1850.5 491V498M1851.5 491V498M1852.5 491V498M1853.5 491V499M1854.5 491V498M1855.5 491V498M1856.5 490V498M1857.5 490V498M1858.5 490V498M1859.5 490V498M1860.5 491V498M1861.5 491V498M1862.5 491V498M1863.5 491V498M1864.5 491V499M1865.5 491V498M1866.5 491V498M1867.5 490V498M1868.5 491V498M1869.5 490V498M1870.5 490V498M1871.5 491V498M1872.5 490V498M1873.5 490V498M1874.5 490V499M1875.5 490V499M1876.5 491V499M1877.5 490V498M1878.5 490V499M1879.5 491V499M1880.5 491V498M1881.5 491V498M1882.5 491V498M1883.5 491V499M1884.5 491V499M1885.5 491V499M1886.5 491V498M1887.5 491V498M1888.5 491V499M1889.5 491V499M1890.5 491V498M1891.5 491V498M1892.5 491V498M1893.5 491V498M1894.5 491V498M1895.5 491V498M1896.5 491V498M1897.5 491V498M1898.5 491V498M1899.5 491V498M1900.5 491V498M1901.5 490V498M1902.5 490V498M1903.5 491V498M1904.5 491V498M1905.5 491V499M980.5 471V508M981.5 472V508M982.5 472V508M983.5 472V508M984.5 472V508M985.5 472V509M986.5 472V508M987.5 473V508M988.5 472V509M989.5 472V509M990.5 472V509M991.5 472V508M992.5 472V508M993.5 472V508M994.5 473V508M995.5 472V509M996.5 472V508M997.5 472V508M998.5 472V508M999.5 472V508M1000.5 472V508M1001.5 472V508M1002.5 472V508M1003.5 472V508M1004.5 472V508M1005.5 472V508M1006.5 472V508M1007.5 472V508M1008.5 471V508M1009.5 471V508M1010.5 472V508M1011.5 472V508M1012.5 472V509M1013.5 472V509M1014.5 472V509M1015.5 472V508M1016.5 473V508M1017.5 473V508M1018.5 472V509M1019.5 473V509M1020.5 472V509M1021.5 473V508M1022.5 471V508M1023.5 476V509M1024.5 472V508M1025.5 472V508M1026.5 472V509M1027.5 472V508M1028.5 472V509M1029.5 471V509M1030.5 472V508M1031.5 472V508M1032.5 473V508M1033.5 473V508M1034.5 473V508M1035.5 472V508M1036.5 473V508M1037.5 473V509M1038.5 473V508M1039.5 472V508M1040.5 472V508M1041.5 478V508M1042.5 473V508M1043.5 473V508M1044.5 472V508M1045.5 472V508M1046.5 472V508M1047.5 472V508M1048.5 473V509M1049.5 473V508M1050.5 472V508M1051.5 472V509M1052.5 472V509M1053.5 472V508M1054.5 472V508M1055.5 479V508M1056.5 473V508M1057.5 473V508M1058.5 472V508M1059.5 472V508M1060.5 472V508M1061.5 472V509M1062.5 472V508M1063.5 472V508M1064.5 472V508M1065.5 473V508M1066.5 473V508M1067.5 472V508M1068.5 473V508M1069.5 472V508M1070.5 471V508M1071.5 477V508M1072.5 472V509M1073.5 472V509M1074.5 472V508M1075.5 472V508M1076.5 473V508M1077.5 472V508M1078.5 471V508M1079.5 472V508M1080.5 472V508M1081.5 472V508M1082.5 472V509M1083.5 472V509M1084.5 472V509M1085.5 472V508M1086.5 472V509M1087.5 473V508M1088.5 473V508M1089.5 472V508M1090.5 472V508M1091.5 472V508M1092.5 472V508M1093.5 473V508M1094.5 473V508M1095.5 473V508M1096.5 476V508M1097.5 472V509M1098.5 472V508M1099.5 473V508M1100.5 473V508M1101.5 473V508M1102.5 472V508M1103.5 473V508M1104.5 473V509M1105.5 472V509M1106.5 472V508M1107.5 472V508M1108.5 473V508M1109.5 473V508M1110.5 472V509M1111.5 472V509M1112.5 472V509M1113.5 472V508M1114.5 472V508M1115.5 472V509M1116.5 472V509M1117.5 472V509M1118.5 472V508M1119.5 473V509M1120.5 473V509M1121.5 473V509M1122.5 472V508M1123.5 472V508M1124.5 473V508M1125.5 473V509M1126.5 472V509M1127.5 473V509M1128.5 472V508M1129.5 480V509M1130.5 472V509M1131.5 472V509M1132.5 472V508M1133.5 473V508M1134.5 473V509M1135.5 473V508M1136.5 472V509M1137.5 473V509M1138.5 472V509M1139.5 472V508M1140.5 472V508M1141.5 472V508M1142.5 472V508M1143.5 473V508M1144.5 473V508M1145.5 480V508M1146.5 472V508M1147.5 472V508M1148.5 473V508M1149.5 473V508M1150.5 473V508M1151.5 472V509M1152.5 476V508M1153.5 472V508M1154.5 473V508M1155.5 472V508M1156.5 472V508M1157.5 472V508M1158.5 472V508M1159.5 473V508M1160.5 473V508M1161.5 473V508M1162.5 472V508M1163.5 473V509M1164.5 473V509M1165.5 473V508M1166.5 472V508M1167.5 472V508M1168.5 471V508M1169.5 472V508M1170.5 472V508M1171.5 472V508M1172.5 472V508M1173.5 473V508M1174.5 473V508M1175.5 472V508M1176.5 472V508M1177.5 473V508M1178.5 472V508M1179.5 473V508M1180.5 472V508M1181.5 473V508M1182.5 473V508M1183.5 473V509M1184.5 472V509M1185.5 472V509M1186.5 473V508M1187.5 473V508M1188.5 472V508M1189.5 473V509M1190.5 479V509M1191.5 473V508M1192.5 472V508M1193.5 473V508M1194.5 473V508M1195.5 473V509M1196.5 472V508M1197.5 472V508M1198.5 477V509M1199.5 472V508M1200.5 472V508M1201.5 472V509M1202.5 472V508M1203.5 478V509M1204.5 472V508M1205.5 472V508M1206.5 472V508M1207.5 472V508M1208.5 473V508M1209.5 472V508M1210.5 472V508M1211.5 473V509M1212.5 472V509M1213.5 472V509M1214.5 473V508M1215.5 472V509M1216.5 472V509M1217.5 472V509M1218.5 472V508M1219.5 472V508M1220.5 473V508M1221.5 473V508M1222.5 472V508M1223.5 472V508M1224.5 472V508M1225.5 472V508M1226.5 472V508M1227.5 473V508M1228.5 473V508M1229.5 472V508M1230.5 473V508M1231.5 472V508M1232.5 473V508M1233.5 473V509M1234.5 473V509M1235.5 472V509M1236.5 472V508M1237.5 472V508M1238.5 472V508M1239.5 472V508M1240.5 472V508M1241.5 472V509M1242.5 473V509M1243.5 471V509M1244.5 473V508M1245.5 473V509M1246.5 473V508M1247.5 472V508M1248.5 473V509M1249.5 472V508M1250.5 472V509M1251.5 473V509M1252.5 473V509M1253.5 473V508M1254.5 472V508M1255.5 472V508M1256.5 473V508M1257.5 473V508M1258.5 473V509M1259.5 472V509M1260.5 472V509M1261.5 473V508M1262.5 473V508M1263.5 473V508M1264.5 472V508M1265.5 472V508M1266.5 472V508M1267.5 472V508M1268.5 472V509M1269.5 472V508M1270.5 473V508M1271.5 473V509M1272.5 473V509M1273.5 471V509M1274.5 473V508M1275.5 471V508M1276.5 473V508M1277.5 473V508M1278.5 473V508M1279.5 471V509M1280.5 472V509M1281.5 472V509M1282.5 472V508M1283.5 472V508M1284.5 473V508M1285.5 473V508M1286.5 473V508M1287.5 472V509M1288.5 472V508M1289.5 473V508M1290.5 473V508M1291.5 472V508M1292.5 473V508M1293.5 472V508M1294.5 472V508M1295.5 472V508M1296.5 473V508M1297.5 473V508M1298.5 473V508M1299.5 472V508M1300.5 472V508M1301.5 479V509M1302.5 472V508M1303.5 472V508M1304.5 472V508M1305.5 473V508M1306.5 473V508M1307.5 472V508M1308.5 473V509M1309.5 472V509M1310.5 473V509M1311.5 472V508M1312.5 473V508M1313.5 473V508M1314.5 473V508M1315.5 472V508M1316.5 472V509M1317.5 472V509M1318.5 472V509M1319.5 472V508M1320.5 472V508M1321.5 472V508M1322.5 472V508M1323.5 472V508M1324.5 472V508M1325.5 472V508M1326.5 473V509M1327.5 473V508M1328.5 478V508M1329.5 472V508M1330.5 472V508M1331.5 472V508M1332.5 473V508M1333.5 473V508M1334.5 473V508M1335.5 472V508M1336.5 473V508M1337.5 473V508M1338.5 472V508M1339.5 472V508M1340.5 472V508M1341.5 471V508M1342.5 472V508M1343.5 473V508M1344.5 473V508M1345.5 472V508M1346.5 472V508M1347.5 472V508M1348.5 472V508M1349.5 472V508M1350.5 472V508M1351.5 473V509M1352.5 472V509M1353.5 472V509M1354.5 472V508M1355.5 473V508M1356.5 473V508M1357.5 472V509M1358.5 473V508M1359.5 472V509M1360.5 473V509M1361.5 473V508M1362.5 473V508M1363.5 472V508M1364.5 472V508M1365.5 472V508M1366.5 472V508M1367.5 472V508M1368.5 476V508M1369.5 472V508M1370.5 472V508M1371.5 473V508M1372.5 473V508M1373.5 472V508M1374.5 472V508M1375.5 473V508M1376.5 473V508M1377.5 472V509M1378.5 472V509M1379.5 472V508M1380.5 472V508M1381.5 472V508M1382.5 473V508M1383.5 473V508M1384.5 472V508M1385.5 473V508M1386.5 473V508M1387.5 471V508M1388.5 472V508M1389.5 472V509M1390.5 472V509M1391.5 472V508M1392.5 472V508M1393.5 473V508M1394.5 473V508M1395.5 473V508M1396.5 472V509M1397.5 472V509M1398.5 472V509M1399.5 471V508M1400.5 473V508M1401.5 473V508M1402.5 473V508M1403.5 472V508M1404.5 472V508M1405.5 472V508M1406.5 472V508M1407.5 472V508M1408.5 472V508M1409.5 472V508M1410.5 472V509M1411.5 472V509M1412.5 472V508M1413.5 473V508M1414.5 472V508M1415.5 471V508M1416.5 471V508M1417.5 473V509M1418.5 473V509M1419.5 473V508M1420.5 472V508M1421.5 472V508M1422.5 472V508M1423.5 472V508M1424.5 478V508M1425.5 473V508M1426.5 472V509M1427.5 473V509M1428.5 473V509M1429.5 472V508M1430.5 472V508M1431.5 478V508M1432.5 473V508M1433.5 478V508M1434.5 472V508M1435.5 472V509M1436.5 472V508M1437.5 476V509M1438.5 473V509M1439.5 472V508M1440.5 473V509M1441.5 473V508M1442.5 472V508M1443.5 473V509M1444.5 473V508M1445.5 473V508M1446.5 472V508M1447.5 472V508M1448.5 472V508M1449.5 472V508M1450.5 472V508M1451.5 472V508M1452.5 472V508M1453.5 472V508M1454.5 472V508M1455.5 472V508M1456.5 472V509M1457.5 472V509M1458.5 473V509M1459.5 473V508M1460.5 472V509M1461.5 472V508M1462.5 476V508M1463.5 472V508M1464.5 473V508M1465.5 473V508M1466.5 472V508M1467.5 472V508M1468.5 472V508M1469.5 472V508M1470.5 472V508M1471.5 472V508M1472.5 472V508M1473.5 473V509M1474.5 473V509M1475.5 473V508M1476.5 472V508M1477.5 472V508M1478.5 472V509M1479.5 471V508M1480.5 472V508M1481.5 472V508M1482.5 480V508M1483.5 473V509M1484.5 472V509M1485.5 472V508M1486.5 473V508M1487.5 473V508M1488.5 473V508M1489.5 472V508M1490.5 472V508M1491.5 473V509M1492.5 473V508M1493.5 473V509M1494.5 472V509M1495.5 473V508M1496.5 473V508M1497.5 473V508M1498.5 472V508M1499.5 472V508M1500.5 473V508M1501.5 473V508M1502.5 473V509M1503.5 472V508M1504.5 471V509M1505.5 472V509M1506.5 472V508M1507.5 473V508M1508.5 472V509M1509.5 472V508M1510.5 472V508M1511.5 472V508M1512.5 472V508M1513.5 472V508M1514.5 473V508M1515.5 472V508M1516.5 473V508M1517.5 472V509M1518.5 473V509M1519.5 473V508M1520.5 473V508M1521.5 472V508M1522.5 473V508M1523.5 473V508M1524.5 472V508M1525.5 473V508M1526.5 472V509M1527.5 472V509M1528.5 472V508M1529.5 471V508M1530.5 473V508M1531.5 473V508M1532.5 472V508M1533.5 472V508M1534.5 472V508M1535.5 471V508M1536.5 473V508M1537.5 472V508M1538.5 473V508M1539.5 473V508M1540.5 472V508M1541.5 472V508M1542.5 473V508M1543.5 473V508M1544.5 472V508M1545.5 472V508M1546.5 472V509M1547.5 472V509M1548.5 472V509M1549.5 478V508M1550.5 472V508M1551.5 473V508M1552.5 473V508M1553.5 473V509M1554.5 472V508M1555.5 471V508M1556.5 472V508M1557.5 472V508M1558.5 473V508M1559.5 472V508M1560.5 473V508M1561.5 473V509M1562.5 473V509" stroke="#5a5400" stroke-width="1" fill="none" /><path d="M89.5 493V496M90.5 493V496M91.5 493V496M92.5 493V496M93.5 493V496M94.5 493V496M95.5 493V496M96.5 493V496M97.5 493V496M98.5 493V496M99.5 493V496M100.5 493V496M101.5 493V496M102.5 493V496M103.5 493V496M104.5 493V496M105.5 493V496M106.5 493V496M107.5 493V496M108.5 493V496M109.5 493V496M110.5 493V496M111.5 493V496M112.5 493V496M113.5 493V496M114.5 493V496M115.5 493V496M116.5 493V496M117.5 493V496M118.5 493V496M119.5 493V496M120.5 493V496M121.5 493V496M122.5 493V496M123.5 493V496M124.5 493V496M125.5 493V496M126.5 493V496M127.5 493V496M128.5 493V496M129.5 493V496M130.5 493V496M131.5 493V496M132.5 493V496M133.5 493V496M134.5 493V496M135.5 493V496M136.5 493V496M137.5 493V496M138.5 493V496M139.5 493V496M140.5 493V496M141.5 493V496M142.5 493V496M143.5 493V496M144.5 493V496M145.5 493V496M146.5 493V496M147.5 493V496M148.5 493V496M149.5 493V496M150.5 493V496M151.5 493V496M152.5 493V496M153.5 493V496M154.5 493V496M155.5 493V496M156.5 493V496M157.5 493V496M158.5 493V496M159.5 493V496M160.5 493V496M161.5 493V496M162.5 493V496M163.5 493V496M164.5 493V496M165.5 493V496M166.5 493V496M167.5 493V496M168.5 493V496M169.5 493V496M170.5 493V496M171.5 493V496M172.5 493V496M173.5 493V496M174.5 493V496M175.5 493V496M176.5 493V496M177.5 493V496M178.5 493V496M179.5 493V496M180.5 493V496M181.5 493V496M182.5 493V496M183.5 493V496M184.5 493V496M185.5 493V496M186.5 493V496M187.5 493V496M188.5 493V496M189.5 493V496M190.5 493V496M191.5 493V496M192.5 493V496M193.5 493V496M194.5 493V496M195.5 493V496M196.5 493V496M197.5 493V496M198.5 493V496M199.5 493V496M200.5 493V496M201.5 493V496M202.5 493V496M203.5 493V496M204.5 493V496M205.5 493V496M206.5 493V496M207.5 493V496M208.5 493V496M209.5 493V496M210.5 493V496M211.5 493V496M212.5 493V496M213.5 493V496M214.5 493V496M215.5 493V496M216.5 493V496M217.5 493V496M218.5 493V496M219.5 493V496M220.5 493V496M221.5 493V496M222.5 493V496M223.5 493V496M224.5 493V496M225.5 493V496M226.5 493V496M227.5 493V496M228.5 493V496M229.5 493V496M230.5 493V496M231.5 493V496M232.5 493V496M233.5 493V496M234.5 493V496M235.5 493V496M236.5 493V496M237.5 493V496M238.5 493V496M239.5 493V496M240.5 493V496M241.5 493V496M242.5 493V496M243.5 493V496M244.5 493V496M245.5 493V496M246.5 493V496M247.5 493V496M248.5 493V496M249.5 493V496M250.5 493V496M251.5 493V496M252.5 493V496M253.5 493V496M254.5 493V496M255.5 493V496M256.5 493V496M257.5 493V496M258.5 493V496M259.5 493V496M260.5 493V496M261.5 493V496M262.5 493V496M263.5 493V496M264.5 493V496M265.5 493V496M266.5 493V496M267.5 493V496M268.5 493V496M269.5 493V496M270.5 493V496M271.5 493V496M272.5 493V496M273.5 493V496M274.5 493V496M275.5 493V496M276.5 493V496M277.5 493V496M278.5 493V496M279.5 493V496M280.5 493V496M281.5 493V496M282.5 493V496M283.5 493V496M284.5 493V496M285.5 493V496M286.5 493V496M287.5 493V496M288.5 493V496M289.5 493V496M290.5 493V496M291.5 493V496M292.5 493V496M293.5 493V496M294.5 493V496M295.5 493V496M296.5 493V496M297.5 493V496M298.5 493V496M299.5 493V496M300.5 493V496M301.5 493V496M302.5 493V496M303.5 493V496M304.5 493V496M305.5 493V496M306.5 493V496M307.5 493V496M308.5 493V496M309.5 493V496M310.5 493V496M311.5 493V496M312.5 493V496M313.5 493V496M314.5 493V496M315.5 493V496M316.5 493V496M317.5 493V496M318.5 493V496M319.5 493V496M320.5 493V496M321.5 493V496M322.5 493V496M323.5 493V496M324.5 493V496M325.5 493V496M326.5 493V496M327.5 493V496M328.5 493V496M329.5 493V496M330.5 493V496M331.5 493V496M332.5 493V496M333.5 493V496M334.5 493V496M335.5 493V496M336.5 493V496M337.5 493V496M338.5 493V496M339.5 493V496M340.5 493V496M341.5 493V496M342.5 493V496M343.5 493V496M344.5 493V496M345.5 493V496M346.5 493V496M347.5 493V496M348.5 493V496M349.5 493V496M350.5 493V496M351.5 493V496M352.5 493V496M353.5 493V496M354.5 493V496M355.5 493V496M356.5 493V496M357.5 493V496M358.5 493V496M359.5 493V496M360.5 493V496M361.5 493V496M362.5 493V496M363.5 493V496M364.5 493V496M365.5 493V496M366.5 493V496M367.5 493V496M368.5 493V496M369.5 493V496M370.5 493V496M371.5 493V496M372.5 493V496M373.5 493V496M374.5 493V496M375.5 493V496M376.5 493V496M377.5 493V496M378.5 493V496M379.5 493V496M380.5 493V496M381.5 493V496M382.5 493V496M383.5 493V496M384.5 493V496M385.5 493V496M386.5 493V496M387.5 493V496M388.5 493V496M389.5 493V496M390.5 493V496M391.5 493V496M392.5 493V496M393.5 493V496M394.5 493V496M395.5 493V496M396.5 493V496M397.5 493V496M398.5 493V496M399.5 493V496M400.5 493V496M401.5 493V496M402.5 493V496M403.5 493V496M404.5 493V496M405.5 493V496M406.5 493V496M407.5 493V496M408.5 493V496M409.5 493V496M410.5 493V496M411.5 493V496M412.5 493V496M413.5 493V496M414.5 493V496M415.5 493V496M416.5 493V496M417.5 493V496M418.5 493V496M419.5 493V496M420.5 493V496M421.5 493V496M422.5 493V496M423.5 493V496M424.5 493V496M425.5 493V496M426.5 493V496M427.5 493V496M428.5 493V496M429.5 493V496M430.5 493V496M431.5 493V496M432.5 493V496M433.5 493V496M434.5 493V496M435.5 493V496M436.5 493V496M437.5 493V496M438.5 493V496M439.5 493V496M440.5 493V496M441.5 493V496M442.5 493V496M443.5 493V496M444.5 493V496M445.5 493V496M446.5 493V496M447.5 493V496M448.5 493V496M449.5 493V496M450.5 493V496M451.5 493V496M452.5 493V496M453.5 493V496M454.5 493V496M455.5 493V496M456.5 493V496M457.5 493V496M458.5 493V496M459.5 493V496M460.5 493V496M461.5 493V496M462.5 493V496M463.5 493V496M464.5 493V496M465.5 493V496M466.5 493V496M467.5 493V496M468.5 493V496M469.5 493V496M470.5 493V496M471.5 493V496M472.5 493V496M473.5 493V496M474.5 493V496M475.5 493V496M476.5 493V496M477.5 493V496M478.5 493V496M479.5 493V496M480.5 493V496M481.5 493V496M482.5 493V496M483.5 493V496M484.5 493V496M485.5 493V496M486.5 493V496M487.5 493V496M488.5 493V496M489.5 493V496M490.5 493V496M491.5 493V496M492.5 493V496M493.5 493V496M494.5 493V496M495.5 493V496M496.5 493V496M497.5 493V496M498.5 493V496M499.5 493V496M500.5 493V496M501.5 493V496M502.5 493V496M503.5 493V496M504.5 493V496M505.5 493V496M506.5 493V496M507.5 493V496M508.5 493V496M509.5 493V496M510.5 493V496M511.5 493V496M512.5 493V496M513.5 493V496M514.5 493V496M515.5 493V496M516.5 493V496M517.5 493V496M518.5 493V496M519.5 493V496M520.5 493V496M521.5 493V496M522.5 493V496M523.5 493V496M524.5 493V496M525.5 493V496M526.5 493V496M527.5 493V496M528.5 493V496M529.5 493V496M530.5 493V496M531.5 493V496M532.5 493V496M533.5 493V496M534.5 493V496M535.5 493V496M536.5 493V496M537.5 493V496M538.5 493V496M539.5 493V496M540.5 493V496M541.5 493V496M542.5 493V496M543.5 493V496M544.5 493V496M545.5 493V496M546.5 493V496M547.5 493V496M548.5 493V496M549.5 493V496M550.5 493V496M551.5 493V496M552.5 493V496M553.5 493V496M554.5 493V496M555.5 493V496M556.5 493V496M557.5 493V496M558.5 493V496M559.5 493V496M560.5 493V496M561.5 493V496M562.5 493V496M563.5 493V496M564.5 493V496M565.5 493V496M566.5 493V496M567.5 493V496M568.5 493V496M569.5 493V496M570.5 493V496M571.5 493V496M572.5 493V496M573.5 493V496M574.5 493V496M575.5 493V496M576.5 493V496M577.5 493V496M578.5 493V496M579.5 493V496M580.5 493V496M581.5 493V496M582.5 493V496M583.5 493V496M584.5 493V496M585.5 493V496M586.5 493V496M587.5 493V496M588.5 493V496M589.5 493V496M590.5 493V496M591.5 493V496M592.5 493V496M593.5 493V496M594.5 493V496M595.5 493V496M596.5 493V496M597.5 493V496M598.5 493V496M599.5 493V496M600.5 493V496M601.5 493V496M602.5 493V496M603.5 493V496M604.5 493V496M605.5 493V496M606.5 493V496M607.5 493V496M608.5 493V496M609.5 493V496M610.5 493V496M611.5 493V496M612.5 493V496M613.5 493V496M614.5 493V496M615.5 493V496M616.5 493V496M617.5 493V496M618.5 493V496M619.5 493V496M620.5 493V496M621.5 493V496M622.5 493V496M623.5 493V496M624.5 493V496M625.5 493V496M626.5 493V496M627.5 493V496M628.5 493V496M629.5 493V496M630.5 493V496M631.5 493V496M632.5 493V496M633.5 493V496M634.5 493V496M635.5 493V496M636.5 493V496M637.5 493V496M638.5 493V496M639.5 493V496M640.5 493V496M641.5 493V496M642.5 493V496M643.5 493V496M644.5 493V496M645.5 493V496M646.5 493V496M647.5 493V496M648.5 493V496M649.5 493V496M650.5 493V496M651.5 493V496M652.5 493V496M653.5 493V496M654.5 493V496M655.5 493V496M656.5 493V496M657.5 493V496M658.5 493V496M659.5 493V496M660.5 493V496M661.5 493V496M662.5 493V496M663.5 493V496M664.5 493V496M665.5 493V496M666.5 493V496M667.5 493V496M668.5 493V496M669.5 493V496M670.5 493V496M671.5 493V496M672.5 493V496M673.5 493V496M674.5 493V496M675.5 493V496M676.5 493V496M677.5 493V496M678.5 493V496M679.5 493V496M680.5 493V496M681.5 493V496M682.5 493V496M683.5 493V496M684.5 493V496M685.5 493V496M686.5 493V496M687.5 493V496M688.5 493V496M689.5 493V496M690.5 493V496M691.5 493V496M692.5 493V496M693.5 493V496M694.5 493V496M695.5 493V496M696.5 493V496M697.5 493V496M698.5 493V496M699.5 493V496M700.5 493V496M701.5 493V496M702.5 493V496M703.5 493V496M704.5 493V496M705.5 493V496M706.5 493V496M707.5 493V496M708.5 493V496M709.5 493V496M710.5 493V496M711.5 493V496M712.5 493V496M713.5 493V496M714.5 493V496M715.5 493V496M716.5 493V496M717.5 493V496M718.5 493V496M719.5 493V496M720.5 493V496M721.5 493V496M722.5 493V496M723.5 493V496M724.5 493V496M725.5 493V496M726.5 493V496M727.5 493V496M728.5 493V496M729.5 493V496M730.5 493V496M731.5 493V496M732.5 493V496M733.5 493V496M734.5 493V496M735.5 493V496M736.5 493V496M737.5 493V496M738.5 493V496M739.5 493V496M740.5 493V496M741.5 493V496M742.5 493V496M743.5 493V496M744.5 493V496M745.5 493V496M746.5 493V496M747.5 493V496M748.5 493V496M749.5 493V496M750.5 493V496M751.5 493V496M752.5 493V496M753.5 493V496M754.5 493V496M755.5 493V496M756.5 493V496M757.5 493V496M758.5 493V496M759.5 493V496M760.5 493V496M761.5 493V496M762.5 493V496M763.5 493V496M764.5 493V496M765.5 493V496M766.5 493V496M767.5 493V496M768.5 493V496M769.5 493V496M770.5 493V496M771.5 493V496M772.5 493V496M773.5 493V496M774.5 493V496M775.5 493V496M776.5 493V496M777.5 493V496M778.5 493V496M779.5 493V496M780.5 493V496M781.5 493V496M782.5 493V496M783.5 493V496M784.5 493V496M785.5 493V496M786.5 493V496M787.5 493V496M788.5 493V496M789.5 493V496M790.5 493V496M791.5 493V496M792.5 493V496M793.5 493V496M794.5 493V496M795.5 493V496M796.5 493V496M797.5 493V496M798.5 493V496M799.5 493V496M800.5 493V496M801.5 493V496M802.5 493V496M803.5 493V496M804.5 493V496M805.5 493V496M806.5 493V496M807.5 493V496M808.5 493V496M809.5 493V496M810.5 493V496M811.5 493V496M812.5 493V496M813.5 493V496M814.5 493V496M815.5 493V496M816.5 493V496M817.5 493V496M818.5 493V496M819.5 493V496M820.5 493V496M821.5 493V496M822.5 493V496M823.5 493V496M824.5 493V496M825.5 493V496M826.5 493V496M827.5 493V496M828.5 493V496M829.5 493V496M830.5 493V496M831.5 493V496M832.5 493V496M833.5 493V496M834.5 493V496M835.5 493V496M836.5 493V496M837.5 493V496M838.5 493V496M839.5 493V496M840.5 493V496M841.5 493V496M842.5 493V496M843.5 493V496M844.5 493V496M845.5 493V496M846.5 493V496M847.5 493V496M848.5 493V496M849.5 493V496M850.5 493V496M851.5 493V496M852.5 493V496M853.5 493V496M854.5 493V496M855.5 493V496M856.5 493V496M857.5 493V496M858.5 493V496M859.5 493V496M860.5 493V496M861.5 493V496M862.5 493V496M863.5 493V496M864.5 493V496M865.5 493V496M866.5 493V496M867.5 493V496M868.5 493V496M869.5 493V496M870.5 493V496M871.5 493V496M872.5 493V496M873.5 493V496M874.5 493V496M875.5 493V496M876.5 493V496M877.5 493V496M878.5 493V496M879.5 493V496M880.5 493V496M881.5 493V496M882.5 493V496M883.5 493V496M884.5 493V496M885.5 493V496M886.5 493V496M887.5 493V496M888.5 493V496M889.5 493V496M890.5 493V496M891.5 493V496M892.5 493V496M893.5 493V496M894.5 493V496M895.5 493V496M896.5 493V496M897.5 493V496M898.5 493V496M899.5 493V496M900.5 493V496M901.5 493V496M902.5 493V496M903.5 493V496M904.5 493V496M905.5 493V496M906.5 493V496M907.5 493V496M908.5 493V496M909.5 493V496M910.5 493V496M911.5 493V496M912.5 493V496M913.5 493V496M914.5 493V496M915.5 493V496M916.5 493V496M917.5 493V496M918.5 493V496M919.5 493V496M920.5 493V496M921.5 493V496M922.5 493V496M923.5 493V496M924.5 493V496M925.5 493V496M926.5 493V496M927.5 493V496M928.5 493V496M929.5 493V496M930.5 493V496M931.5 493V496M932.5 493V496M933.5 493V496M934.5 493V496M935.5 493V496M936.5 493V496M937.5 493V496M938.5 493V496M939.5 493V496M940.5 493V496M941.5 493V496M942.5 493V496M943.5 493V496M944.5 493V496M945.5 493V496M946.5 493V496M947.5 493V496M948.5 493V496M949.5 493V496M950.5 493V496M951.5 493V496M952.5 493V496M953.5 493V496M954.5 493V496M955.5 493V496M956.5 493V496M957.5 493V496M958.5 493V496M959.5 493V496M960.5 493V496M961.5 493V496M962.5 493V496M963.5 493V496M964.5 493V496M965.5 493V496M966.5 493V496M967.5 493V496M968.5 493V496M969.5 493V496M970.5 493V496M971.5 493V496M972.5 493V496M973.5 493V496M974.5 493V496M975.5 493V496M976.5 493V496M977.5 493V496M978.5 493V496M979.5 493V496M1563.5 493V496M1564.5 493V496M1565.5 493V496M1566.5 493V496M1567.5 493V496M1568.5 493V496M1569.5 493V496M1570.5 493V496M1571.5 493V496M1572.5 493V496M1573.5 493V496M1574.5 493V496M1575.5 493V496M1576.5 493V496M1577.5 493V496M1578.5 493V496M1579.5 493V496M1580.5 493V496M1581.5 493V496M1582.5 493V496M1583.5 493V496M1584.5 493V496M1585.5 493V496M1586.5 493V496M1587.5 493V496M1588.5 493V496M1589.5 493V496M1590.5 493V496M1591.5 493V496M1592.5 493V496M1593.5 493V496M1594.5 493V496M1595.5 493V496M1596.5 493V496M1597.5 493V496M1598.5 493V496M1599.5 493V496M1600.5 493V496M1601.5 493V496M1602.5 493V496M1603.5 493V496M1604.5 493V496M1605.5 493V496M1606.5 493V496M1607.5 493V496M1608.5 493V496M1609.5 493V496M1610.5 493V496M1611.5 493V496M1612.5 493V496M1613.5 493V496M1614.5 493V496M1615.5 493V496M1616.5 493V496M1617.5 493V496M1618.5 493V496M1619.5 493V496M1620.5 493V496M1621.5 493V496M1622.5 493V496M1623.5 493V496M1624.5 493V496M1625.5 493V496M1626.5 493V496M1627.5 493V496M1628.5 493V496M1629.5 493V496M1630.5 493V496M1631.5 493V496M1632.5 493V496M1633.5 493V496M1634.5 493V496M1635.5 493V496M1636.5 493V496M1637.5 493V496M1638.5 493V496M1639.5 493V496M1640.5 493V496M1641.5 493V496M1642.5 493V496M1643.5 493V496M1644.5 493V496M1645.5 493V496M1646.5 493V496M1647.5 493V496M1648.5 493V496M1649.5 493V496M1650.5 493V496M1651.5 493V496M1652.5 493V496M1653.5 493V496M1654.5 493V496M1655.5 493V496M1656.5 493V496M1657.5 493V496M1658.5 493V496M1659.5 493V496M1660.5 493V496M1661.5 493V496M1662.5 493V496M1663.5 493V496M1664.5 493V496M1665.5 493V496M1666.5 493V496M1667.5 493V496M1668.5 493V496M1669.5 493V496M1670.5 493V496M1671.5 493V496M1672.5 493V496M1673.5 493V496M1674.5 493V496M1675.5 493V496M1676.5 493V496M1677.5 493V496M1678.5 493V496M1679.5 493V496M1680.5 493V496M1681.5 493V496M1682.5 493V496M1683.5 493V496M1684.5 493V496M1685.5 493V496M1686.5 493V496M1687.5 493V496M1688.5 493V496M1689.5 493V496M1690.5 493V496M1691.5 493V496M1692.5 493V496M1693.5 493V496M1694.5 493V496M1695.5 493V496M1696.5 493V496M1697.5 493V496M1698.5 493V496M1699.5 493V496M1700.5 493V496M1701.5 493V496M1702.5 493V496M1703.5 493V496M1704.5 493V496M1705.5 493V496M1706.5 493V496M1707.5 493V496M1708.5 493V496M1709.5 493V496M1710.5 493V496M1711.5 493V496M1712.5 493V496M1713.5 493V496M1714.5 493V496M1715.5 493V496M1716.5 493V496M1717.5 493V496M1718.5 493V496M1719.5 493V496M1720.5 493V496M1721.5 493V496M1722.5 493V496M1723.5 493V496M1724.5 493V496M1725.5 493V496M1726.5 493V496M1727.5 493V496M1728.5 493V496M1729.5 493V496M1730.5 493V496M1731.5 493V496M1732.5 493V496M1733.5 493V496M1734.5 493V496M1735.5 493V496M1736.5 493V496M1737.5 493V496M1738.5 493V496M1739.5 493V496M1740.5 493V496M1741.5 493V496M1742.5 493V496M1743.5 493V496M1744.5 493V496M1745.5 493V496M1746.5 493V496M1747.5 493V496M1748.5 493V496M1749.5 493V496M1750.5 493V496M1751.5 493V496M1752.5 493V496M1753.5 493V496M1754.5 493V496M1755.5 493V496M1756.5 493V496M1757.5 493V496M1758.5 493V496M1759.5 493V496M1760.5 493V496M1761.5 493V496M1762.5 493V496M1763.5 493V496M1764.5 493V496M1765.5 493V496M1766.5 493V496M1767.5 493V496M1768.5 493V496M1769.5 493V496M1770.5 493V496M1771.5 493V496M1772.5 493V496M1773.5 493V496M1774.5 493V496M1775.5 493V496M1776.5 493V496M1777.5 493V496M1778.5 493V496M1779.5 493V496M1780.5 493V496M1781.5 493V496M1782.5 493V496M1783.5 493V496M1784.5 493V496M1785.5 493V496M1786.5 493V496M1787.5 493V496M1788.5 493V496M1789.5 493V496M1790.5 493V496M1791.5 493V496M1792.5 493V496M1793.5 493V496M1794.5 493V496M1795.5 493V496M1796.5 493V496M1797.5 493V496M1798.5 493V496M1799.5 493V496M1800.5 493V496M1801.5 493V496M1802.5 493V496M1803.5 493V496M1804.5 493V496M1805.5 493V496M1806.5 493V496M1807.5 493V496M1808.5 493V496M1809.5 493V496M1810.5 493V496M1811.5 493V496M1812.5 493V496M1813.5 493V496M1814.5 493V496M1815.5 493V496M1816.5 493V496M1817.5 493V496M1818.5 493V496M1819.5 493V496M1820.5 493V496M1821.5 493V496M1822.5 493V496M1823.5 493V496M1824.5 493V496M1825.5 493V496M1826.5 493V496M1827.5 493V496M1828.5 493V496M1829.5 493V496M1830.5 493V496M1831.5 493V496M1832.5 493V496M1833.5 493V496M1834.5 493V496M1835.5 493V496M1836.5 493V496M1837.5 493V496M1838.5 493V496M1839.5 493V496M1840.5 493V496M1841.5 493V496M1842.5 493V496M1843.5 493V496M1844.5 493V496M1845.5 493V496M1846.5 493V496M1847.5 493V496M1848.5 493V496M1849.5 493V496M1850.5 493V496M1851.5 493V496M1852.5 493V496M1853.5 493V496M1854.5 493V496M1855.5 493V496M1856.5 493V496M1857.5 493V496M1858.5 493V496M1859.5 493V496M1860.5 493V496M1861.5 493V496M1862.5 493V496M1863.5 493V496M1864.5 493V496M1865.5 493V496M1866.5 493V496M1867.5 493V496M1868.5 493V496M1869.5 493V496M1870.5 493V496M1871.5 493V496M1872.5 493V496M1873.5 493V496M1874.5 493V496M1875.5 493V496M1876.5 493V496M1877.5 493V496M1878.5 493V496M1879.5 493V496M1880.5 493V496M1881.5 493V496M1882.5 493V496M1883.5 493V496M1884.5 493V496M1885.5 493V496M1886.5 493V496M1887.5 493V496M1888.5 493V496M1889.5 493V496M1890.5 493V496M1891.5 493V496M1892.5 493V496M1893.5 493V496M1894.5 493V496M1895.5 493V496M1896.5 493V496M1897.5 493V496M1898.5 493V496M1899.5 493V496M1900.5 493V496M1901.5 493V496M1902.5 493V496M1903.5 493V496M1904.5 493V496M1905.5 493V496M980.5 493V495M981.5 493V495M982.5 493V495M983.5 493V495M984.5 493V495M985.5 493V495M986.5 493V495M987.5 493V495M988.5 493V495M989.5 493V495M990.5 493V495M991.5 493V495M992.5 493V495M993.5 493V495M994.5 493V495M995.5 493V495M996.5 493V495M997.5 493V495M998.5 493V495M999.5 493V495M1000.5 493V495M1001.5 493V495M1002.5 493V495M1003.5 493V495M1004.5 493V495M1005.5 493V495M1006.5 493V495M1007.5 493V495M1008.5 493V495M1009.5 493V495M1010.5 493V495M1011.5 493V495M1012.5 493V495M1013.5 493V495M1014.5 493V495M1015.5 493V495M1016.5 493V495M1017.5 493V495M1018.5 493V495M1019.5 493V495M1020.5 493V495M1021.5 493V495M1022.5 493V495M1023.5 493V495M1024.5 493V495M1025.5 493V495M1026.5 493V495M1027.5 493V495M1028.5 493V495M1029.5 493V495M1030.5 493V495M1031.5 493V495M1032.5 493V495M1033.5 493V495M1034.5 493V495M1035.5 493V495M1036.5 493V495M1037.5 493V495M1038.5 493V495M1039.5 493V495M1040.5 493V495M1041.5 493V495M1042.5 493V495M1043.5 493V495M1044.5 493V495M1045.5 493V495M1046.5 493V495M1047.5 493V495M1048.5 493V495M1049.5 493V495M1050.5 493V495M1051.5 493V495M1052.5 493V495M1053.5 493V495M1054.5 493V495M1055.5 493V495M1056.5 493V495M1057.5 493V495M1058.5 493V495M1059.5 493V495M1060.5 493V495M1061.5 493V495M1062.5 493V495M1063.5 493V495M1064.5 493V495M1065.5 493V495M1066.5 493V495M1067.5 493V495M1068.5 493V495M1069.5 493V495M1070.5 493V495M1071.5 493V495M1072.5 493V495M1073.5 493V495M1074.5 493V495M1075.5 493V495M1076.5 493V495M1077.5 493V495M1078.5 493V495M1079.5 493V495M1080.5 493V495M1081.5 493V495M1082.5 493V495M1083.5 493V495M1084.5 493V495M1085.5 493V495M1086.5 493V495M1087.5 493V495M1088.5 493V495M1089.5 493V495M1090.5 493V495M1091.5 493V495M1092.5 493V495M1093.5 493V495M1094.5 493V495M1095.5 493V495M1096.5 493V495M1097.5 493V495M1098.5 493V495M1099.5 493V495M1100.5 493V495M1101.5 493V495M1102.5 493V495M1103.5 493V495M1104.5 493V495M1105.5 493V495M1106.5 493V495M1107.5 493V495M1108.5 493V495M1109.5 493V495M1110.5 493V495M1111.5 493V495M1112.5 493V495M1113.5 493V495M1114.5 493V495M1115.5 493V495M1116.5 493V495M1117.5 493V495M1118.5 493V495M1119.5 493V495M1120.5 493V495M1121.5 493V495M1122.5 493V495M1123.5 493V495M1124.5 493V495M1125.5 493V495M1126.5 493V495M1127.5 493V495M1128.5 493V495M1129.5 493V495M1130.5 493V495M1131.5 493V495M1132.5 493V495M1133.5 493V495M1134.5 493V495M1135.5 493V495M1136.5 493V495M1137.5 493V495M1138.5 493V495M1139.5 493V495M1140.5 493V495M1141.5 493V495M1142.5 493V495M1143.5 493V495M1144.5 493V495M1145.5 493V495M1146.5 493V495M1147.5 493V495M1148.5 493V495M1149.5 493V495M1150.5 493V495M1151.5 493V495M1152.5 493V495M1153.5 493V495M1154.5 493V495M1155.5 493V495M1156.5 493V495M1157.5 493V495M1158.5 493V495M1159.5 493V495M1160.5 493V495M1161.5 493V495M1162.5 493V495M1163.5 493V495M1164.5 493V495M1165.5 493V495M1166.5 493V495M1167.5 493V495M1168.5 493V495M1169.5 493V495M1170.5 493V495M1171.5 493V495M1172.5 493V495M1173.5 493V495M1174.5 493V495M1175.5 493V495M1176.5 493V495M1177.5 493V495M1178.5 493V495M1179.5 493V495M1180.5 493V495M1181.5 493V495M1182.5 493V495M1183.5 493V495M1184.5 493V495M1185.5 493V495M1186.5 493V495M1187.5 493V495M1188.5 493V495M1189.5 493V495M1190.5 493V495M1191.5 493V495M1192.5 493V495M1193.5 493V495M1194.5 493V495M1195.5 493V495M1196.5 493V495M1197.5 493V495M1198.5 493V495M1199.5 493V495M1200.5 493V495M1201.5 493V495M1202.5 493V495M1203.5 493V495M1204.5 493V495M1205.5 493V495M1206.5 493V495M1207.5 493V495M1208.5 493V495M1209.5 493V495M1210.5 493V495M1211.5 493V495M1212.5 493V495M1213.5 493V495M1214.5 493V495M1215.5 493V495M1216.5 493V495M1217.5 493V495M1218.5 493V495M1219.5 493V495M1220.5 493V495M1221.5 493V495M1222.5 493V495M1223.5 493V495M1224.5 493V495M1225.5 493V495M1226.5 493V495M1227.5 493V495M1228.5 493V495M1229.5 493V495M1230.5 493V495M1231.5 493V495M1232.5 493V495M1233.5 493V495M1234.5 493V495M1235.5 493V495M1236.5 493V495M1237.5 493V495M1238.5 493V495M1239.5 493V495M1240.5 493V495M1241.5 493V495M1242.5 493V495M1243.5 493V495M1244.5 493V495M1245.5 493V495M1246.5 493V495M1247.5 493V495M1248.5 493V495M1249.5 493V495M1250.5 493V495M1251.5 493V495M1252.5 493V495M1253.5 493V495M1254.5 493V495M1255.5 493V495M1256.5 493V495M1257.5 493V495M1258.5 493V495M1259.5 493V495M1260.5 493V495M1261.5 493V495M1262.5 493V495M1263.5 493V495M1264.5 493V495M1265.5 493V495M1266.5 493V495M1267.5 493V495M1268.5 493V495M1269.5 493V495M1270.5 493V495M1271.5 493V495M1272.5 493V495M1273.5 493V495M1274.5 493V495M1275.5 493V495M1276.5 493V495M1277.5 493V495M1278.5 493V495M1279.5 493V495M1280.5 493V495M1281.5 493V495M1282.5 493V495M1283.5 493V495M1284.5 493V495M1285.5 493V495M1286.5 493V495M1287.5 493V495M1288.5 493V495M1289.5 493V495M1290.5 493V495M1291.5 493V495M1292.5 493V495M1293.5 493V495M1294.5 493V495M1295.5 493V495M1296.5 493V495M1297.5 493V495M1298.5 493V495M1299.5 493V495M1300.5 493V495M1301.5 493V495M1302.5 493V495M1303.5 493V495M1304.5 493V495M1305.5 493V495M1306.5 493V495M1307.5 493V495M1308.5 493V495M1309.5 493V495M1310.5 493V495M1311.5 493V495M1312.5 493V495M1313.5 493V495M1314.5 493V495M1315.5 493V495M1316.5 493V495M1317.5 493V495M1318.5 493V495M1319.5 493V495M1320.5 493V495M1321.5 493V495M1322.5 493V495M1323.5 493V495M1324.5 493V495M1325.5 493V495M1326.5 493V495M1327.5 493V495M1328.5 493V495M1329.5 493V495M1330.5 493V495M1331.5 493V495M1332.5 493V495M1333.5 493V495M1334.5 493V495M1335.5 493V495M1336.5 493V495M1337.5 493V495M1338.5 493V495M1339.5 493V495M1340.5 493V495M1341.5 493V495M1342.5 493V495M1343.5 493V495M1344.5 493V495M1345.5 493V495M1346.5 493V495M1347.5 493V495M1348.5 493V495M1349.5 493V495M1350.5 493V495M1351.5 493V495M1352.5 493V495M1353.5 493V495M1354.5 493V495M1355.5 493V495M1356.5 493V495M1357.5 493V495M1358.5 493V495M1359.5 493V495M1360.5 493V495M1361.5 493V495M1362.5 493V495M1363.5 493V495M1364.5 493V495M1365.5 493V495M1366.5 493V495M1367.5 493V495M1368.5 493V495M1369.5 493V495M1370.5 493V495M1371.5 493V495M1372.5 493V495M1373.5 493V495M1374.5 493V495M1375.5 493V495M1376.5 493V495M1377.5 493V495M1378.5 493V495M1379.5 493V495M1380.5 493V495M1381.5 493V495M1382.5 493V495M1383.5 493V495M1384.5 493V495M1385.5 493V495M1386.5 493V495M1387.5 493V495M1388.5 493V495M1389.5 493V495M1390.5 493V495M1391.5 493V495M1392.5 493V495M1393.5 493V495M1394.5 493V495M1395.5 493V495M1396.5 493V495M1397.5 493V495M1398.5 493V495M1399.5 493V495M1400.5 493V495M1401.5 493V495M1402.5 493V495M1403.5 493V495M1404.5 493V495M1405.5 493V495M1406.5 493V495M1407.5 493V495M1408.5 493V495M1409.5 493V495M1410.5 493V495M1411.5 493V495M1412.5 493V495M1413.5 493V495M1414.5 493V495M1415.5 493V495M1416.5 493V495M1417.5 493V495M1418.5 493V495M1419.5 493V495M1420.5 493V495M1421.5 493V495M1422.5 493V495M1423.5 493V495M1424.5 493V495M1425.5 493V495M1426.5 493V495M1427.5 493V495M1428.5 493V495M1429.5 493V495M1430.5 493V495M1431.5 493V495M1432.5 493V495M1433.5 493V495M1434.5 493V495M1435.5 493V495M1436.5 493V495M1437.5 493V495M1438.5 493V495M1439.5 493V495M1440.5 493V495M1441.5 493V495M1442.5 493V495M1443.5 493V495M1444.5 493V495M1445.5 493V495M1446.5 493V495M1447.5 493V495M1448.5 493V495M1449.5 493V495M1450.5 493V495M1451.5 493V495M1452.5 493V495M1453.5 493V495M1454.5 493V495M1455.5 493V495M1456.5 493V495M1457.5 493V495M1458.5 493V495M1459.5 493V495M1460.5 493V495M1461.5 493V495M1462.5 493V495M1463.5 493V495M1464.5 493V495M1465.5 493V495M1466.5 493V495M1467.5 493V495M1468.5 493V495M1469.5 493V495M1470.5 493V495M1471.5 493V495M1472.5 493V495M1473.5 493V495M1474.5 493V495M1475.5 493V495M1476.5 493V495M1477.5 493V495M1478.5 493V495M1479.5 493V495M1480.5 493V495M1481.5 493V495M1482.5 493V495M1483.5 493V495M1484.5 493V495M1485.5 493V495M1486.5 493V495M1487.5 493V495M1488.5 493V495M1489.5 493V495M1490.5 493V495M1491.5 493V495M1492.5 493V495M1493.5 493V495M1494.5 493V495M1495.5 493V495M1496.5 493V495M1497.5 493V495M1498.5 493V495M1499.5 493V495M1500.5 493V495M1501.5 493V495M1502.5 493V495M1503.5 493V495M1504.5 493V495M1505.5 493V495M1506.5 493V495M1507.5 493V495M1508.5 493V495M1509.5 493V495M1510.5 493V495M1511.5 493V495M1512.5 493V495M1513.5 493V495M1514.5 493V495M1515.5 493V495M1516.5 493V495M1517.5 493V495M1518.5 493V495M1519.5 493V495M1520.5 493V495M1521.5 493V495M1522.5 493V495M1523.5 493V495M1524.5 493V495M1525.5 493V495M1526.5 493V495M1527.5 493V495M1528.5 493V495M1529.5 493V495M1530.5 493V495M1531.5 493V495M1532.5 493V495M1533.5 493V495M1534.5 493V495M1535.5 493V495M1536.5 493V495M1537.5 493V495M1538.5 493V495M1539.5 493V495M1540.5 493V495M1541.5 493V495M1542.5 493V495M1543.5 493V495M1544.5 493V495M1545.5 493V495M1546.5 493V495M1547.5 493V495M1548.5 493V495M1549.5 493V495M1550.5 493V495M1551.5 493V495M1552.5 493V495M1553.5 493V495M1554.5 493V495M1555.5 493V495M1556.5 493V495M1557.5 493V495M1558.5 493V495M1559.5 493V495M1560.5 493V495M1561.5 493V495M1562.5 493V495" stroke="#b4ac00" stroke-width="1" fill="none" /><path d="M88.5 377V502M94.5 379V500M100.5 379V502M107.5 378V501M113.5 378V501M119.5 378V503M125.5 379V502M132.5 377V503M138.5 378V502M144.5 377V503M145.5 377V494M150.5 377V500M157.5 378V502M163.5 378V501M169.5 379V500M175.5 378V500M182.5 378V502M188.5 377V501M189.5 377V494M194.5 379V503M200.5 378V503M207.5 377V502M213.5 379V500M219.5 378V503M225.5 378V501M232.5 377V500M238.5 378V501M244.5 378V502M250.5 379V503M251.5 409V494M257.5 379V502M263.5 378V500M269.5 378V502M275.5 378V501M282.5 378V503M283.5 383V494M288.5 378V502M294.5 378V500M300.5 379V500M307.5 378V500M313.5 378V501M319.5 378V502M320.5 383V494M325.5 377V503M332.5 378V501M338.5 378V503M344.5 378V502M350.5 378V501M357.5 378V501M363.5 377V501M369.5 378V502M375.5 378V502M382.5 378V500M388.5 378V503M394.5 378V501M400.5 379V502M407.5 378V502M413.5 378V500M419.5 379V502M425.5 378V503M432.5 378V502M438.5 379V503M444.5 377V500M445.5 377V494M450.5 378V502M457.5 378V502M463.5 379V501M469.5 378V502M475.5 379V503M482.5 377V500M488.5 378V503M494.5 378V502M500.5 377V502M501.5 379V494M507.5 378V500M513.5 378V502M514.5 383V494M519.5 378V502M525.5 377V502M532.5 379V502M538.5 378V503M544.5 378V502M550.5 377V502M557.5 378V503M558.5 408V494M563.5 378V501M569.5 379V501M575.5 379V502M582.5 377V501M588.5 378V503M594.5 378V501M600.5 378V503M607.5 378V502M613.5 377V503M619.5 378V503M625.5 379V501M632.5 378V501M638.5 378V502M639.5 380V494M644.5 378V502M650.5 377V503M657.5 378V502M663.5 377V502M669.5 378V503M675.5 378V500M682.5 378V500M688.5 379V502M694.5 378V502M700.5 377V501M707.5 378V502M713.5 378V502M719.5 378V502M725.5 378V502M732.5 379V502M738.5 378V502M744.5 377V503M750.5 379V502M757.5 377V502M763.5 378V502M769.5 379V502M775.5 378V501M782.5 377V501M788.5 378V503M794.5 379V502M800.5 378V502M807.5 378V500M813.5 377V503M819.5 377V502M825.5 377V502M832.5 378V503M838.5 378V502M844.5 379V503M850.5 379V501M857.5 378V502M863.5 378V502M869.5 378V502M875.5 378V502M882.5 378V502M888.5 378V500M894.5 378V502M900.5 378V501M907.5 379V502M913.5 378V503M919.5 378V502M925.5 379V501M932.5 379V500M938.5 378V501M944.5 377V502M950.5 377V503M957.5 377V503M963.5 378V501M969.5 379V502M975.5 379V501M982.5 378V513M988.5 378V511M994.5 377V512M1001.5 377V512M1008.5 378V512M1014.5 378V512M1020.5 378V512M1027.5 378V512M1033.5 379V511M1039.5 378V512M1040.5 408V494M1045.5 378V512M1052.5 377V511M1058.5 379V513M1065.5 378V512M1072.5 377V512M1078.5 378V510M1085.5 377V512M1091.5 378V511M1098.5 378V511M1105.5 378V512M1112.5 378V510M1119.5 377V511M1120.5 382V494M1125.5 378V511M1132.5 378V512M1139.5 377V511M1147.5 377V513M1154.5 378V511M1161.5 378V511M1168.5 377V512M1176.5 378V512M1183.5 378V511M1191.5 378V512M1198.5 379V511M1207.5 378V512M1213.5 379V511M1220.5 379V512M1229.5 379V510M1230.5 379V494M1237.5 378V512M1243.5 377V512M1250.5 378V510M1258.5 378V510M1265.5 379V512M1272.5 379V511M1279.5 378V513M1289.5 379V511M1299.5 378V512M1310.5 379V512M1324.5 378V513M1335.5 378V511M1343.5 378V512M1358.5 377V513M1373.5 378V510M1383.5 378V510M1398.5 377V512M1399.5 382V494M1413.5 378V512M1433.5 378V511M1452.5 378V512M1472.5 378V512M1491.5 377V510M1511.5 378V511M1552.5 379V513" stroke="#5a5400" stroke-width="1" fill="none" /><path d="M89.5 753V792M90.5 751V790M91.5 761V791M92.5 767V792M93.5 768V794M94.5 771V793M95.5 778V794M96.5 758V792M97.5 763V792M98.5 770V791M99.5 776V795M100.5 776V794M101.5 776V795M102.5 755V792M103.5 762V791M104.5 763V792M105.5 768V795M106.5 773V795M107.5 772V793M108.5 757V792M109.5 766V792M110.5 772V791M111.5 775V792M112.5 775V794M113.5 776V795M114.5 751V792M115.5 753V791M116.5 763V790M117.5 770V790M118.5 763V795M119.5 772V795M120.5 775V794M121.5 758V790M122.5 772V791M123.5 763V791M124.5 771V793M125.5 774V794M126.5 779V795M127.5 755V792M128.5 758V791M129.5 762V792M130.5 766V793M131.5 770V795M132.5 773V795M133.5 757V792M134.5 766V792M135.5 769V792M136.5 771V791M137.5 773V795M138.5 777V795M139.5 750V792M140.5 750V791M141.5 760V792M142.5 758V791M143.5 770V794M144.5 770V795M145.5 776V795M146.5 760V791M147.5 764V791M148.5 769V791M149.5 774V794M150.5 774V793M151.5 776V795M152.5 750V792M153.5 761V792M154.5 764V791M155.5 770V793M156.5 771V794M157.5 777V794M158.5 760V790M159.5 764V791M160.5 769V792M161.5 772V791M162.5 776V794M163.5 776V794M164.5 749V792M165.5 751V790M166.5 755V790M167.5 764V792M168.5 759V793M169.5 770V794M170.5 775V794M171.5 758V791M172.5 765V790M173.5 771V791M174.5 774V793M175.5 775V794M176.5 778V793M177.5 753V791M178.5 760V791M179.5 763V792M180.5 766V794M181.5 764V793M182.5 777V793M183.5 755V791M184.5 765V792M185.5 769V792M186.5 772V790M187.5 775V795M188.5 775V795M189.5 749V791M190.5 750V792M191.5 762V791M192.5 767V791M193.5 770V793M194.5 771V794M195.5 777V794M196.5 761V792M197.5 764V792M198.5 776V790M199.5 776V794M200.5 775V793M201.5 778V795M202.5 750V791M203.5 758V791M204.5 762V790M205.5 766V795M206.5 770V794M207.5 774V794M208.5 755V790M209.5 768V791M210.5 771V792M211.5 775V790M212.5 775V793M213.5 775V795M214.5 749V791M215.5 750V791M216.5 767V791M217.5 768V792M218.5 772V794M219.5 771V795M220.5 775V794M221.5 757V792M222.5 768V792M223.5 771V791M224.5 770V794M225.5 773V795M226.5 779V795M227.5 749V792M228.5 759V792M229.5 763V791M230.5 770V794M231.5 770V793M232.5 773V794M233.5 760V792M234.5 767V791M235.5 770V791M236.5 772V791M237.5 774V794M238.5 772V793M239.5 752V792M240.5 751V792M241.5 759V790M242.5 768V790M243.5 767V795M244.5 773V795M245.5 778V793M246.5 755V792M247.5 762V791M248.5 772V791M249.5 772V795M250.5 771V794M251.5 775V794M252.5 753V792M253.5 764V792M254.5 765V791M255.5 767V795M256.5 771V793M257.5 777V795M258.5 760V791M259.5 767V790M260.5 772V792M261.5 771V791M262.5 773V795M263.5 777V795M264.5 752V792M265.5 752V791M266.5 761V791M267.5 769V792M268.5 769V795M269.5 775V793M270.5 774V794M271.5 758V791M272.5 760V791M273.5 771V791M274.5 771V793M275.5 776V795M276.5 776V795M277.5 754V792M278.5 761V792M279.5 769V791M280.5 766V793M281.5 770V794M282.5 773V795M283.5 759V791M284.5 767V792M285.5 770V791M286.5 771V792M287.5 772V795M288.5 776V794M289.5 749V791M290.5 755V791M291.5 765V792M292.5 770V790M293.5 771V794M294.5 775V794M295.5 777V794M296.5 760V792M297.5 772V792M298.5 773V792M299.5 776V794M300.5 775V795M301.5 776V794M302.5 749V790M303.5 757V790M304.5 768V791M305.5 769V794M306.5 771V793M307.5 773V794M308.5 760V791M309.5 772V791M310.5 770V791M311.5 775V791M312.5 777V795M313.5 774V793M314.5 754V790M315.5 754V790M316.5 763V790M317.5 766V791M318.5 772V795M319.5 775V795M320.5 776V793M321.5 756V791M322.5 762V792M323.5 774V790M324.5 775V794M325.5 776V793M326.5 774V794M327.5 752V792M328.5 755V792M329.5 766V791M330.5 769V794M331.5 772V795M332.5 777V795M333.5 754V791M334.5 764V791M335.5 769V791M336.5 774V791M337.5 772V794M338.5 774V793M339.5 750V791M340.5 750V791M341.5 760V792M342.5 768V791M343.5 768V793M344.5 771V795M345.5 775V795M346.5 761V791M347.5 767V792M348.5 768V790M349.5 770V794M350.5 773V795M351.5 779V794M352.5 750V790M353.5 760V790M354.5 766V790M355.5 767V795M356.5 772V793M357.5 775V795M358.5 760V792M359.5 769V791M360.5 774V792M361.5 773V790M362.5 772V793M363.5 777V794M364.5 753V792M365.5 751V791M366.5 761V790M367.5 767V791M368.5 768V795M369.5 772V795M370.5 775V794M371.5 756V790M372.5 756V791M373.5 775V792M374.5 774V793M375.5 778V795M376.5 777V795M377.5 750V792M378.5 756V791M379.5 766V791M380.5 767V795M381.5 772V794M382.5 767V795M383.5 761V792M384.5 766V790M385.5 769V792M386.5 770V790M387.5 773V794M388.5 772V795M389.5 753V791M390.5 753V791M391.5 761V792M392.5 761V790M393.5 769V795M394.5 776V794M395.5 779V795M396.5 757V792M397.5 771V792M398.5 770V791M399.5 775V795M400.5 774V794M401.5 774V795M402.5 755V792M403.5 759V791M404.5 761V790M405.5 768V794M406.5 772V795M407.5 775V794M408.5 759V791M409.5 761V791M410.5 770V791M411.5 770V792M412.5 770V793M413.5 772V794M414.5 752V791M415.5 752V790M416.5 762V790M417.5 765V790M418.5 771V795M419.5 772V794M420.5 779V795M421.5 757V792M422.5 775V790M423.5 771V792M424.5 776V795M425.5 775V794M426.5 779V794M427.5 751V791M428.5 760V791M429.5 764V791M430.5 763V795M431.5 770V795M432.5 774V795M433.5 758V791M434.5 766V792M435.5 772V792M436.5 771V792M437.5 773V794M438.5 774V795M439.5 753V791M440.5 752V791M441.5 765V792M442.5 770V792M443.5 773V794M444.5 776V794M445.5 776V794M446.5 761V791M447.5 772V792M448.5 772V792M449.5 776V794M450.5 773V793M451.5 776V795M452.5 749V791M453.5 762V792M454.5 767V792M455.5 772V794M456.5 771V793M457.5 775V794M458.5 760V792M459.5 771V791M460.5 773V791M461.5 775V792M462.5 777V795M463.5 775V793M464.5 750V792M465.5 750V791M466.5 760V792M467.5 768V790M468.5 769V794M469.5 775V793M470.5 776V795M471.5 760V792M472.5 763V790M473.5 770V791M474.5 774V793M475.5 771V795M476.5 773V793M477.5 755V790M478.5 763V791M479.5 764V790M480.5 770V795M481.5 774V794M482.5 773V794M483.5 756V792M484.5 762V792M485.5 769V792M486.5 769V791M487.5 775V794M488.5 775V795M489.5 752V791M490.5 753V791M491.5 760V791M492.5 767V791M493.5 769V794M494.5 772V795M495.5 778V794M496.5 760V790M497.5 770V792M498.5 771V792M499.5 772V794M500.5 775V794M501.5 778V793M502.5 749V790M503.5 761V792M504.5 765V790M505.5 769V795M506.5 771V795M507.5 774V793M508.5 760V792M509.5 766V790M510.5 774V792M511.5 773V790M512.5 777V794M513.5 778V794M514.5 753V792M515.5 753V792M516.5 767V792M517.5 766V792M518.5 771V794M519.5 773V793M520.5 777V795M521.5 761V791M522.5 766V792M523.5 773V791M524.5 775V794M525.5 776V795M526.5 775V794M527.5 754V792M528.5 758V792M529.5 767V791M530.5 769V793M531.5 764V793M532.5 768V793M533.5 760V792M534.5 765V790M535.5 767V790M536.5 769V791M537.5 775V794M538.5 775V794M539.5 752V790M540.5 753V792M541.5 761V792M542.5 769V791M543.5 767V795M544.5 773V795M545.5 779V793M546.5 757V790M547.5 762V792M548.5 770V791M549.5 772V793M550.5 773V793M551.5 777V795M552.5 751V792M553.5 762V791M554.5 765V791M555.5 761V793M556.5 773V794M557.5 774V793M558.5 761V790M559.5 765V792M560.5 768V791M561.5 772V792M562.5 771V794M563.5 767V794M564.5 750V792M565.5 749V792M566.5 760V792M567.5 766V790M568.5 771V795M569.5 773V794M570.5 777V793M571.5 758V790M572.5 768V790M573.5 770V792M574.5 774V794M575.5 775V793M576.5 777V795M577.5 752V791M578.5 764V792M579.5 767V792M580.5 768V795M581.5 771V795M582.5 773V794M583.5 758V791M584.5 763V792M585.5 768V792M586.5 772V790M587.5 770V795M588.5 775V794M589.5 750V790M590.5 751V790M591.5 758V791M592.5 770V792M593.5 772V793M594.5 773V795M595.5 773V794M596.5 761V792M597.5 770V792M598.5 774V790M599.5 771V794M600.5 773V795M601.5 778V795M602.5 755V792M603.5 764V791M604.5 763V791M605.5 767V793M606.5 770V794M607.5 774V794M608.5 757V790M609.5 767V791M610.5 768V791M611.5 770V792M612.5 771V795M613.5 775V793M614.5 753V790M615.5 753V792M616.5 758V790M617.5 768V791M618.5 771V793M619.5 771V794M620.5 776V793M621.5 759V791M622.5 768V790M623.5 770V791M624.5 772V795M625.5 776V794M626.5 775V795M627.5 752V791M628.5 763V790M629.5 768V791M630.5 769V793M631.5 769V794M632.5 769V794M633.5 758V792M634.5 766V790M635.5 767V792M636.5 768V792M637.5 773V795M638.5 774V795M639.5 755V792M640.5 754V791M641.5 763V790M642.5 767V792M643.5 770V794M644.5 776V793M645.5 779V793M646.5 758V791M647.5 761V791M648.5 769V790M649.5 770V795M650.5 772V794M651.5 775V795M652.5 754V791M653.5 765V792M654.5 764V792M655.5 769V795M656.5 771V793M657.5 773V795M658.5 755V791M659.5 762V790M660.5 773V791M661.5 772V791M662.5 775V794M663.5 775V794M664.5 751V792M665.5 751V790M666.5 763V792M667.5 766V792M668.5 772V794M669.5 771V794M670.5 779V795M671.5 761V792M672.5 767V790M673.5 766V792M674.5 768V795M675.5 777V793M676.5 774V795M677.5 751V791M678.5 761V792M679.5 763V792M680.5 770V795M681.5 774V793M682.5 773V794M683.5 757V791M684.5 762V791M685.5 772V790M686.5 770V790M687.5 773V793M688.5 777V795M689.5 753V791M690.5 753V792M691.5 760V792M692.5 769V791M693.5 770V794M694.5 772V794M695.5 779V795M696.5 757V791M697.5 770V791M698.5 773V791M699.5 776V794M700.5 775V795M701.5 779V795M702.5 749V792M703.5 758V792M704.5 763V791M705.5 767V794M706.5 774V794M707.5 776V793M708.5 756V791M709.5 756V792M710.5 771V791M711.5 772V791M712.5 773V794M713.5 776V795M714.5 756V791M715.5 755V792M716.5 762V791M717.5 768V790M718.5 769V794M719.5 773V794M720.5 775V795M721.5 759V792M722.5 763V792M723.5 766V791M724.5 768V794M725.5 771V793M726.5 779V794M727.5 752V791M728.5 755V791M729.5 764V790M730.5 771V795M731.5 772V794M732.5 776V793M733.5 758V792M734.5 765V792M735.5 761V791M736.5 771V791M737.5 770V795M738.5 773V795M739.5 753V791M740.5 754V791M741.5 761V791M742.5 768V791M743.5 773V794M744.5 774V793M745.5 775V795M746.5 755V792M747.5 774V790M748.5 776V792M749.5 772V795M750.5 774V794M751.5 778V794M752.5 756V791M753.5 762V790M754.5 764V792M755.5 770V795M756.5 772V793M757.5 774V794M758.5 757V790M759.5 765V791M760.5 770V790M761.5 770V792M762.5 773V795M763.5 777V795M764.5 753V792M765.5 755V791M766.5 762V792M767.5 768V791M768.5 771V793M769.5 772V795M770.5 771V794M771.5 757V791M772.5 772V792M773.5 771V790M774.5 774V794M775.5 777V795M776.5 776V794M777.5 755V792M778.5 764V792M779.5 769V792M780.5 767V795M781.5 774V793M782.5 775V795M783.5 757V792M784.5 766V790M785.5 771V790M786.5 769V791M787.5 772V794M788.5 774V795M789.5 749V792M790.5 754V791M791.5 760V792M792.5 765V792M793.5 769V794M794.5 772V794M795.5 774V795M796.5 757V790M797.5 772V791M798.5 773V791M799.5 773V795M800.5 772V794M801.5 779V794M802.5 749V790M803.5 757V791M804.5 769V792M805.5 771V795M806.5 772V794M807.5 769V793M808.5 757V792M809.5 772V791M810.5 772V791M811.5 776V791M812.5 776V793M813.5 775V794M814.5 750V790M815.5 753V792M816.5 761V792M817.5 765V791M818.5 773V795M819.5 773V793M820.5 775V795M821.5 758V792M822.5 775V791M823.5 776V790M824.5 777V795M825.5 773V795M826.5 775V795M827.5 753V792M828.5 762V792M829.5 767V791M830.5 771V794M831.5 772V795M832.5 775V795M833.5 760V791M834.5 770V790M835.5 761V791M836.5 775V791M837.5 775V795M838.5 775V794M839.5 749V790M840.5 749V790M841.5 756V790M842.5 767V792M843.5 773V794M844.5 770V795M845.5 774V794M846.5 757V792M847.5 766V791M848.5 770V791M849.5 772V795M850.5 777V795M851.5 776V793M852.5 750V790M853.5 764V791M854.5 764V792M855.5 769V793M856.5 774V795M857.5 772V795M858.5 762V790M859.5 767V792M860.5 771V792M861.5 771V792M862.5 774V793M863.5 777V794M864.5 755V792M865.5 756V791M866.5 764V791M867.5 766V791M868.5 770V795M869.5 776V793M870.5 779V794M871.5 753V792M872.5 763V792M873.5 775V791M874.5 772V795M875.5 774V794M876.5 775V794M877.5 752V791M878.5 760V791M879.5 764V791M880.5 768V793M881.5 772V793M882.5 776V795M883.5 760V790M884.5 767V792M885.5 768V791M886.5 770V792M887.5 775V794M888.5 772V794M889.5 754V792M890.5 755V791M891.5 762V792M892.5 767V792M893.5 770V795M894.5 773V794M895.5 776V794M896.5 760V790M897.5 765V790M898.5 770V792M899.5 773V795M900.5 774V794M901.5 776V793M902.5 753V792M903.5 758V792M904.5 768V790M905.5 772V795M906.5 770V793M907.5 773V794M908.5 756V790M909.5 768V791M910.5 768V790M911.5 775V792M912.5 775V794M913.5 776V795M914.5 750V790M915.5 750V792M916.5 755V791M917.5 766V792M918.5 768V793M919.5 771V795M920.5 775V794M921.5 758V791M922.5 765V791M923.5 774V792M924.5 769V794M925.5 776V794M926.5 775V794M927.5 751V790M928.5 764V792M929.5 766V790M930.5 765V795M931.5 771V794M932.5 773V795M933.5 750V792M934.5 762V791M935.5 773V790M936.5 774V791M937.5 772V794M938.5 777V795M939.5 751V792M940.5 749V792M941.5 754V792M942.5 764V791M943.5 771V794M944.5 774V795M945.5 779V793M946.5 759V792M947.5 764V791M948.5 771V792M949.5 774V794M950.5 772V794M951.5 775V795M952.5 750V792M953.5 767V791M954.5 767V791M955.5 769V794M956.5 772V794M957.5 774V795M958.5 755V792M959.5 765V790M960.5 773V791M961.5 772V792M962.5 773V794M963.5 773V794M964.5 752V792M965.5 752V791M966.5 767V792M967.5 769V792M968.5 769V794M969.5 776V794M970.5 771V795M971.5 762V791M972.5 771V791M973.5 774V791M974.5 777V795M975.5 775V795M976.5 777V794M977.5 753V791M978.5 760V792M979.5 766V790" stroke="#068a06" stroke-width="1" fill="none" /><path d="M91.5 773V775M92.5 777V779M94.5 781V783M96.5 783V785M97.5 783V785M100.5 787V789M101.5 786V788M104.5 776V778M105.5 776V778M107.5 780V782M109.5 785V787M110.5 786V788M112.5 786V788M113.5 787V789M118.5 777V779M120.5 781V783M121.5 784V786M122.5 785V787M123.5 785V787M124.5 786V788M126.5 786V788M132.5 782V784M134.5 785V787M135.5 786V788M136.5 786V788M137.5 787V789M138.5 786V788M142.5 777V779M143.5 777V779M145.5 781V783M148.5 784V786M149.5 787V789M150.5 785V787M151.5 786V788M152.5 768V770M154.5 776V778M155.5 778V780M156.5 779V781M157.5 782V784M158.5 783V785M159.5 784V786M160.5 785V787M161.5 786V788M163.5 785V787M165.5 771V773M168.5 777V779M169.5 780V782M170.5 782V784M171.5 784V786M172.5 783V785M173.5 784V786M174.5 787V789M175.5 786V788M179.5 775V777M182.5 781V783M183.5 782V784M184.5 784V786M186.5 787V789M187.5 787V789M188.5 785V787M189.5 768V770M195.5 782V784M196.5 784V786M198.5 785V787M199.5 785V787M200.5 786V788M201.5 785V787M203.5 773V775M209.5 783V785M210.5 784V786M211.5 786V788M212.5 787V789M213.5 786V788M214.5 768V770M215.5 770V772M216.5 774V776M220.5 783V785M221.5 783V785M222.5 783V785M223.5 785V787M224.5 786V788M225.5 786V788M226.5 786V788M233.5 783V785M234.5 784V786M236.5 785V787M237.5 785V787M238.5 785V787M239.5 768V770M241.5 774V776M246.5 783V785M247.5 783V785M248.5 785V787M249.5 786V788M250.5 785V787M251.5 786V788M252.5 770V772M253.5 773V775M256.5 778V780M257.5 781V783M258.5 783V785M259.5 784V786M260.5 785V787M262.5 786V788M269.5 780V782M270.5 782V784M271.5 783V785M272.5 785V787M273.5 784V786M274.5 785V787M275.5 785V787M276.5 786V788M277.5 769V771M279.5 775V777M280.5 778V780M281.5 780V782M283.5 783V785M285.5 785V787M286.5 785V787M287.5 785V787M288.5 786V788M289.5 767V769M290.5 771V773M292.5 777V779M294.5 779V781M297.5 785V787M298.5 784V786M299.5 786V788M301.5 786V788M304.5 776V778M306.5 778V780M307.5 780V782M308.5 784V786M309.5 785V787M310.5 786V788M311.5 787V789M312.5 787V789M313.5 787V789M314.5 768V770M319.5 780V782M320.5 781V783M321.5 782V784M322.5 784V786M323.5 785V787M324.5 786V788M325.5 786V788M326.5 786V788M327.5 769V771M329.5 776V778M331.5 779V781M333.5 782V784M334.5 784V786M335.5 785V787M336.5 785V787M337.5 786V788M338.5 785V787M340.5 772V774M342.5 777V779M344.5 780V782M345.5 783V785M347.5 785V787M348.5 786V788M349.5 786V788M350.5 786V788M351.5 786V788M352.5 769V771M356.5 780V782M357.5 780V782M358.5 784V786M359.5 783V785M361.5 785V787M362.5 787V789M363.5 786V788M370.5 783V785M371.5 782V784M372.5 785V787M373.5 786V788M374.5 786V788M375.5 785V787M376.5 786V788M379.5 775V777M380.5 777V779M382.5 780V782M385.5 785V787M386.5 787V789M388.5 786V788M389.5 768V770M390.5 772V774M391.5 773V775M392.5 776V778M394.5 781V783M395.5 781V783M396.5 783V785M399.5 786V788M400.5 786V788M401.5 787V789M402.5 769V771M405.5 776V778M407.5 780V782M409.5 784V786M410.5 786V788M411.5 785V787M412.5 787V789M413.5 786V788M414.5 768V770M415.5 770V772M417.5 777V779M418.5 778V780M419.5 781V783M422.5 785V787M424.5 785V787M425.5 786V788M426.5 786V788M433.5 784V786M434.5 784V786M435.5 784V786M436.5 787V789M437.5 787V789M438.5 786V788M443.5 778V780M444.5 780V782M446.5 784V786M449.5 786V788M450.5 786V788M451.5 785V787M453.5 772V774M456.5 779V781M457.5 780V782M458.5 783V785M460.5 785V787M461.5 785V787M462.5 786V788M463.5 786V788M466.5 775V777M468.5 778V780M469.5 780V782M470.5 782V784M472.5 784V786M474.5 787V789M475.5 785V787M476.5 785V787M479.5 776V778M481.5 779V781M482.5 781V783M483.5 782V784M485.5 784V786M486.5 787V789M487.5 787V789M488.5 786V788M491.5 774V776M495.5 781V783M496.5 782V784M497.5 784V786M498.5 784V786M500.5 786V788M501.5 787V789M505.5 776V778M506.5 780V782M507.5 782V784M508.5 783V785M509.5 783V785M510.5 784V786M512.5 785V787M513.5 786V788M514.5 768V770M516.5 775V777M518.5 778V780M520.5 782V784M521.5 784V786M522.5 785V787M524.5 787V789M525.5 785V787M526.5 785V787M527.5 769V771M529.5 775V777M530.5 778V780M532.5 781V783M533.5 784V786M534.5 784V786M535.5 785V787M536.5 786V788M537.5 785V787M538.5 787V789M540.5 771V773M541.5 775V777M545.5 781V783M547.5 784V786M548.5 785V787M549.5 787V789M550.5 786V788M551.5 787V789M552.5 769V771M556.5 779V781M557.5 780V782M559.5 784V786M560.5 785V787M561.5 787V789M562.5 787V789M565.5 771V773M566.5 774V776M567.5 776V778M568.5 779V781M570.5 781V783M571.5 784V786M572.5 783V785M573.5 785V787M574.5 785V787M576.5 786V788M579.5 776V778M580.5 777V779M582.5 782V784M585.5 786V788M586.5 787V789M587.5 786V788M594.5 780V782M595.5 781V783M596.5 783V785M597.5 784V786M598.5 785V787M600.5 785V787M601.5 786V788M604.5 775V777M605.5 776V778M607.5 781V783M608.5 784V786M610.5 785V787M611.5 786V788M612.5 786V788M613.5 787V789M616.5 774V776M621.5 783V785M622.5 784V786M623.5 786V788M624.5 787V789M625.5 786V788M626.5 786V788M630.5 778V780M631.5 779V781M632.5 781V783M633.5 782V784M635.5 784V786M636.5 787V789M637.5 785V787M638.5 786V788M639.5 768V770M641.5 774V776M644.5 779V781M646.5 782V784M647.5 784V786M648.5 784V786M649.5 785V787M650.5 786V788M651.5 787V789M653.5 772V774M655.5 777V779M659.5 785V787M660.5 786V788M661.5 787V789M662.5 786V788M663.5 785V787M664.5 769V771M665.5 770V772M666.5 773V775M669.5 781V783M670.5 782V784M671.5 784V786M672.5 784V786M673.5 785V787M674.5 787V789M675.5 786V788M679.5 774V776M681.5 779V781M683.5 782V784M685.5 785V787M686.5 786V788M688.5 786V788M689.5 768V770M694.5 780V782M696.5 782V784M697.5 784V786M698.5 785V787M699.5 787V789M700.5 786V788M701.5 787V789M702.5 769V771M703.5 773V775M705.5 777V779M706.5 778V780M707.5 780V782M708.5 782V784M710.5 786V788M711.5 785V787M712.5 786V788M713.5 786V788M714.5 767V769M719.5 781V783M721.5 783V785M723.5 785V787M724.5 786V788M725.5 785V787M726.5 786V788M732.5 781V783M736.5 786V788M737.5 786V788M743.5 778V780M744.5 780V782M746.5 782V784M747.5 785V787M750.5 786V788M751.5 786V788M753.5 772V774M754.5 774V776M758.5 783V785M759.5 783V785M760.5 785V787M761.5 787V789M762.5 785V787M763.5 785V787M765.5 770V772M767.5 776V778M768.5 777V779M769.5 779V781M770.5 783V785M771.5 783V785M772.5 784V786M773.5 785V787M774.5 786V788M775.5 786V788M776.5 786V788M778.5 772V774M781.5 780V782M784.5 783V785M785.5 785V787M787.5 786V788M788.5 786V788M789.5 769V771M792.5 775V777M794.5 780V782M796.5 782V784M797.5 785V787M798.5 785V787M799.5 785V787M800.5 787V789M801.5 786V788M802.5 768V770M804.5 775V777M805.5 778V780M809.5 784V786M813.5 786V788M814.5 768V770M817.5 777V779M818.5 778V780M820.5 782V784M822.5 784V786M823.5 786V788M825.5 787V789M826.5 785V787M827.5 769V771M828.5 771V773M829.5 775V777M831.5 780V782M832.5 780V782M833.5 783V785M834.5 783V785M835.5 784V786M836.5 785V787M837.5 787V789M838.5 786V788M839.5 769V771M840.5 771V773M842.5 775V777M843.5 779V781M844.5 781V783M847.5 785V787M849.5 786V788M850.5 785V787M851.5 786V788M853.5 771V773M855.5 778V780M856.5 780V782M857.5 780V782M858.5 783V785M859.5 784V786M860.5 785V787M861.5 785V787M862.5 787V789M863.5 786V788M866.5 774V776M869.5 779V781M872.5 785V787M873.5 785V787M874.5 787V789M875.5 786V788M876.5 786V788M877.5 770V772M878.5 772V774M884.5 783V785M885.5 785V787M886.5 786V788M887.5 785V787M888.5 786V788M893.5 777V779M895.5 782V784M896.5 782V784M897.5 784V786M898.5 784V786M899.5 786V788M900.5 786V788M901.5 786V788M905.5 776V778M907.5 781V783M909.5 784V786M910.5 786V788M912.5 786V788M913.5 786V788M916.5 774V776M918.5 779V781M920.5 782V784M921.5 782V784M922.5 784V786M923.5 785V787M924.5 786V788M925.5 786V788M926.5 785V787M927.5 769V771M929.5 775V777M930.5 776V778M932.5 781V783M933.5 783V785M934.5 784V786M935.5 785V787M936.5 786V788M937.5 787V789M938.5 787V789M939.5 767V769M943.5 778V780M944.5 779V781M945.5 782V784M947.5 784V786M948.5 785V787M949.5 786V788M951.5 786V788M952.5 768V770M954.5 774V776M958.5 783V785M960.5 785V787M961.5 785V787M962.5 785V787M963.5 786V788M965.5 772V774M968.5 777V779M971.5 783V785M972.5 783V785M973.5 784V786M974.5 785V787M975.5 786V788M976.5 786V788M977.5 769V771M978.5 772V774" stroke="#2ce02c" stroke-width="1" fill="none" opacity="0.8"/><path d="M980.5 706V894M981.5 698V894M982.5 690V894M983.5 681V894M984.5 667V894M985.5 665V894M986.5 662V894M987.5 663V894M988.5 661V894M989.5 651V894M990.5 641V894M991.5 622V894M992.5 636V894M993.5 647V894M994.5 653V894M995.5 646V894M996.5 634V894M997.5 621V894M998.5 619V894M999.5 629V894M1000.5 636V894M1001.5 655V894M1002.5 635V894M1003.5 610V894M1004.5 582V894M1005.5 611V894M1006.5 633V894M1007.5 648V894M1008.5 633V894M1009.5 611V894M1010.5 592V894M1011.5 588V894M1012.5 611V894M1013.5 627V894M1014.5 645V894M1015.5 627V894M1016.5 609V894M1017.5 589V894M1018.5 603V894M1019.5 624V894M1020.5 640V894M1021.5 623V894M1022.5 609V894M1023.5 592V894M1024.5 586V894M1025.5 602V894M1026.5 618V894M1027.5 633V894M1028.5 622V894M1029.5 607V894M1030.5 589V894M1031.5 593V894M1032.5 609V894M1033.5 626V894M1034.5 642V894M1035.5 628V894M1036.5 608V894M1037.5 587V894M1038.5 603V894M1039.5 622V894M1040.5 640V894M1041.5 639V894M1042.5 621V894M1043.5 595V894M1044.5 575V894M1045.5 598V894M1046.5 623V894M1047.5 647V894M1048.5 630V894M1049.5 619V894M1050.5 602V894M1051.5 595V894M1052.5 611V894M1053.5 626V894M1054.5 642V894M1055.5 632V894M1056.5 608V894M1057.5 589V894M1058.5 583V894M1059.5 609V894M1060.5 627V894M1061.5 652V894M1062.5 628V894M1063.5 611V894M1064.5 589V894M1065.5 590V894M1066.5 610V894M1067.5 634V894M1068.5 651V894M1069.5 630V894M1070.5 608V894M1071.5 588V894M1072.5 593V894M1073.5 610V894M1074.5 634V894M1075.5 646V894M1076.5 625V894M1077.5 607V894M1078.5 587V894M1079.5 591V894M1080.5 610V894M1081.5 626V894M1082.5 648V894M1083.5 631V894M1084.5 615V894M1085.5 597V894M1086.5 598V894M1087.5 612V894M1088.5 630V894M1089.5 646V894M1090.5 641V894M1091.5 618V894M1092.5 595V894M1093.5 589V894M1094.5 616V894M1095.5 638V894M1096.5 664V894M1097.5 633V894M1098.5 619V894M1099.5 599V894M1100.5 594V894M1101.5 611V894M1102.5 629V894M1103.5 647V894M1104.5 646V894M1105.5 630V894M1106.5 616V894M1107.5 602V894M1108.5 618V894M1109.5 631V894M1110.5 648V894M1111.5 666V894M1112.5 652V894M1113.5 627V894M1114.5 611V894M1115.5 620V894M1116.5 642V894M1117.5 659V894M1118.5 642V894M1119.5 648V894M1120.5 624V894M1121.5 605V894M1122.5 602V894M1123.5 623V894M1124.5 647V894M1125.5 650V894M1126.5 659V894M1127.5 637V894M1128.5 616V894M1129.5 598V894M1130.5 617V894M1131.5 637V894M1132.5 665V894M1133.5 661V894M1134.5 643V894M1135.5 622V894M1136.5 603V894M1137.5 604V894M1138.5 622V894M1139.5 644V894M1140.5 653V894M1141.5 663V894M1142.5 644V894M1143.5 626V894M1144.5 607V894M1145.5 623V894M1146.5 649V894M1147.5 668V894M1148.5 652V894M1149.5 647V894M1150.5 626V894M1151.5 606V894M1152.5 601V894M1153.5 623V894M1154.5 642V894M1155.5 650V894M1156.5 662V894M1157.5 660V894M1158.5 627V894M1159.5 604V894M1160.5 613V894M1161.5 640V894M1162.5 668V894M1163.5 664V894M1164.5 667V894M1165.5 640V894M1166.5 617V894M1167.5 598V894M1168.5 615V894M1169.5 638V894M1170.5 670V894M1171.5 665V894M1172.5 672V894M1173.5 652V894M1174.5 624V894M1175.5 602V894M1176.5 630V894M1177.5 661V894M1178.5 669V894M1179.5 652V894M1180.5 657V894M1181.5 653V894M1182.5 623V894M1183.5 605V894M1184.5 629V894M1185.5 663V894M1186.5 658V894M1187.5 655V894M1188.5 657V894M1189.5 639V894M1190.5 624V894M1191.5 615V894M1192.5 628V894M1193.5 643V894M1194.5 662V894M1195.5 677V894M1196.5 670V894M1197.5 657V894M1198.5 638V894M1199.5 622V894M1200.5 638V894M1201.5 660V894M1202.5 671V894M1203.5 672V894M1204.5 671V894M1205.5 653V894M1206.5 636V894M1207.5 619V894M1208.5 626V894M1209.5 644V894M1210.5 668V894M1211.5 665V894M1212.5 666V894M1213.5 662V894M1214.5 643V894M1215.5 624V894M1216.5 621V894M1217.5 639V894M1218.5 657V894M1219.5 668V894M1220.5 674V894M1221.5 673V894M1222.5 644V894M1223.5 623V894M1224.5 609V894M1225.5 622V894M1226.5 644V894M1227.5 665V894M1228.5 665V894M1229.5 671V894M1230.5 670V894M1231.5 648V894M1232.5 620V894M1233.5 617V894M1234.5 641V894M1235.5 671V894M1236.5 669V894M1237.5 659V894M1238.5 667V894M1239.5 669V894M1240.5 636V894M1241.5 615V894M1242.5 623V894M1243.5 651V894M1244.5 663V894M1245.5 661V894M1246.5 671V894M1247.5 677V894M1248.5 666V894M1249.5 644V894M1250.5 624V894M1251.5 638V894M1252.5 659V894M1253.5 671V894M1254.5 674V894M1255.5 679V894M1256.5 674V894M1257.5 659V894M1258.5 635V894M1259.5 618V894M1260.5 632V894M1261.5 659V894M1262.5 680V894M1263.5 666V894M1264.5 669V894M1265.5 670V894M1266.5 676V894M1267.5 642V894M1268.5 614V894M1269.5 628V894M1270.5 665V894M1271.5 673V894M1272.5 671V894M1273.5 680V894M1274.5 671V894M1275.5 668V894M1276.5 646V894M1277.5 614V894M1278.5 620V894M1279.5 648V894M1280.5 674V894M1281.5 673V894M1282.5 672V894M1283.5 678V894M1284.5 669V894M1285.5 653V894M1286.5 633V894M1287.5 623V894M1288.5 635V894M1289.5 660V894M1290.5 677V894M1291.5 674V894M1292.5 668V894M1293.5 670V894M1294.5 660V894M1295.5 641V894M1296.5 618V894M1297.5 620V894M1298.5 638V894M1299.5 665V894M1300.5 665V894M1301.5 665V894M1302.5 667V894M1303.5 663V894M1304.5 657V894M1305.5 640V894M1306.5 618V894M1307.5 627V894M1308.5 654V894M1309.5 666V894M1310.5 665V894M1311.5 664V894M1312.5 678V894M1313.5 674V894M1314.5 672V894M1315.5 648V894M1316.5 632V894M1317.5 634V894M1318.5 657V894M1319.5 677V894M1320.5 675V894M1321.5 668V894M1322.5 681V894M1323.5 671V894M1324.5 665V894M1325.5 636V894M1326.5 618V894M1327.5 620V894M1328.5 638V894M1329.5 658V894M1330.5 680V894M1331.5 672V894M1332.5 670V894M1333.5 676V894M1334.5 681V894M1335.5 651V894M1336.5 626V894M1337.5 610V894M1338.5 627V894M1339.5 651V894M1340.5 673V894M1341.5 674V894M1342.5 681V894M1343.5 674V894M1344.5 677V894M1345.5 656V894M1346.5 634V894M1347.5 622V894M1348.5 620V894M1349.5 632V894M1350.5 651V894M1351.5 673V894M1352.5 672V894M1353.5 674V894M1354.5 668V894M1355.5 664V894M1356.5 663V894M1357.5 643V894M1358.5 631V894M1359.5 631V894M1360.5 643V894M1361.5 657V894M1362.5 674V894M1363.5 657V894M1364.5 668V894M1365.5 666V894M1366.5 668V894M1367.5 663V894M1368.5 646V894M1369.5 634V894M1370.5 630V894M1371.5 640V894M1372.5 652V894M1373.5 667V894M1374.5 654V894M1375.5 656V894M1376.5 670V894M1377.5 662V894M1378.5 658V894M1379.5 655V894M1380.5 640V894M1381.5 628V894M1382.5 635V894M1383.5 651V894M1384.5 668V894M1385.5 668V894M1386.5 661V894M1387.5 673V894M1388.5 669V894M1389.5 678V894M1390.5 677V894M1391.5 661V894M1392.5 642V894M1393.5 628V894M1394.5 640V894M1395.5 659V894M1396.5 672V894M1397.5 680V894M1398.5 676V894M1399.5 674V894M1400.5 665V894M1401.5 669V894M1402.5 659V894M1403.5 636V894M1404.5 623V894M1405.5 611V894M1406.5 618V894M1407.5 632V894M1408.5 649V894M1409.5 673V894M1410.5 661V894M1411.5 664V894M1412.5 675V894M1413.5 676V894M1414.5 670V894M1415.5 657V894M1416.5 636V894M1417.5 618V894M1418.5 614V894M1419.5 629V894M1420.5 648V894M1421.5 668V894M1422.5 673V894M1423.5 681V894M1424.5 676V894M1425.5 674V894M1426.5 675V894M1427.5 673V894M1428.5 671V894M1429.5 642V894M1430.5 626V894M1431.5 621V894M1432.5 639V894M1433.5 663V894M1434.5 677V894M1435.5 678V894M1436.5 673V894M1437.5 671V894M1438.5 677V894M1439.5 674V894M1440.5 673V894M1441.5 679V894M1442.5 652V894M1443.5 632V894M1444.5 617V894M1445.5 634V894M1446.5 657V894M1447.5 679V894M1448.5 674V894M1449.5 674V894M1450.5 673V894M1451.5 663V894M1452.5 653V894M1453.5 661V894M1454.5 663V894M1455.5 668V894M1456.5 644V894M1457.5 627V894M1458.5 622V894M1459.5 634V894M1460.5 655V894M1461.5 658V894M1462.5 661V894M1463.5 668V894M1464.5 659V894M1465.5 671V894M1466.5 672V894M1467.5 676V894M1468.5 673V894M1469.5 659V894M1470.5 640V894M1471.5 628V894M1472.5 616V894M1473.5 626V894M1474.5 638V894M1475.5 656V894M1476.5 667V894M1477.5 678V894M1478.5 672V894M1479.5 670V894M1480.5 671V894M1481.5 675V894M1482.5 674V894M1483.5 668V894M1484.5 651V894M1485.5 643V894M1486.5 635V894M1487.5 627V894M1488.5 635V894M1489.5 644V894M1490.5 655V894M1491.5 665V894M1492.5 680V894M1493.5 667V894M1494.5 673V894M1495.5 670V894M1496.5 658V894M1497.5 663V894M1498.5 668V894M1499.5 653V894M1500.5 648V894M1501.5 641V894M1502.5 635V894M1503.5 635V894M1504.5 641V894M1505.5 647V894M1506.5 656V894M1507.5 664V894M1508.5 668V894M1509.5 655V894M1510.5 664V894M1511.5 651V894M1512.5 666V894M1513.5 661V894M1514.5 660V894M1515.5 673V894M1516.5 651V894M1517.5 635V894M1518.5 621V894M1519.5 622V894M1520.5 636V894M1521.5 656V894M1522.5 664V894M1523.5 655V894M1524.5 657V894M1525.5 669V894M1526.5 663V894M1527.5 674V894M1528.5 665V894M1529.5 667V894M1530.5 665V894M1531.5 671V894M1532.5 671V894M1533.5 651V894M1534.5 639V894M1535.5 627V894M1536.5 631V894M1537.5 645V894M1538.5 660V894M1539.5 663V894M1540.5 665V894M1541.5 661V894M1542.5 664V894M1543.5 660V894M1544.5 654V894M1545.5 672V894M1546.5 678V894M1547.5 671V894M1548.5 667V894M1549.5 661V894M1550.5 646V894M1551.5 633V894M1552.5 631V894M1553.5 625V894M1554.5 625V894M1555.5 622V894M1556.5 625V894M1557.5 629V894M1558.5 628V894M1559.5 673V894M1560.5 673V894M1561.5 673V894M1562.5 674V894" stroke="#008000" stroke-width="1" fill="none" /><path d="M981.5 773V775M982.5 774V776M983.5 777V780M984.5 778V780M985.5 779V782M986.5 777V780M987.5 776V779M988.5 774V776M989.5 776V778M990.5 779V781M991.5 782V784M992.5 779V781M993.5 778V780M994.5 775V778M995.5 777V779M996.5 779V781M997.5 781V784M998.5 782V785M999.5 780V783M1000.5 779V781M1001.5 777V780M1002.5 778V781M1003.5 781V783M1004.5 784V786M1005.5 782V785M1006.5 781V783M1007.5 780V783M1008.5 779V781M1009.5 782V784M1010.5 784V786M1011.5 784V787M1012.5 783V785M1013.5 780V782M1014.5 779V781M1015.5 781V783M1016.5 785V787M1017.5 785V788M1018.5 785V787M1019.5 782V784M1020.5 782V784M1021.5 782V784M1022.5 785V787M1023.5 785V787M1024.5 787V790M1025.5 785V788M1026.5 783V785M1027.5 782V784M1028.5 784V786M1029.5 786V789M1030.5 788V790M1031.5 787V789M1032.5 785V787M1033.5 783V785M1034.5 785V787M1035.5 785V787M1036.5 787V789M1037.5 790V792M1038.5 788V790M1039.5 784V786M1040.5 784V786M1041.5 786V788M1042.5 788V790M1043.5 791V793M1044.5 789V791M1045.5 787V789M1046.5 787V790M1047.5 786V788M1048.5 787V790M1049.5 790V792M1050.5 791V793M1051.5 789V791M1052.5 787V789M1053.5 786V788M1054.5 788V790M1055.5 790V793M1056.5 792V794M1057.5 790V792M1058.5 789V791M1059.5 788V791M1060.5 788V791M1061.5 791V793M1062.5 792V795M1063.5 793V795M1064.5 791V793M1065.5 789V792M1066.5 788V791M1067.5 790V792M1068.5 792V794M1069.5 794V796M1070.5 793V796M1071.5 791V793M1072.5 789V791M1073.5 790V792M1074.5 792V794M1075.5 794V797M1076.5 795V797M1077.5 793V795M1078.5 792V794M1079.5 791V794" stroke="#30ee30" stroke-width="1" fill="none" opacity="0.9"/><path d="M1080.5 793V796M1081.5 795V797M1082.5 797V799M1083.5 793V795M1084.5 793V795M1085.5 790V792M1086.5 791V793M1087.5 793V796M1088.5 795V797M1089.5 796V799M1090.5 795V797M1091.5 793V795M1092.5 791V793M1093.5 793V795M1094.5 795V797M1095.5 796V798M1096.5 795V798M1097.5 794V796M1098.5 793V795M1099.5 793V795M1100.5 795V798M1101.5 796V798M1102.5 797V799M1103.5 795V798M1104.5 794V797M1105.5 792V794M1106.5 793V795M1107.5 796V798M1108.5 798V800M1109.5 797V800M1110.5 795V798M1111.5 792V794M1112.5 795V797M1113.5 796V798M1114.5 797V799M1115.5 798V801M1116.5 796V798M1117.5 795V798M1118.5 793V796M1119.5 795V797M1120.5 798V800M1121.5 799V801M1122.5 798V800M1123.5 796V798M1124.5 794V797M1125.5 795V798M1126.5 798V800M1127.5 798V800M1128.5 799V802M1129.5 797V800M1130.5 796V798M1131.5 795V797M1132.5 796V799M1133.5 798V800M1134.5 801V803M1135.5 797V799M1136.5 798V800M1137.5 795V797M1138.5 794V796M1139.5 798V800M1140.5 799V801M1141.5 800V802M1142.5 798V800M1143.5 795V797M1144.5 794V797M1145.5 797V799M1146.5 799V802M1147.5 801V803M1148.5 799V801M1149.5 797V800M1150.5 795V797M1151.5 797V799M1152.5 798V801M1153.5 799V802M1154.5 800V803M1155.5 800V802M1156.5 798V801M1157.5 795V797M1158.5 797V800M1159.5 799V801" stroke="#26d026" stroke-width="1" fill="none" opacity="0.85"/><path d="M1160.5 799V805M1161.5 797V803M1162.5 797V803M1163.5 796V802M1164.5 796V802M1165.5 796V802M1166.5 797V803M1167.5 797V803M1168.5 796V802M1169.5 797V803M1170.5 795V801M1171.5 797V803M1172.5 798V804M1173.5 799V805M1174.5 799V805M1175.5 796V802M1176.5 797V803M1177.5 796V802M1178.5 797V803M1179.5 800V806M1180.5 798V804M1181.5 797V803M1182.5 797V803M1183.5 794V800M1184.5 797V803M1185.5 797V803M1186.5 801V807M1187.5 797V803M1188.5 796V802M1189.5 796V802M1190.5 797V803M1191.5 798V804M1192.5 798V804M1193.5 799V805M1194.5 797V803M1195.5 796V802M1196.5 795V801M1197.5 796V802M1198.5 798V804M1199.5 801V807M1200.5 800V806M1201.5 798V804M1202.5 795V801M1203.5 796V802M1204.5 797V803M1205.5 798V804M1206.5 799V805M1207.5 797V803M1208.5 796V802M1209.5 795V801M1210.5 797V803M1211.5 800V806M1212.5 800V806M1213.5 799V805M1214.5 799V805M1215.5 795V801M1216.5 796V802M1217.5 799V805M1218.5 799V805M1219.5 801V807M1220.5 797V803M1221.5 797V803M1222.5 797V803M1223.5 797V803M1224.5 800V806M1225.5 800V806M1226.5 798V804M1227.5 799V805M1228.5 797V803M1229.5 798V804M1230.5 797V803M1231.5 801V807M1232.5 801V807M1233.5 799V805M1234.5 797V803M1235.5 795V801M1236.5 797V803M1237.5 799V805M1238.5 801V807M1239.5 799V805M1240.5 799V805M1241.5 797V803M1242.5 798V804M1243.5 798V804M1244.5 799V805M1245.5 801V807M1246.5 799V805M1247.5 797V803M1248.5 796V802M1249.5 797V803M1250.5 800V806M1251.5 800V806M1252.5 799V805M1253.5 797V803M1254.5 796V802M1255.5 798V804M1256.5 800V806M1257.5 799V805M1258.5 801V807M1259.5 798V804M1260.5 798V804M1261.5 796V802M1262.5 797V803M1263.5 800V806M1264.5 801V807M1265.5 799V805M1266.5 800V806M1267.5 798V804M1268.5 798V804M1269.5 800V806M1270.5 801V807M1271.5 800V806M1272.5 800V806M1273.5 798V804M1274.5 798V804M1275.5 799V805M1276.5 800V806M1277.5 802V808M1278.5 800V806M1279.5 799V805M1280.5 797V803M1281.5 799V805M1282.5 799V805M1283.5 800V806M1284.5 801V807M1285.5 801V807M1286.5 797V803M1287.5 798V804M1288.5 799V805M1289.5 799V805M1290.5 801V807M1291.5 801V807M1292.5 799V805M1293.5 798V804M1294.5 797V803M1295.5 801V807M1296.5 800V806M1297.5 800V806M1298.5 799V805M1299.5 799V805M1300.5 799V805M1301.5 798V804M1302.5 800V806M1303.5 802V808M1304.5 801V807M1305.5 798V804M1306.5 797V803M1307.5 800V806M1308.5 800V806M1309.5 802V808M1310.5 802V808M1311.5 800V806M1312.5 798V804M1313.5 799V805M1314.5 798V804M1315.5 801V807M1316.5 803V809M1317.5 800V806M1318.5 799V805M1319.5 797V803M1320.5 800V806M1321.5 800V806M1322.5 802V808M1323.5 801V807M1324.5 800V806M1325.5 798V804M1326.5 797V803M1327.5 800V806M1328.5 802V808M1329.5 803V809M1330.5 801V807M1331.5 801V807M1332.5 799V805M1333.5 799V805M1334.5 800V806M1335.5 801V807M1336.5 801V807M1337.5 801V807M1338.5 800V806M1339.5 799V805M1340.5 800V806M1341.5 800V806M1342.5 803V809M1343.5 803V809M1344.5 801V807M1345.5 799V805M1346.5 798V804M1347.5 802V808M1348.5 801V807M1349.5 803V809M1350.5 800V806M1351.5 800V806M1352.5 799V805M1353.5 799V805M1354.5 803V809M1355.5 802V808M1356.5 801V807M1357.5 800V806M1358.5 799V805M1359.5 801V807M1360.5 802V808M1361.5 802V808M1362.5 803V809M1363.5 800V806M1364.5 800V806M1365.5 798V804M1366.5 799V805M1367.5 802V808M1368.5 802V808M1369.5 803V809M1370.5 802V808M1371.5 798V804M1372.5 799V805M1373.5 802V808M1374.5 803V809M1375.5 804V810M1376.5 802V808M1377.5 799V805M1378.5 800V806M1379.5 802V808M1380.5 802V808M1381.5 802V808M1382.5 803V809M1383.5 800V806M1384.5 800V806M1385.5 799V805M1386.5 802V808M1387.5 803V809M1388.5 803V809M1389.5 803V809M1390.5 801V807M1391.5 800V806M1392.5 801V807M1393.5 802V808M1394.5 805V811M1395.5 802V808M1396.5 802V808M1397.5 799V805M1398.5 799V805M1399.5 803V809M1400.5 802V808M1401.5 803V809M1402.5 802V808M1403.5 799V805M1404.5 801V807M1405.5 802V808M1406.5 801V807M1407.5 805V811M1408.5 803V809M1409.5 802V808M1410.5 801V807M1411.5 801V807M1412.5 801V807M1413.5 804V810M1414.5 804V810M1415.5 801V807M1416.5 802V808M1417.5 799V805M1418.5 802V808M1419.5 801V807M1420.5 805V811M1421.5 803V809M1422.5 802V808M1423.5 801V807M1424.5 800V806M1425.5 803V809M1426.5 802V808M1427.5 803V809M1428.5 802V808M1429.5 801V807M1430.5 802V808M1431.5 802V808M1432.5 802V808M1433.5 802V808M1434.5 801V807M1435.5 802V808M1436.5 801V807M1437.5 802V808M1438.5 801V807M1439.5 801V807M1440.5 802V808M1441.5 801V807M1442.5 801V807M1443.5 801V807M1444.5 801V807M1445.5 801V807M1446.5 803V809M1447.5 802V808M1448.5 802V808M1449.5 802V808M1450.5 802V808M1451.5 803V809M1452.5 804V810M1453.5 803V809M1454.5 804V810M1455.5 803V809M1456.5 804V810M1457.5 804V810M1458.5 804V810M1459.5 805V811M1460.5 805V811M1461.5 805V811M1462.5 805V811M1463.5 805V811M1464.5 804V810M1465.5 805V811M1466.5 804V810M1467.5 804V810M1468.5 805V811M1469.5 803V809M1470.5 803V809M1471.5 803V809M1472.5 803V809M1473.5 803V809M1474.5 803V809M1475.5 803V809M1476.5 802V808M1477.5 803V809M1478.5 802V808M1479.5 803V809M1480.5 802V808M1481.5 801V807M1482.5 801V807M1483.5 802V808M1484.5 802V808M1485.5 801V807M1486.5 801V807M1487.5 801V807M1488.5 801V807M1489.5 801V807M1490.5 802V808M1491.5 803V809M1492.5 803V809M1493.5 803V809M1494.5 803V809M1495.5 802V808M1496.5 802V808M1497.5 803V809M1498.5 803V809M1499.5 803V809M1500.5 803V809M1501.5 803V809M1502.5 804V810M1503.5 804V810M1504.5 804V810M1505.5 804V810M1506.5 804V810M1507.5 805V811M1508.5 804V810M1509.5 805V811M1510.5 804V810M1511.5 804V810M1512.5 805V811M1513.5 804V810M1514.5 805V811M1515.5 804V810M1516.5 804V810M1517.5 804V810M1518.5 805V811M1519.5 805V811M1520.5 804V810M1521.5 804V810M1522.5 804V810M1523.5 804V810M1524.5 803V809M1525.5 803V809M1526.5 802V808M1527.5 802V808M1528.5 803V809M1529.5 803V809M1530.5 803V809M1531.5 803V809M1532.5 803V809M1533.5 802V808M1534.5 803V809M1535.5 802V808M1536.5 802V808M1537.5 802V808M1538.5 803V809M1539.5 803V809M1540.5 802V808M1541.5 803V809M1542.5 802V808M1543.5 803V809M1544.5 803V809M1545.5 803V809M1546.5 803V809M1547.5 804V810M1548.5 805V811M1549.5 804V810M1550.5 804V810M1551.5 804V810M1552.5 804V810M1553.5 804V810M1554.5 805V811M1555.5 805V811M1556.5 805V811M1557.5 806V812M1558.5 805V811M1559.5 805V811M1560.5 806V812M1561.5 805V811M1562.5 805V811" stroke="#0c9c0c" stroke-width="1" fill="none" /><path d="M1430.5 804V806M1431.5 804V806M1432.5 804V806M1433.5 804V806M1434.5 803V805M1435.5 804V806M1436.5 803V805M1437.5 804V806M1438.5 803V805M1439.5 803V805M1440.5 804V806M1441.5 803V805M1442.5 803V805M1443.5 803V805M1444.5 803V805M1445.5 803V805M1446.5 805V807M1447.5 804V806M1448.5 804V806M1449.5 804V806M1450.5 804V806M1451.5 805V807M1452.5 806V808M1453.5 805V807M1454.5 806V808M1455.5 805V807M1456.5 806V808M1457.5 806V808M1458.5 806V808M1459.5 807V809M1460.5 807V809M1461.5 807V809M1462.5 807V809M1463.5 807V809M1464.5 806V808M1465.5 807V809M1466.5 806V808M1467.5 806V808M1468.5 807V809M1469.5 805V807M1470.5 805V807M1471.5 805V807M1472.5 805V807M1473.5 805V807M1474.5 805V807M1475.5 805V807M1476.5 804V806M1477.5 805V807M1478.5 804V806M1479.5 805V807M1480.5 804V806M1481.5 803V805M1482.5 803V805M1483.5 804V806M1484.5 804V806M1485.5 803V805M1486.5 803V805M1487.5 803V805M1488.5 803V805M1489.5 803V805M1490.5 804V806M1491.5 805V807M1492.5 805V807M1493.5 805V807M1494.5 805V807M1495.5 804V806M1496.5 804V806M1497.5 805V807M1498.5 805V807M1499.5 805V807M1500.5 805V807M1501.5 805V807M1502.5 806V808M1503.5 806V808M1504.5 806V808M1505.5 806V808M1506.5 806V808M1507.5 807V809M1508.5 806V808M1509.5 807V809M1510.5 806V808M1511.5 806V808M1512.5 807V809M1513.5 806V808M1514.5 807V809M1515.5 806V808M1516.5 806V808M1517.5 806V808M1518.5 807V809M1519.5 807V809M1520.5 806V808M1521.5 806V808M1522.5 806V808M1523.5 806V808M1524.5 805V807M1525.5 805V807M1526.5 804V806M1527.5 804V806M1528.5 805V807M1529.5 805V807M1530.5 805V807M1531.5 805V807M1532.5 805V807M1533.5 804V806M1534.5 805V807M1535.5 804V806M1536.5 804V806M1537.5 804V806M1538.5 805V807M1539.5 805V807M1540.5 804V806M1541.5 805V807M1542.5 804V806M1543.5 805V807M1544.5 805V807M1545.5 805V807M1546.5 805V807M1547.5 806V808M1548.5 807V809M1549.5 806V808M1550.5 806V808M1551.5 806V808M1552.5 806V808M1553.5 806V808M1554.5 807V809M1555.5 807V809M1556.5 807V809M1557.5 808V810M1558.5 807V809M1559.5 807V809M1560.5 808V810M1561.5 807V809M1562.5 807V809" stroke="#28d828" stroke-width="1" fill="none" /><path d="M1563.5 795V800M1564.5 795V800M1565.5 795V800M1566.5 795V800M1567.5 795V800M1568.5 795V800M1569.5 795V800M1570.5 795V801M1571.5 794V800M1572.5 795V800M1573.5 795V800M1574.5 795V800M1575.5 795V800M1576.5 795V800M1577.5 795V800M1578.5 794V800M1579.5 794V800M1580.5 795V800M1581.5 795V800M1582.5 795V800M1583.5 795V800M1584.5 795V800M1585.5 795V800M1586.5 795V800M1587.5 795V800M1588.5 795V800M1589.5 795V800M1590.5 795V800M1591.5 795V800M1592.5 795V800M1593.5 795V800M1594.5 795V800M1595.5 795V800M1596.5 795V800M1597.5 795V800M1598.5 795V800M1599.5 795V800M1600.5 795V800M1601.5 795V800M1602.5 795V800M1603.5 795V800M1604.5 795V800M1605.5 795V800M1606.5 795V800M1607.5 795V800M1608.5 795V800M1609.5 795V800M1610.5 795V800M1611.5 795V800M1612.5 795V800M1613.5 795V800M1614.5 795V800M1615.5 795V800M1616.5 795V800M1617.5 795V800M1618.5 795V800M1619.5 795V800M1620.5 795V800M1621.5 795V801M1622.5 795V800M1623.5 795V800M1624.5 795V800M1625.5 795V800M1626.5 795V800M1627.5 795V800M1628.5 795V800M1629.5 795V800M1630.5 795V800M1631.5 795V800M1632.5 795V800M1633.5 795V800M1634.5 795V800M1635.5 795V800M1636.5 795V800M1637.5 795V800M1638.5 795V800M1639.5 795V800M1640.5 795V800M1641.5 795V800M1642.5 795V800M1643.5 795V800M1644.5 795V800M1645.5 795V800M1646.5 795V800M1647.5 795V800M1648.5 795V800M1649.5 795V800M1650.5 795V800M1651.5 795V800M1652.5 795V800M1653.5 795V800M1654.5 795V800M1655.5 795V800M1656.5 795V800M1657.5 795V800M1658.5 795V800M1659.5 795V800M1660.5 795V800M1661.5 795V800M1662.5 795V800M1663.5 795V800M1664.5 795V800M1665.5 795V800M1666.5 795V800M1667.5 795V800M1668.5 795V800M1669.5 795V800M1670.5 795V800M1671.5 795V800M1672.5 795V800M1673.5 795V800M1674.5 795V800M1675.5 795V800M1676.5 795V800M1677.5 795V800M1678.5 795V800M1679.5 795V800M1680.5 795V800M1681.5 795V800M1682.5 795V800M1683.5 795V800M1684.5 795V800M1685.5 795V800M1686.5 795V800M1687.5 795V800M1688.5 795V800M1689.5 795V800M1690.5 795V800M1691.5 795V800M1692.5 795V800M1693.5 795V800M1694.5 795V800M1695.5 795V800M1696.5 795V801M1697.5 794V800M1698.5 795V800M1699.5 795V800M1700.5 795V800M1701.5 795V800M1702.5 795V800M1703.5 795V800M1704.5 795V800M1705.5 795V800M1706.5 795V800M1707.5 795V800M1708.5 795V800M1709.5 795V800M1710.5 795V800M1711.5 795V800M1712.5 795V800M1713.5 795V800M1714.5 795V800M1715.5 795V800M1716.5 795V800M1717.5 795V800M1718.5 795V800M1719.5 795V800M1720.5 795V800M1721.5 795V800M1722.5 795V800M1723.5 795V800M1724.5 795V800M1725.5 795V800M1726.5 795V800M1727.5 795V800M1728.5 795V800M1729.5 795V800M1730.5 795V801M1731.5 795V800M1732.5 795V800M1733.5 795V800M1734.5 795V800M1735.5 795V800M1736.5 795V800M1737.5 795V800M1738.5 795V800M1739.5 795V800M1740.5 795V800M1741.5 795V800M1742.5 795V801M1743.5 795V800M1744.5 795V800M1745.5 795V800M1746.5 795V800M1747.5 795V800M1748.5 795V800M1749.5 795V800M1750.5 795V800M1751.5 795V800M1752.5 795V800M1753.5 795V800M1754.5 795V800M1755.5 795V800M1756.5 795V800M1757.5 795V800M1758.5 795V800M1759.5 795V800M1760.5 795V800M1761.5 795V800M1762.5 795V800M1763.5 795V800M1764.5 795V800M1765.5 795V800M1766.5 795V800M1767.5 795V800M1768.5 795V800M1769.5 795V800M1770.5 795V800M1771.5 795V800M1772.5 795V800M1773.5 795V800M1774.5 795V800M1775.5 795V800M1776.5 795V800M1777.5 795V800M1778.5 795V800M1779.5 795V800M1780.5 795V801M1781.5 795V800M1782.5 795V800M1783.5 795V800M1784.5 795V800M1785.5 795V800M1786.5 795V800M1787.5 795V800M1788.5 795V800M1789.5 795V801M1790.5 795V801M1791.5 795V800M1792.5 795V800M1793.5 795V800M1794.5 795V800M1795.5 795V800M1796.5 795V800M1797.5 795V800M1798.5 795V800M1799.5 795V800M1800.5 795V800M1801.5 795V800M1802.5 795V800M1803.5 795V800M1804.5 795V800M1805.5 795V800M1806.5 795V800M1807.5 795V801M1808.5 795V800M1809.5 795V800M1810.5 795V800M1811.5 795V800M1812.5 795V800M1813.5 795V800M1814.5 795V800M1815.5 795V800M1816.5 795V800M1817.5 795V800M1818.5 795V800M1819.5 795V800M1820.5 795V801M1821.5 795V801M1822.5 795V800M1823.5 795V800M1824.5 795V800M1825.5 795V800M1826.5 795V801M1827.5 795V801M1828.5 795V800M1829.5 795V800M1830.5 795V800M1831.5 795V800M1832.5 795V800M1833.5 795V800M1834.5 795V800M1835.5 795V800M1836.5 795V800M1837.5 795V800M1838.5 795V800M1839.5 795V800M1840.5 795V801M1841.5 795V801M1842.5 795V800M1843.5 795V800M1844.5 795V800M1845.5 794V800M1846.5 795V800M1847.5 795V800M1848.5 795V800M1849.5 795V800M1850.5 795V800M1851.5 795V801M1852.5 795V801M1853.5 795V800M1854.5 795V800M1855.5 795V800M1856.5 795V800M1857.5 795V800M1858.5 795V800M1859.5 795V800M1860.5 795V800M1861.5 795V800M1862.5 795V800M1863.5 795V800M1864.5 795V800M1865.5 795V800M1866.5 795V800M1867.5 795V800M1868.5 795V800M1869.5 795V800M1870.5 794V800M1871.5 794V800M1872.5 795V800M1873.5 795V800M1874.5 795V800M1875.5 795V800M1876.5 795V800M1877.5 795V800M1878.5 795V800M1879.5 795V800M1880.5 795V800M1881.5 795V800M1882.5 795V800M1883.5 795V800M1884.5 795V800M1885.5 795V800M1886.5 795V800M1887.5 795V800M1888.5 795V800M1889.5 795V800M1890.5 795V800M1891.5 795V800M1892.5 795V800M1893.5 795V800M1894.5 795V800M1895.5 795V800M1896.5 795V800M1897.5 795V800M1898.5 795V800M1899.5 795V800M1900.5 795V800M1901.5 795V800M1902.5 795V800M1903.5 795V801M1904.5 795V800M1905.5 795V800" stroke="#008000" stroke-width="1" fill="none" /><path d="M1563.5 796V798M1564.5 796V798M1565.5 796V798M1566.5 796V798M1567.5 796V798M1568.5 796V798M1569.5 796V798M1570.5 796V799M1571.5 796V798M1572.5 796V798M1573.5 796V798M1574.5 796V798M1575.5 796V798M1576.5 796V798M1577.5 796V798M1578.5 796V798M1579.5 796V798M1580.5 796V798M1581.5 796V798M1582.5 796V798M1583.5 796V798M1584.5 796V798M1585.5 796V798M1586.5 796V798M1587.5 796V798M1588.5 796V798M1589.5 796V798M1590.5 796V798M1591.5 796V798M1592.5 796V798M1593.5 796V798M1594.5 796V798M1595.5 796V798M1596.5 796V798M1597.5 796V798M1598.5 796V798M1599.5 796V798M1600.5 796V798M1601.5 796V798M1602.5 796V798M1603.5 796V798M1604.5 796V798M1605.5 796V798M1606.5 796V798M1607.5 796V798M1608.5 796V798M1609.5 796V798M1610.5 796V798M1611.5 796V798M1612.5 796V798M1613.5 796V798M1614.5 796V798M1615.5 796V798M1616.5 796V798M1617.5 796V798M1618.5 796V798M1619.5 796V798M1620.5 796V798M1621.5 796V799M1622.5 796V798M1623.5 796V798M1624.5 796V798M1625.5 796V798M1626.5 796V798M1627.5 796V798M1628.5 796V798M1629.5 796V798M1630.5 796V798M1631.5 796V798M1632.5 796V798M1633.5 796V798M1634.5 796V798M1635.5 796V798M1636.5 796V798M1637.5 796V798M1638.5 796V798M1639.5 796V798M1640.5 796V798M1641.5 796V798M1642.5 796V798M1643.5 796V798M1644.5 796V798M1645.5 796V798M1646.5 796V798M1647.5 796V798M1648.5 796V798M1649.5 796V798M1650.5 796V798M1651.5 796V798M1652.5 796V798M1653.5 796V798M1654.5 796V798M1655.5 796V798M1656.5 796V798M1657.5 796V798M1658.5 796V798M1659.5 796V798M1660.5 796V798M1661.5 796V798M1662.5 796V798M1663.5 796V798M1664.5 796V798M1665.5 796V798M1666.5 796V798M1667.5 796V798M1668.5 796V798M1669.5 796V798M1670.5 796V798M1671.5 796V798M1672.5 796V798M1673.5 796V798M1674.5 796V798M1675.5 796V798M1676.5 796V798M1677.5 796V798M1678.5 796V798M1679.5 796V798M1680.5 796V798M1681.5 796V798M1682.5 796V798M1683.5 796V798M1684.5 796V798M1685.5 796V798M1686.5 796V798M1687.5 796V798M1688.5 796V798M1689.5 796V798M1690.5 796V798M1691.5 796V798M1692.5 796V798M1693.5 796V798M1694.5 796V798M1695.5 796V798M1696.5 796V799M1697.5 796V798M1698.5 796V798M1699.5 796V798M1700.5 796V798M1701.5 796V798M1702.5 796V798M1703.5 796V798M1704.5 796V798M1705.5 796V798M1706.5 796V798M1707.5 796V798M1708.5 796V798M1709.5 796V798M1710.5 796V798M1711.5 796V798M1712.5 796V798M1713.5 796V798M1714.5 796V798M1715.5 796V798M1716.5 796V798M1717.5 796V798M1718.5 796V798M1719.5 796V798M1720.5 796V798M1721.5 796V798M1722.5 796V798M1723.5 796V798M1724.5 796V798M1725.5 796V798M1726.5 796V798M1727.5 796V798M1728.5 796V798M1729.5 796V798M1730.5 796V799M1731.5 796V798M1732.5 796V798M1733.5 796V798M1734.5 796V798M1735.5 796V798M1736.5 796V798M1737.5 796V798M1738.5 796V798M1739.5 796V798M1740.5 796V798M1741.5 796V798M1742.5 796V799M1743.5 796V798M1744.5 796V798M1745.5 796V798M1746.5 796V798M1747.5 796V798M1748.5 796V798M1749.5 796V798M1750.5 796V798M1751.5 796V798M1752.5 796V798M1753.5 796V798M1754.5 796V798M1755.5 796V798M1756.5 796V798M1757.5 796V798M1758.5 796V798M1759.5 796V798M1760.5 796V798M1761.5 796V798M1762.5 796V798M1763.5 796V798M1764.5 796V798M1765.5 796V798M1766.5 796V798M1767.5 796V798M1768.5 796V798M1769.5 796V798M1770.5 796V798M1771.5 796V798M1772.5 796V798M1773.5 796V798M1774.5 796V798M1775.5 796V798M1776.5 796V798M1777.5 796V798M1778.5 796V798M1779.5 796V798M1780.5 796V799M1781.5 796V798M1782.5 796V798M1783.5 796V798M1784.5 796V798M1785.5 796V798M1786.5 796V798M1787.5 796V798M1788.5 796V798M1789.5 796V799M1790.5 796V799M1791.5 796V798M1792.5 796V798M1793.5 796V798M1794.5 796V798M1795.5 796V798M1796.5 796V798M1797.5 796V798M1798.5 796V798M1799.5 796V798M1800.5 796V798M1801.5 796V798M1802.5 796V798M1803.5 796V798M1804.5 796V798M1805.5 796V798M1806.5 796V798M1807.5 796V799M1808.5 796V798M1809.5 796V798M1810.5 796V798M1811.5 796V798M1812.5 796V798M1813.5 796V798M1814.5 796V798M1815.5 796V798M1816.5 796V798M1817.5 796V798M1818.5 796V798M1819.5 796V798M1820.5 796V799M1821.5 796V799M1822.5 796V798M1823.5 796V798M1824.5 796V798M1825.5 796V798M1826.5 796V799M1827.5 796V799M1828.5 796V798M1829.5 796V798M1830.5 796V798M1831.5 796V798M1832.5 796V798M1833.5 796V798M1834.5 796V798M1835.5 796V798M1836.5 796V798M1837.5 796V798M1838.5 796V798M1839.5 796V798M1840.5 796V799M1841.5 796V799M1842.5 796V798M1843.5 796V798M1844.5 796V798M1845.5 796V798M1846.5 796V798M1847.5 796V798M1848.5 796V798M1849.5 796V798M1850.5 796V798M1851.5 796V799M1852.5 796V799M1853.5 796V798M1854.5 796V798M1855.5 796V798M1856.5 796V798M1857.5 796V798M1858.5 796V798M1859.5 796V798M1860.5 796V798M1861.5 796V798M1862.5 796V798M1863.5 796V798M1864.5 796V798M1865.5 796V798M1866.5 796V798M1867.5 796V798M1868.5 796V798M1869.5 796V798M1870.5 796V798M1871.5 796V798M1872.5 796V798M1873.5 796V798M1874.5 796V798M1875.5 796V798M1876.5 796V798M1877.5 796V798M1878.5 796V798M1879.5 796V798M1880.5 796V798M1881.5 796V798M1882.5 796V798M1883.5 796V798M1884.5 796V798M1885.5 796V798M1886.5 796V798M1887.5 796V798M1888.5 796V798M1889.5 796V798M1890.5 796V798M1891.5 796V798M1892.5 796V798M1893.5 796V798M1894.5 796V798M1895.5 796V798M1896.5 796V798M1897.5 796V798M1898.5 796V798M1899.5 796V798M1900.5 796V798M1901.5 796V798M1902.5 796V798M1903.5 796V799M1904.5 796V798M1905.5 796V798" stroke="#00f400" stroke-width="1" fill="none" /><rect x="88.5" y="48.5" width="1818" height="846" fill="none" stroke="#969696" stroke-width="1"/><path d="M88.5 378V503" stroke="#5a5400" stroke-width="1" fill="none"/><path d="M94 86.5H141" stroke="#000" stroke-width="1" fill="none"/><path d="M117 88L88.5 102" stroke="#000" stroke-width="1" fill="none" shape-rendering="auto"/><path d="M95 261.5H178" stroke="#000" stroke-width="1" fill="none"/><path d="M136 263L88.5 278" stroke="#000" stroke-width="1" fill="none" shape-rendering="auto"/><path d="M94 477.5H153" stroke="#000" stroke-width="1" fill="none"/><path d="M123 479L88.5 494" stroke="#000" stroke-width="1" fill="none" shape-rendering="auto"/><path d="M94 760.5H138" stroke="#000" stroke-width="1" fill="none"/><path d="M115 762L88.5 777" stroke="#000" stroke-width="1" fill="none" shape-rendering="auto"/><path d="M78 228H87L88 229V230H79V231H78Z" fill="#0000ff"/><path d="M78 346H87L88 347V348H79V349H78Z" fill="#ff0070"/><path d="M78 494H87L88 495V496H79V497H78Z" fill="#b0a800"/><path d="M78 798H87L88 799V800H79V801H78Z" fill="#00e800"/><path d="M1907 762h2v1h-2zM1909 761h2v3h-2zM1911 760h2v5h-2zM1913 759h2v7h-2z" fill="#00ff00"/><path d="M82.500 899.500H88.500M85.800 896.200L82.500 899.500L85.800 902.800" stroke="#00ee00" stroke-width="1.600" fill="none" shape-rendering="auto"/></svg><div class="t" style="top:48.73px;font-size:14.5px;line-height:18px;color:#00f000;right:1836.5px;text-align:right;">3.54 A</div><div class="t" style="top:145.73px;font-size:14.5px;line-height:18px;color:#00f000;right:1836.5px;text-align:right;">3.04 A</div><div class="t" style="top:251.73px;font-size:14.5px;line-height:18px;color:#00f000;right:1836.5px;text-align:right;">2.54 A</div><div class="t" style="top:357.73px;font-size:14.5px;line-height:18px;color:#00f000;right:1836.5px;text-align:right;">2.04 A</div><div class="t" style="top:463.73px;font-size:14.5px;line-height:18px;color:#00f000;right:1836.5px;text-align:right;">1.54 A</div><div class="t" style="top:569.73px;font-size:14.5px;line-height:18px;color:#00f000;right:1836.5px;text-align:right;">1.04 A</div><div class="t" style="top:675.73px;font-size:14.5px;line-height:18px;color:#00f000;right:1836.5px;text-align:right;">540 mA</div><div class="t" style="top:781.73px;font-size:14.5px;line-height:18px;color:#00f000;right:1836.5px;text-align:right;">40 mA</div><div class="t" style="top:876.73px;font-size:14.5px;line-height:18px;color:#00f000;right:1836.5px;text-align:right;">-460 mA</div><div class="t" style="top:896.73px;font-size:14.5px;line-height:18px;color:#00f000;left:89.5px;">1.761 s</div><div class="t" style="top:896.73px;font-size:14.5px;line-height:18px;color:#00f000;left:170px;width:200px;text-align:center;">1.811 s</div><div class="t" style="top:896.73px;font-size:14.5px;line-height:18px;color:#00f000;left:352px;width:200px;text-align:center;">1.861 s</div><div class="t" style="top:896.73px;font-size:14.5px;line-height:18px;color:#00f000;left:534px;width:200px;text-align:center;">1.911 s</div><div class="t" style="top:896.73px;font-size:14.5px;line-height:18px;color:#00f000;left:716px;width:200px;text-align:center;">1.961 s</div><div class="t" style="top:896.73px;font-size:14.5px;line-height:18px;color:#00f000;left:898px;width:200px;text-align:center;">2.011 s</div><div class="t" style="top:896.73px;font-size:14.5px;line-height:18px;color:#00f000;left:1079px;width:200px;text-align:center;">2.061 s</div><div class="t" style="top:896.73px;font-size:14.5px;line-height:18px;color:#00f000;left:1261px;width:200px;text-align:center;">2.111 s</div><div class="t" style="top:896.73px;font-size:14.5px;line-height:18px;color:#00f000;left:1443px;width:200px;text-align:center;">2.161 s</div><div class="t" style="top:896.73px;font-size:14.5px;line-height:18px;color:#00f000;left:1625px;width:200px;text-align:center;">2.211 s</div><div class="t" style="top:896.73px;font-size:14.5px;line-height:18px;color:#00f000;right:13px;text-align:right;">2.261 s</div><div class="t" style="top:72.32px;font-size:13.8px;line-height:17px;color:#000;left:94px;">OUT_1</div><div class="t" style="top:247.32px;font-size:13.8px;line-height:17px;color:#000;left:95px;">SPEED&lt;7:0&gt;</div><div class="t" style="top:463.32px;font-size:13.8px;line-height:17px;color:#000;left:94px;">RC_OUT</div><div class="t" style="top:746.32px;font-size:13.8px;line-height:17px;color:#000;left:94px;">I_MTR</div><div class="t" style="top:213.69px;font-size:11px;line-height:15px;color:#0000ff;left:73.5px;">C3</div><div class="t" style="top:332.19px;font-size:11px;line-height:15px;color:#ff0070;left:73.5px;">C2</div><div class="t" style="top:480.19px;font-size:11px;line-height:15px;color:#b8a800;left:73.5px;">C1</div><div class="abs" style="left:67px;top:782px;width:20px;height:13px;background:#00ff00;border:1px solid #000;border-radius:4px;"></div><div class="t" style="top:783.11px;font-size:10.5px;line-height:14px;color:#000;left:73px;">C4</div><div id="bar"><div class="sep" style="left:73px"></div><div class="sep" style="left:175px"></div><div class="sep" style="left:292px"></div><div class="sep" style="left:391px"></div><div class="sep" style="left:493px"></div><div class="sep" style="left:599px"></div><div class="sep" style="left:710px"></div><div class="sep" style="left:793px"></div><div class="sep" style="left:902px"></div><div class="sep" style="left:1001px"></div><div class="sep" style="left:1106px"></div><div class="t" style="top:12.16px;font-size:16px;line-height:20px;color:#fff;left:34px;">File</div><div class="t" style="top:12.16px;font-size:16px;line-height:20px;color:#fff;left:107px;">Vertical</div><div class="t" style="top:12.16px;font-size:16px;line-height:20px;color:#fff;left:209px;">Timebase</div><div class="t" style="top:12.16px;font-size:16px;line-height:20px;color:#fff;left:326px;">Trigger</div><div class="t" style="top:12.16px;font-size:16px;line-height:20px;color:#fff;left:425px;">Display</div><div class="t" style="top:12.16px;font-size:16px;line-height:20px;color:#fff;left:527px;">Cursors</div><div class="t" style="top:12.16px;font-size:16px;line-height:20px;color:#fff;left:633px;">Measure</div><div class="t" style="top:12.16px;font-size:16px;line-height:20px;color:#fff;left:744px;">Math</div><div class="t" style="top:12.16px;font-size:16px;line-height:20px;color:#fff;left:827px;">Analysis</div><div class="t" style="top:12.16px;font-size:16px;line-height:20px;color:#fff;left:936px;">Utilities</div><div class="t" style="top:12.16px;font-size:16px;line-height:20px;color:#fff;left:1035px;">Support</div><div class="t" style="top:16.48px;font-size:15.5px;line-height:19px;color:#fff;right:53px;text-align:right;">Gesture</div><div class="abs" style="left:1871px;top:4px;width:39px;height:34px;background:#4a4a4a;border:1px solid #6a6a6a;"></div><div class="t" style="top:10.93px;font-size:10px;line-height:14px;color:#fff;font-weight:bold;left:1792px;width:200px;text-align:center;">Undo</div><svg width="1920" height="44" viewBox="0 0 1920 44"><rect x="11" y="15" width="12" height="15" rx="1.5" fill="none" stroke="#d4d4d4" stroke-width="2"/><rect x="14" y="12" width="6" height="4" fill="#d4d4d4"/><rect x="14" y="19" width="6" height="5" fill="#9a9a9a"/><path d="M91.500 12L96 17.500H93.500V24.500H96L91.500 30L87 24.500H89.500V17.500H87Z" fill="#d4d4d4"/><path d="M185 21.500L190.500 17V19.800H197.500V17L203 21.500L197.500 26V23.200H190.500V26Z" fill="#d4d4d4"/><path d="M311 13H313V31H311Z M313 13L317 15V19L313 20Z" fill="#d4d4d4"/><rect x="403" y="16.500" width="14" height="10.500" rx="1.500" fill="none" stroke="#d4d4d4" stroke-width="2"/><path d="M405 25L408 21.500L410.500 23L413 20.500L415 25Z" fill="#d4d4d4"/><rect x="404" y="27.500" width="12" height="1" fill="#8a8a8a"/><path d="M507.500 25.500L512.500 20L510 18L518 16L517 24L514.800 22L509.800 27.500Z" fill="#d4d4d4"/><rect x="613.500" y="13.500" width="10" height="15" fill="none" stroke="#d4d4d4" stroke-width="1.5"/><path d="M614 17H618M614 20H617M614 23H618M614 26H617" stroke="#d4d4d4" stroke-width="1"/><rect x="721" y="15" width="14" height="15" rx="2" fill="#d4d4d4"/><rect x="723" y="17" width="10" height="3" fill="#1b1a18"/><path d="M723 22.500H733M723 25.500H733M723 28.300H733" stroke="#1b1a18" stroke-width="1.600" stroke-dasharray="2.500 1.200"/><path d="M803.500 16V28.500H819" stroke="#9c9c9c" stroke-width="1" fill="none"/><path d="M0 0" stroke="#d4d4d4"/><path d="M806 25L810 21L813 23L818 18" stroke="#d4d4d4" stroke-width="2" fill="none"/><path d="M816 16.500H820V20.500Z" fill="#d4d4d4"/><path d="M917.500 18.500L926.500 27.500" stroke="#d4d4d4" stroke-width="3" stroke-linecap="round"/><circle cx="916.300" cy="17.300" r="3" fill="#d4d4d4"/><path d="M913 13L917 17L915 14Z" fill="#1b1a18"/><rect x="914.200" y="13.300" width="2.200" height="3.400" transform="rotate(-45 916.300 17.300)" fill="#1b1a18"/><path d="M915.200 28.800L920.500 23.500" stroke="#d4d4d4" stroke-width="3.600" stroke-linecap="round"/><path d="M920 24L928.300 15.700" stroke="#d4d4d4" stroke-width="1.700" stroke-linecap="round"/><circle cx="1019.500" cy="21.500" r="7.500" fill="#d4d4d4"/><rect x="1018.300" y="20" width="2.600" height="6" fill="#1b1a18"/><rect x="1018.300" y="16" width="2.600" height="2.600" fill="#1b1a18"/><path d="M1887 26.500C1892.500 25 1898 28 1899.500 34.500" stroke="#fff" stroke-width="1.800" fill="none"/><path d="M1883 27.300L1888.800 23.500L1889.200 29.800Z" fill="#fff"/></svg></div><div class="t" style="top:933.76px;font-size:16px;line-height:20px;color:#000;font-weight:bold;left:5px;">Measure</div><div class="t" style="top:953.76px;font-size:16px;line-height:20px;color:#000;left:5px;">value</div><div class="t" style="top:973.76px;font-size:16px;line-height:20px;color:#000;left:5px;">status</div><div class="t" style="top:933.76px;font-size:16px;line-height:20px;color:#000;right:1493px;text-align:right;">P1:cycles(C1)</div><div class="t" style="top:933.76px;font-size:16px;line-height:20px;color:#000;right:1281px;text-align:right;">P2:freq(C2)</div><div class="t" style="top:933.76px;font-size:16px;line-height:20px;color:#000;right:1069px;text-align:right;">P3:freq(C4)</div><div class="t" style="top:933.76px;font-size:16px;line-height:20px;color:#000;right:857px;text-align:right;">P4:rms(C1)</div><div class="t" style="top:933.76px;font-size:16px;line-height:20px;color:#000;right:645px;text-align:right;">P5:freq(C3)</div><div class="t" style="top:933.76px;font-size:16px;line-height:20px;color:#000;right:433px;text-align:right;">P6:cycles(C1)</div><div class="t" style="top:933.76px;font-size:16px;line-height:20px;color:#000;right:221px;text-align:right;">P7:- - -</div><div class="t" style="top:933.76px;font-size:16px;line-height:20px;color:#000;right:9px;text-align:right;">P8:- - -</div><div class="t" style="top:953.76px;font-size:16px;line-height:20px;color:#000;right:1493px;text-align:right;">203 cyc</div><div class="t" style="top:953.76px;font-size:16px;line-height:20px;color:#000;right:221px;text-align:right;letter-spacing:-1px;">---</div><div class="t" style="top:953.76px;font-size:16px;line-height:20px;color:#000;right:9px;text-align:right;letter-spacing:-1px;">---</div><div class="abs" style="left:4px;top:953px;width:1908px;height:1px;background:#7a7a7a;"></div><svg width="1920" height="1080" viewBox="0 0 1920 1080"><path d="M414.500 984.500L417.500 987.500L424.500 979.500" stroke="#10b010" stroke-width="2.400" fill="none"/></svg><div class="ch" style="left:4px;background:#404040;"><div class="hd" style="background:#b0a800"></div><div class="t"  style="top:-0.20px;font-size:15px;line-height:19px;color:#1e1c00;left:4px;">C1</div><div class="bdg" style="left:73px;width:46px;color:#b0a800">DC1M</div><div class="t" style="right:2px;top:20.6px;font-size:16px;line-height:20px;color:#fff;">5.00 V/div</div><div class="t" style="right:2px;top:39.1px;font-size:16px;line-height:20px;color:#fff;">-1.1000 V</div></div><div class="ch" style="left:129px;background:#404040;"><div class="hd" style="background:#ff0080"></div><div class="t"  style="top:-0.20px;font-size:15px;line-height:19px;color:#3c001c;left:4px;">C2</div><div class="bdg" style="left:41px;width:30px;color:#ff0080">FLT</div><div class="bdg" style="left:73px;width:46px;color:#ff0080">DC1M</div><div class="t" style="right:2px;top:20.6px;font-size:16px;line-height:20px;color:#fff;">2.00 V/div</div><div class="t" style="right:2px;top:39.1px;font-size:16px;line-height:20px;color:#fff;">2.35000 V</div></div><div class="ch" style="left:254px;background:#404040;"><div class="hd" style="background:#0000ff"></div><div class="t"  style="top:-0.20px;font-size:15px;line-height:19px;color:#000090;left:4px;">C3</div><div class="bdg" style="left:73px;width:46px;color:#0000ff">DC1M</div><div class="t" style="right:2px;top:20.6px;font-size:16px;line-height:20px;color:#fff;">10.0 V/div</div><div class="t" style="right:2px;top:39.1px;font-size:16px;line-height:20px;color:#fff;">22.950 V ofst</div></div><div class="ch" style="left:379px;background:#2c4a66;outline:2px solid #2a8ce8;outline-offset:-1px;"><div class="hd" style="background:#00ff00"></div><div class="t"  style="top:-0.20px;font-size:15px;line-height:19px;color:#004000;left:4px;">C4</div><div class="bdg" style="left:59px;width:32px;color:#00ff00">BwL</div><div class="bdg" style="left:92px;width:27px;color:#00ff00">DC</div><div class="t" style="right:2px;top:20.6px;font-size:16px;line-height:20px;color:#fff;">500 mA/div</div><div class="t" style="right:2px;top:39.1px;font-size:16px;line-height:20px;color:#fff;">-1.54000 A</div></div><div class="abs" style="left:504px;top:994px;width:120px;height:60px;border:1px dashed #555;"></div><div class="abs" style="left:1574px;top:994px;width:72px;height:62px;background:#404040;"><div class="abs" style="left:0;top:0;width:72px;height:19px;background:#00ff00;"></div></div><div class="t" style="top:995.76px;font-size:16px;line-height:20px;color:#000;left:1510px;width:200px;text-align:center;">HD</div><div class="t" style="top:1024.76px;font-size:16px;line-height:20px;color:#fff;left:1510px;width:200px;text-align:center;">12 Bits</div><div class="abs" style="left:1649px;top:994px;width:141px;height:62px;background:#404040;"><div class="abs" style="left:0;top:0;width:141px;height:19px;background:#c8c8c8;"></div></div><div class="t" style="top:994.26px;font-size:16px;line-height:20px;color:#000;left:1652px;">Tbase</div><div class="t" style="top:994.26px;font-size:16px;line-height:20px;color:#000;right:132px;text-align:right;">-2.011 s</div><div class="t" style="top:1014.86px;font-size:16px;line-height:20px;color:#fff;right:132px;text-align:right;">50.0 ms/div</div><div class="t" style="top:1034.86px;font-size:16px;line-height:20px;color:#fff;left:1652px;">25 MS</div><div class="t" style="top:1034.86px;font-size:16px;line-height:20px;color:#fff;right:132px;text-align:right;">50 MS/s</div><div class="abs" style="left:1793px;top:994px;width:122px;height:62px;background:#404040;"><div class="abs" style="left:0;top:0;width:122px;height:19px;background:#c8c8c8;"></div></div><div class="t" style="top:994.26px;font-size:16px;line-height:20px;color:#000;left:1796px;">Trigger</div><div class="abs bdg" style="left:1859px;top:995px;width:24px;height:17px;line-height:17px;color:#fff;font-size:13px;">C4</div><div class="abs bdg" style="left:1886px;top:995px;width:26px;height:17px;line-height:17px;color:#fff;font-size:13px;">DC</div><div class="t" style="top:1014.86px;font-size:16px;line-height:20px;color:#fff;left:1796px;">Stop</div><div class="t" style="top:1014.86px;font-size:16px;line-height:20px;color:#fff;right:7px;text-align:right;">170 mA</div><div class="t" style="top:1034.86px;font-size:16px;line-height:20px;color:#fff;left:1796px;">Edge</div><div class="t" style="top:1034.86px;font-size:16px;line-height:20px;color:#fff;right:6px;text-align:right;">Positive</div><div class="abs" style="left:0;top:1058px;width:1920px;height:1px;background:#6a6a6a;"></div><div class="t" style="left:7px;top:1058.5px;font-size:20.5px;line-height:21px;font-weight:bold;color:#1a1a1a;transform-origin:0 0;transform:scaleX(0.765);-webkit-text-stroke:0.5px #1a1a1a;">TELEDYNE</div><div class="t" style="left:95px;top:1058.5px;font-size:20.5px;line-height:21px;color:#333;transform-origin:0 0;transform:scaleX(0.70);-webkit-text-stroke:0.2px #333;">LECROY</div><div class="t" style="top:1060.46px;font-size:16px;line-height:20px;color:#000;right:16px;text-align:right;">10/20/2023 8:27:46 PM</div></body></html>
